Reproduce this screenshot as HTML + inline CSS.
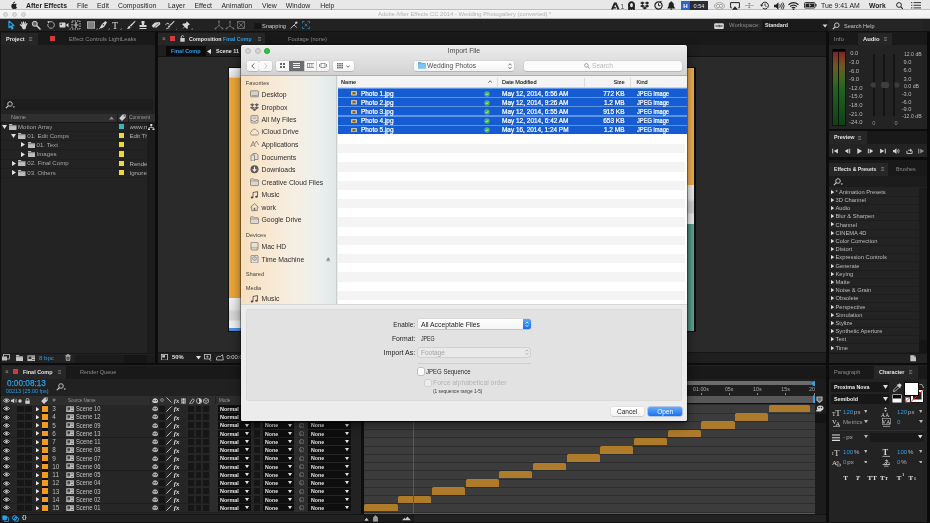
<!DOCTYPE html>
<html><head><meta charset="utf-8"><title>After Effects - Import File</title>
<style>
html,body{margin:0;padding:0;background:#232323;}
body{width:930px;height:523px;overflow:hidden;font-family:"Liberation Sans",sans-serif;}
#root{will-change:transform;position:relative;width:930px;height:523px;overflow:hidden;background:#232323;}
#root div,#root span,#root svg{box-sizing:border-box;}
</style></head><body>
<div id="root">
<!-- mac menubar -->
<div style="position:absolute;left:0px;top:0px;width:930px;height:10.4px;background:#e8e8e8;border-bottom:.8px solid #bcbcbc;"></div>
<svg style="position:absolute;left:9.5px;top:1.2px;" width="8" height="9" viewBox="0 0 10 12"><path d="M5.6 2.6c.5-.6.8-1.3.7-2.1-.7 0-1.5.5-1.9 1-.4.5-.8 1.300-.7 2 .8.100 1.500-.400 1.900-.900zM7.700 6.500c0-1.200 1-1.800 1-1.800-.600-.800-1.400-.900-1.700-.900-.700-.100-1.400.400-1.800.400-.400 0-.900-.400-1.500-.400-.800 0-1.500.500-1.900 1.200-.800 1.400-.200 3.500.600 4.600.400.600.900 1.200 1.500 1.200.600 0 .800-.400 1.500-.400s.900.400 1.500.400 1-.600 1.400-1.100c.400-.600.600-1.300.600-1.300s-1.200-.500-1.200-1.900z" fill="#222"/></svg>
<span style="position:absolute;top:1.529px;font-size:6.9px;line-height:8.28px;color:#1a1a1a;white-space:nowrap;font-weight:bold;left:26px;">After Effects</span>
<span style="position:absolute;top:1.529px;font-size:6.9px;line-height:8.28px;color:#1f1f1f;white-space:nowrap;left:77px;">File</span>
<span style="position:absolute;top:1.529px;font-size:6.9px;line-height:8.28px;color:#1f1f1f;white-space:nowrap;left:97px;">Edit</span>
<span style="position:absolute;top:1.529px;font-size:6.9px;line-height:8.28px;color:#1f1f1f;white-space:nowrap;left:118px;">Composition</span>
<span style="position:absolute;top:1.529px;font-size:6.9px;line-height:8.28px;color:#1f1f1f;white-space:nowrap;left:168px;">Layer</span>
<span style="position:absolute;top:1.529px;font-size:6.9px;line-height:8.28px;color:#1f1f1f;white-space:nowrap;left:194.5px;">Effect</span>
<span style="position:absolute;top:1.529px;font-size:6.9px;line-height:8.28px;color:#1f1f1f;white-space:nowrap;left:221.5px;">Animation</span>
<span style="position:absolute;top:1.529px;font-size:6.9px;line-height:8.28px;color:#1f1f1f;white-space:nowrap;left:262px;">View</span>
<span style="position:absolute;top:1.529px;font-size:6.9px;line-height:8.28px;color:#1f1f1f;white-space:nowrap;left:285.8px;">Window</span>
<span style="position:absolute;top:1.529px;font-size:6.9px;line-height:8.28px;color:#1f1f1f;white-space:nowrap;left:320.2px;">Help</span>
<span style="position:absolute;top:1.529px;font-size:6.9px;line-height:8.28px;color:#1f1f1f;white-space:nowrap;left:821px;">Tue 9:41 AM</span>
<span style="position:absolute;top:1.529px;font-size:6.9px;line-height:8.28px;color:#1a1a1a;white-space:nowrap;font-weight:bold;left:868.8px;transform:scaleX(0.9752);transform-origin:0 50%;">Work</span>
<svg style="position:absolute;left:611px;top:1.5px;" width="14" height="8" viewBox="0 0 14 8"><path d="M0 7.500L3 .5h2.500L8.500 7.500H6.500L4.300 2.500 3.200 5h1.300l.7 1.400H2.600L2.100 7.500z" fill="#222"/><text x="9.500" y="7" font-size="6.500" font-family="Liberation Sans" fill="#444">1</text></svg>
<svg style="position:absolute;left:627px;top:1px;" width="9" height="9.5" viewBox="0 0 9 9.5"><path d="M4.500.3C2.300.3 1 2 1 4.200c0 1.500.3 3 .2 4.800h2l.3-1.200.6 1.200h.8l.6-1.200.3 1.200h2C7.700 7.200 8 5.700 8 4.200 8 2 6.700.3 4.500.3z" fill="#222"/><ellipse cx="4.500" cy="4.200" rx="1.400" ry="2.100" fill="#e8e8e8"/></svg>
<svg style="position:absolute;left:639.5px;top:1.2px;" width="9.5" height="9" viewBox="0 0 9.5 9"><path d="M2.400.4L0 2l2.400 1.500L4.750 2zM7.100.4L4.750 2 7.100 3.500 9.500 2zM0 5l2.400 1.600L4.750 5 2.400 3.500zM7.100 3.500L4.750 5l2.350 1.600L9.500 5zM2.400 7.100l2.350 1.500L7.100 7.100 4.750 5.600z" fill="#222"/></svg>
<svg style="position:absolute;left:653.5px;top:1px;" width="9" height="9" viewBox="0 0 9 9"><circle cx="4.500" cy="4.500" r="3.600" fill="none" stroke="#222" stroke-width="1.200"/><path d="M4.500 2.300v2.400h1.900" fill="none" stroke="#222" stroke-width="1"/><path d="M5.800 0l2 .3-1 1.600z" fill="#222"/></svg>
<svg style="position:absolute;left:667px;top:1.2px;" width="8.5" height="9" viewBox="0 0 8.5 9"><path d="M4.250.2c.5 0 .7.300.7.700C6.300 1.300 6.800 2.600 6.800 4c0 1.600.6 2.300 1.400 2.900v.5H.3v-.5C1.100 6.300 1.700 5.600 1.700 4c0-1.400.5-2.700 1.850-3.100 0-.4.200-.7.700-.7zM3.300 7.800h1.900c0 .6-.4 1-.95 1s-.95-.4-.95-1z" fill="#222"/></svg>
<div style="position:absolute;left:681px;top:1.3px;width:9px;height:8.4px;background:#2f63c8;"></div>
<span style="position:absolute;top:2.192px;font-size:6.2px;line-height:7.44px;color:#fff;white-space:nowrap;font-weight:bold;left:680.5px;width:10px;text-align:center;">H</span>
<div style="position:absolute;left:690px;top:1.3px;width:18px;height:8.4px;background:#2a2c33;"></div>
<span style="position:absolute;top:2.76px;font-size:5.6px;line-height:6.72px;color:#e4e4e4;white-space:nowrap;left:689.0px;width:20px;text-align:center;">0:54</span>
<svg style="position:absolute;left:713.5px;top:1.5px;" width="11" height="8" viewBox="0 0 11 8"><ellipse cx="5.500" cy="4" rx="5" ry="3.400" fill="none" stroke="#a6a6a6" stroke-width="1"/><circle cx="4" cy="4" r="1.700" fill="none" stroke="#a6a6a6" stroke-width=".9"/><circle cx="7" cy="4" r="1.700" fill="none" stroke="#a6a6a6" stroke-width=".9"/></svg>
<svg style="position:absolute;left:730px;top:1.5px;" width="10" height="8" viewBox="0 0 10 8"><path d="M1.800 5.800H.6V.6h8.800v5.200H8.200" fill="none" stroke="#222" stroke-width="1"/><path d="M5 4.200L8 7.700H2z" fill="#222"/></svg>
<svg style="position:absolute;left:745px;top:2px;" width="8.5" height="7" viewBox="0 0 8.5 7"><path d="M0 3.500h8.500M4.250 1v5" stroke="#999" stroke-width=".8"/><path d="M2.900 2L4.250.4 5.600 2zM2.900 5l1.350 1.600L5.600 5z" fill="#8a8a8a"/></svg>
<svg style="position:absolute;left:759.5px;top:1px;" width="9.5" height="9" viewBox="0 0 9.5 9"><path d="M1.600 4.500a3.400 3.400 0 1 1 1 2.500" fill="none" stroke="#222" stroke-width="1"/><path d="M0 3.700l1.600 2 1.700-2z" fill="#222"/><path d="M5 2.500v2.200l1.500 1" fill="none" stroke="#222" stroke-width=".9"/></svg>
<svg style="position:absolute;left:773.5px;top:1.5px;" width="11" height="8" viewBox="0 0 11 8"><path d="M0 2.700h1.800L4.500.3v7.400L1.800 5.300H0z" fill="#222"/><path d="M5.800 2.300q1.100 1.700 0 3.400M7.300 1.300q1.900 2.700 0 5.400M8.800.4q2.700 3.600 0 7.200" fill="none" stroke="#222" stroke-width=".9"/></svg>
<svg style="position:absolute;left:788px;top:1.5px;" width="11" height="8" viewBox="0 0 11 8"><path d="M.5 2.800q5-4.200 10 0M2.100 4.500q3.400-2.800 6.800 0M3.700 6.100q1.800-1.500 3.600 0" fill="none" stroke="#222" stroke-width="1.150"/><circle cx="5.500" cy="7.300" r=".8" fill="#222"/></svg>
<svg style="position:absolute;left:804px;top:2.2px;" width="13" height="6.5" viewBox="0 0 13 6.5"><rect x=".5" y=".5" width="10.500" height="5.500" rx="1" fill="none" stroke="#222" stroke-width=".9"/><rect x="1.500" y="1.500" width="8.500" height="3.500" fill="#222"/><rect x="11.300" y="2" width="1.200" height="2.500" fill="#222"/><path d="M6.300 1.300L4.700 3.500h1.100L5.300 5.200 7 3h-1.100z" fill="#e8e8e8"/></svg>
<svg style="position:absolute;left:895.5px;top:1.8px;" width="7.5" height="7.5" viewBox="0 0 7.5 7.5"><circle cx="3" cy="3" r="2.400" fill="none" stroke="#222" stroke-width=".95"/><path d="M4.800 4.800L7.100 7.100" stroke="#222" stroke-width="1.100"/></svg>
<svg style="position:absolute;left:910.5px;top:2.3px;" width="10" height="6.5" viewBox="0 0 10 6.5"><path d="M0 .6h1.300M2.500 .6H10M0 3.250h1.300M2.500 3.250H10M0 5.900h1.300M2.500 5.900H10" stroke="#222" stroke-width=".9"/></svg>
<!-- app window title bar -->
<div style="position:absolute;left:0px;top:10.4px;width:930px;height:8.5px;background:linear-gradient(#f7f7f7,#f0f0f0);border-bottom:.8px solid #b4b4b4;"></div>
<div style="position:absolute;left:2.5px;top:12.2px;width:5px;height:5px;background:#dcdcdc;border-radius:50%;border:0.5px solid #c8c8c8;"></div>
<div style="position:absolute;left:11.5px;top:12.2px;width:5px;height:5px;background:#dcdcdc;border-radius:50%;border:0.5px solid #c8c8c8;"></div>
<div style="position:absolute;left:20.5px;top:12.2px;width:5px;height:5px;background:#dcdcdc;border-radius:50%;border:0.5px solid #c8c8c8;"></div>
<span style="position:absolute;top:11.476px;font-size:5.9px;line-height:7.08px;color:#b4b4b4;white-space:nowrap;left:378px;">Adobe After Effects CC 2014 - Wedding Photogallery (converted) *</span>
<!-- tools -->
<div style="position:absolute;left:0px;top:18.9px;width:930px;height:13.1px;background:#222222;"></div>
<div style="position:absolute;left:0px;top:31px;width:930px;height:1.5px;background:#111;"></div>
<svg style="position:absolute;left:6.0px;top:20.2px;" width="10" height="10" viewBox="0 0 10 10"><path d="M3 1l5 4.600-2.200.2 1.200 2.600-1 .5-1.200-2.700L3 7.700z" fill="none" stroke="#2ba0ea" stroke-width="1.250" stroke-linejoin="round"/></svg>
<svg style="position:absolute;left:19.25px;top:20.7px;" width="9.5" height="9" viewBox="0 0 9.5 9"><path d="M3 6L1 4.300c-.6-.6.200-1.400.9-.9l1 .8L2.200 1.600c-.2-.8.900-1.100 1.100-.3l.6 2L4 .9c0-.8 1.100-.8 1.100 0l.1 2.300.7-2c.3-.8 1.300-.4 1 .3L6.400 3.800l1.200-1.500c.5-.6 1.300 0 .8.700L7.300 5c-.4 1-.4 2.100-.9 3.200L3.600 8.300C3.300 7.500 3.300 6.700 3 6z" fill="#d6d6d6"/></svg>
<svg style="position:absolute;left:31.0px;top:20.2px;" width="10" height="10" viewBox="0 0 10 10"><circle cx="3.800" cy="3.800" r="2.500" fill="#6a6a6a" stroke="#d6d6d6" stroke-width="1"/><path d="M5.800 5.800l3.200 3.200" stroke="#d6d6d6" stroke-width="1.500" stroke-linecap="round"/></svg>
<svg style="position:absolute;left:46.4px;top:20.2px;" width="10" height="10" viewBox="0 0 10 10"><path d="M3.400 2.100a3.300 3.300 0 1 1-1.500 1.900" fill="none" stroke="#b4b4b4" stroke-width=".9"/><path d="M1.300 1.200l2.800.1L2.400 3.600z" fill="#d6d6d6"/></svg>
<svg style="position:absolute;left:59.0px;top:20.2px;" width="10" height="10" viewBox="0 0 10 10"><rect x=".5" y="2.500" width="6" height="5" rx=".8" fill="#d6d6d6"/><path d="M6.800 5l2.700-2v4.600z" fill="#d6d6d6"/><circle cx="2.200" cy="4.200" r=".8" fill="#222"/></svg>
<svg style="position:absolute;left:69px;top:28.2px;" width="1.6" height="1.6" viewBox="0 0 1.6 1.6"><path d="M0 1.600L1.600 0V1.600z" fill="#a8a8a8"/></svg>
<svg style="position:absolute;left:71.0px;top:20.2px;" width="10" height="10" viewBox="0 0 10 10"><rect x="1" y="1" width="8" height="8" fill="none" stroke="#d6d6d6" stroke-width=".9" stroke-dasharray="1.500 1"/><path d="M5 2.500v5M2.500 5h5" stroke="#d6d6d6" stroke-width=".9"/><path d="M4 3.300L5 2l1 1.300zM4 6.700L5 8l1-1.300z" fill="#d6d6d6"/></svg>
<svg style="position:absolute;left:86.0px;top:20.2px;" width="10" height="10" viewBox="0 0 10 10"><rect x="1.400" y="1.800" width="7.200" height="6.400" fill="#7a7a7a" stroke="#c4c4c4" stroke-width=".8"/><path d="M1.400 4h7.200M1.400 6h7.200M3.800 1.800v6.400M6.200 1.800v6.400" stroke="#8e8e8e" stroke-width=".4"/></svg>
<svg style="position:absolute;left:96px;top:28.2px;" width="1.6" height="1.6" viewBox="0 0 1.6 1.6"><path d="M0 1.600L1.600 0V1.600z" fill="#a8a8a8"/></svg>
<svg style="position:absolute;left:98.0px;top:20.2px;" width="10" height="10" viewBox="0 0 10 10"><path d="M7.500 1L9 2.500 6 7 3 8.500 2 8l.5-1.500L4 4z" fill="#d6d6d6"/><path d="M1 9l1.600-1.600" stroke="#d6d6d6" stroke-width=".8"/><circle cx="5.300" cy="4.800" r=".7" fill="#222"/></svg>
<svg style="position:absolute;left:108px;top:28.2px;" width="1.6" height="1.6" viewBox="0 0 1.6 1.6"><path d="M0 1.600L1.600 0V1.600z" fill="#a8a8a8"/></svg>
<span style="position:absolute;top:19.685px;font-size:10px;line-height:12.0px;color:#d6d6d6;white-space:nowrap;font-family:'Liberation Serif',serif;left:109.0px;width:12px;text-align:center;">T</span>
<svg style="position:absolute;left:120px;top:28.2px;" width="1.6" height="1.6" viewBox="0 0 1.6 1.6"><path d="M0 1.600L1.600 0V1.600z" fill="#a8a8a8"/></svg>
<svg style="position:absolute;left:126.0px;top:20.2px;" width="10" height="10" viewBox="0 0 10 10"><path d="M9 .8L9.600 1.400 5 6.500 3.800 5.400z" fill="#d6d6d6"/><path d="M3.400 5.800l1.200 1.100C4.200 8.500 2.500 9 .8 8.700 2 8 2.200 6.300 3.400 5.800z" fill="#d6d6d6"/></svg>
<svg style="position:absolute;left:138.0px;top:20.2px;" width="10" height="10" viewBox="0 0 10 10"><path d="M4 1h2c.8 0 .8.800.5 1.500L6 5h2.500v2h-7V5H4l-.5-2.500C3.200 1.800 3.200 1 4 1zM1.500 8h7v1h-7z" fill="#d6d6d6"/></svg>
<svg style="position:absolute;left:150.5px;top:20.2px;" width="10" height="10" viewBox="0 0 10 10"><path d="M4 2.500l4.500-.5 1 2L5.500 7.500H2L.8 5.500z" fill="#d6d6d6"/><path d="M3 7.500l4.500-4" stroke="#222" stroke-width=".6"/></svg>
<svg style="position:absolute;left:165.0px;top:20.2px;" width="10" height="10" viewBox="0 0 10 10"><path d="M9 .8l.6.6-4 4.400-1-.9z" fill="#d6d6d6"/><path d="M4.200 5.200l1 .9c-.3 1.200-1.500 1.600-2.700 1.400.8-.5.900-1.900 1.700-2.300z" fill="#d6d6d6"/><path d="M.5 4.500L3 3l1 1.500" fill="none" stroke="#d6d6d6" stroke-width=".9"/><path d="M1 8.800l3.500-1" stroke="#d6d6d6" stroke-width=".8"/></svg>
<svg style="position:absolute;left:175.5px;top:28.2px;" width="1.6" height="1.6" viewBox="0 0 1.6 1.6"><path d="M0 1.600L1.600 0V1.600z" fill="#a8a8a8"/></svg>
<svg style="position:absolute;left:181.0px;top:20.2px;" width="10" height="10" viewBox="0 0 10 10"><path d="M5.500 1l3.500 3.500-1 .2-1.300 1.300.2 2.200-1 .8L3.800 6.900 1 9.300l2.400-2.800L1.300 4.400l.8-1 2.200.2 1.300-1.300z" fill="#d6d6d6"/></svg>
<svg style="position:absolute;left:191px;top:28.2px;" width="1.6" height="1.6" viewBox="0 0 1.6 1.6"><path d="M0 1.600L1.600 0V1.600z" fill="#a8a8a8"/></svg>
<svg style="position:absolute;left:214.0px;top:20.2px;" width="10" height="10" viewBox="0 0 10 10"><path d="M5 1v4.500M5 5.500L1.500 8.500M5 5.500L8.500 8.500" stroke="#727272" stroke-width=".9" fill="none"/><circle cx="5" cy="1.300" r=".9" fill="#727272"/><circle cx="1.500" cy="8.500" r=".9" fill="#727272"/><circle cx="8.500" cy="8.500" r=".9" fill="#727272"/></svg>
<svg style="position:absolute;left:225.0px;top:20.2px;" width="10" height="10" viewBox="0 0 10 10"><path d="M5 1v5M5 6L1.500 8.500M5 6l3.500 2.500" stroke="#727272" stroke-width=".9" fill="none"/><path d="M3.800 2.300L5 .5l1.200 1.800z" fill="#727272"/><circle cx="1.500" cy="8.500" r=".9" fill="#727272"/><circle cx="8.500" cy="8.500" r=".9" fill="#727272"/></svg>
<svg style="position:absolute;left:236.0px;top:20.2px;" width="10" height="10" viewBox="0 0 10 10"><path d="M1.500 1.500l7 7M8.500 1.500l-7 7M1.500 1.500h7v7h-7z" stroke="#727272" stroke-width=".8" fill="none"/></svg>
<div style="position:absolute;left:254px;top:22.5px;width:6.5px;height:6.2px;background:#151515;"></div>
<span style="position:absolute;top:22.192px;font-size:6.2px;line-height:7.44px;color:#d0d0d0;white-space:nowrap;left:262.4px;transform:scaleX(0.9159);transform-origin:0 50%;">Snapping</span>
<svg style="position:absolute;left:289.0px;top:20.2px;" width="10" height="10" viewBox="0 0 10 10"><path d="M1.500 8.500L5 5M5 5L7.800 7.600" stroke="#c8c8c8" stroke-width=".9" fill="none"/><circle cx="7.300" cy="2.600" r="1.200" fill="#c8c8c8"/><path d="M5 5l2-2" stroke="#c8c8c8" stroke-width=".8"/></svg>
<svg style="position:absolute;left:300.5px;top:20.2px;" width="10" height="10" viewBox="0 0 10 10"><path d="M1.500 3.300V1.500h1.800M6.700 1.500h1.800v1.800M8.500 6.700v1.800H6.700M3.300 8.500H1.500V6.700" stroke="#2488bc" stroke-width=".9" fill="none"/><path d="M3.600 3.600l2.800 2.800M6.400 3.600L3.600 6.400" stroke="#2488bc" stroke-width=".8"/></svg>
<div style="position:absolute;left:762px;top:20px;width:66px;height:11px;background:#1a1a1a;"></div>
<svg style="position:absolute;left:714px;top:22.5px;" width="11" height="6.5" viewBox="0 0 11 6.5"><rect x=".2" y=".2" width="9.600" height="5.800" rx="1" fill="#d6d6d6"/><path d="M1.500 3h2.500M5 1.800v2.400M5 3h3.500" stroke="#222" stroke-width=".9"/></svg>
<span style="position:absolute;top:22.476px;font-size:5.9px;line-height:7.08px;color:#8d8d8d;white-space:nowrap;left:729px;">Workspace:</span>
<span style="position:absolute;top:22.476px;font-size:5.9px;line-height:7.08px;color:#e6e6e6;white-space:nowrap;font-weight:bold;left:765px;transform:scaleX(0.8994);transform-origin:0 50%;">Standard</span>
<svg style="position:absolute;left:822px;top:24px;" width="6" height="4" viewBox="0 0 6 4"><path d="M.5 .5h5L3 3.500z" fill="#d6d6d6"/></svg>
<div style="position:absolute;left:830px;top:20px;width:93px;height:11px;background:#252525;"></div>
<svg style="position:absolute;left:832px;top:21.5px;" width="8" height="8" viewBox="0 0 8 8"><circle cx="4.800" cy="3.200" r="2.300" fill="none" stroke="#d6d6d6" stroke-width=".9"/><path d="M3.200 4.800L.8 7.200" stroke="#d6d6d6" stroke-width="1.100"/></svg>
<span style="position:absolute;top:22.286px;font-size:6.1px;line-height:7.32px;color:#c4c4c4;white-space:nowrap;left:844px;transform:scaleX(0.9086);transform-origin:0 50%;">Search Help</span>
<!-- project panel -->
<div style="position:absolute;left:0px;top:32px;width:155px;height:331px;background:#232323;"></div>
<div style="position:absolute;left:0px;top:32px;width:155px;height:13px;background:#191919;"></div>
<div style="position:absolute;left:1px;top:32.5px;width:36.5px;height:12.5px;background:#262626;"></div>
<span style="position:absolute;top:35.286px;font-size:6.1px;line-height:7.32px;color:#e4e4e4;white-space:nowrap;font-weight:bold;left:6px;transform:scaleX(0.8946);transform-origin:0 50%;">Project</span>
<svg style="position:absolute;left:29.4px;top:37.1px;" width="3.2" height="4" viewBox="0 0 3.2 4"><path d="M0 .5h3.200M0 2h3.200M0 3.500h3.200" stroke="#777" stroke-width=".75"/></svg>
<div style="position:absolute;left:50px;top:36px;width:5px;height:5px;background:#d23b3b;"></div>
<span style="position:absolute;top:35.286px;font-size:6.1px;line-height:7.32px;color:#8c8c8c;white-space:nowrap;left:69px;transform:scaleX(0.9494);transform-origin:0 50%;">Effect Controls LightLeaks</span>
<div style="position:absolute;left:3.5px;top:98.5px;width:149px;height:11.5px;background:#1d1d1d;"></div>
<svg style="position:absolute;left:4.5px;top:100.5px;" width="11" height="8" viewBox="0 0 11 8"><circle cx="5" cy="3" r="2.300" fill="none" stroke="#cfcfcf" stroke-width=".9"/><path d="M3.400 4.600L.9 7.100" stroke="#cfcfcf" stroke-width="1.100"/><path d="M7.600 5.500h2.400L8.800 6.900z" fill="#cfcfcf"/></svg>
<div style="position:absolute;left:1px;top:113.5px;width:153.5px;height:8px;background:#2f2f2f;"></div>
<div style="position:absolute;left:1px;top:121.5px;width:153.5px;height:0.8px;background:#161616;"></div>
<span style="position:absolute;top:113.76px;font-size:5.6px;line-height:6.72px;color:#9a9a9a;white-space:nowrap;left:11px;">Name</span>
<svg style="position:absolute;left:109px;top:115.5px;" width="5" height="4" viewBox="0 0 5 4"><path d="M0 3.500L2.500 .5 5 3.500z" fill="#8c8c8c"/></svg>
<svg style="position:absolute;left:119px;top:114px;" width="7" height="7" viewBox="0 0 7 7"><path d="M3.600.5h3v3L3 7 .200 4.200z" fill="#d0d0d0"/><circle cx="5.300" cy="1.900" r=".7" fill="#2f2f2f"/></svg>
<span style="position:absolute;top:113.76px;font-size:5.6px;line-height:6.72px;color:#9a9a9a;white-space:nowrap;left:129.3px;transform:scaleX(0.8651);transform-origin:0 50%;">Comment</span>
<div style="position:absolute;left:116.5px;top:113.5px;width:0.6px;height:8px;background:#1c1c1c;"></div>
<div style="position:absolute;left:127.5px;top:113.5px;width:0.6px;height:8px;background:#1c1c1c;"></div>
<div style="position:absolute;left:147px;top:122.5px;width:8px;height:231.5px;background:#1c1c1c;"></div>
<svg style="position:absolute;left:2.0px;top:124.7px;" width="5.0" height="4.0" viewBox="0 0 5 4"><path d="M0 0h5L2.500 4z" fill="#e0e0e0"/></svg>
<svg style="position:absolute;left:9.0px;top:123.7px;" width="7.5" height="6" viewBox="0 0 7.5 6"><path d="M0 .6C0 .3.200 0 .5 0h2.300l.7.900H7c.3 0 .5.200.5.500V5.500c0 .3-.2.500-.5.500H.5C.2 6 0 5.800 0 5.500z" fill="#bdbdbd"/><path d="M0 1.700h7.500" stroke="#3a3a3a" stroke-width=".5"/></svg>
<span style="position:absolute;top:123.286px;font-size:6.1px;line-height:7.32px;color:#a6a6a6;white-space:nowrap;left:18.0px;">Motion Array</span>
<div style="position:absolute;left:119px;top:124.0px;width:5.3px;height:5.3px;background:#3fb3b8;"></div>
<div style="position:absolute;left:129.500px;top:122.7px;width:17.200px;height:8px;overflow:hidden"><span style="position:absolute;top:0.286px;font-size:6.1px;line-height:7.32px;color:#b0b0b0;white-space:nowrap;left:0px;">www.n</span></div>
<div style="position:absolute;left:1px;top:131.1px;width:146px;height:0.6px;background:#1f1f1f;"></div>
<svg style="position:absolute;left:11.3px;top:133.6px;" width="5.0" height="4.0" viewBox="0 0 5 4"><path d="M0 0h5L2.500 4z" fill="#e0e0e0"/></svg>
<svg style="position:absolute;left:18.3px;top:132.6px;" width="7.5" height="6" viewBox="0 0 7.5 6"><path d="M0 .6C0 .3.200 0 .5 0h2.300l.7.900H7c.3 0 .5.200.5.500V5.500c0 .3-.2.500-.5.500H.5C.2 6 0 5.800 0 5.500z" fill="#bdbdbd"/><path d="M0 1.700h7.500" stroke="#3a3a3a" stroke-width=".5"/></svg>
<span style="position:absolute;top:132.286px;font-size:6.1px;line-height:7.32px;color:#a6a6a6;white-space:nowrap;left:27.3px;">01. Edit Comps</span>
<div style="position:absolute;left:119px;top:132.9px;width:5.3px;height:5.3px;background:#ecd93f;"></div>
<div style="position:absolute;left:129.500px;top:131.6px;width:17.200px;height:8px;overflow:hidden"><span style="position:absolute;top:0.286px;font-size:6.1px;line-height:7.32px;color:#b0b0b0;white-space:nowrap;left:0px;">Edit Th</span></div>
<div style="position:absolute;left:1px;top:140.0px;width:146px;height:0.6px;background:#1f1f1f;"></div>
<svg style="position:absolute;left:21.1px;top:142.3px;" width="4.0" height="5.0" viewBox="0 0 4 5"><path d="M0 0L4 2.500 0 5z" fill="#e0e0e0"/></svg>
<svg style="position:absolute;left:27.6px;top:141.8px;" width="7.5" height="6" viewBox="0 0 7.5 6"><path d="M0 .6C0 .3.200 0 .5 0h2.300l.7.900H7c.3 0 .5.200.5.500V5.500c0 .3-.2.500-.5.500H.5C.2 6 0 5.800 0 5.500z" fill="#bdbdbd"/><path d="M0 1.700h7.500" stroke="#3a3a3a" stroke-width=".5"/></svg>
<span style="position:absolute;top:141.286px;font-size:6.1px;line-height:7.32px;color:#a6a6a6;white-space:nowrap;left:36.6px;">01. Text</span>
<div style="position:absolute;left:119px;top:142.10000000000002px;width:5.3px;height:5.3px;background:#ecd93f;"></div>
<div style="position:absolute;left:1px;top:149.20000000000002px;width:146px;height:0.6px;background:#1f1f1f;"></div>
<svg style="position:absolute;left:21.1px;top:151.6px;" width="4.0" height="5.0" viewBox="0 0 4 5"><path d="M0 0L4 2.500 0 5z" fill="#e0e0e0"/></svg>
<svg style="position:absolute;left:27.6px;top:151.1px;" width="7.5" height="6" viewBox="0 0 7.5 6"><path d="M0 .6C0 .3.200 0 .5 0h2.300l.7.900H7c.3 0 .5.200.5.500V5.500c0 .3-.2.500-.5.500H.5C.2 6 0 5.800 0 5.500z" fill="#bdbdbd"/><path d="M0 1.700h7.500" stroke="#3a3a3a" stroke-width=".5"/></svg>
<span style="position:absolute;top:150.286px;font-size:6.1px;line-height:7.32px;color:#a6a6a6;white-space:nowrap;left:36.6px;">Images</span>
<div style="position:absolute;left:119px;top:151.4px;width:5.3px;height:5.3px;background:#ecd93f;"></div>
<div style="position:absolute;left:1px;top:158.5px;width:146px;height:0.6px;background:#1f1f1f;"></div>
<svg style="position:absolute;left:11.8px;top:160.8px;" width="4.0" height="5.0" viewBox="0 0 4 5"><path d="M0 0L4 2.500 0 5z" fill="#e0e0e0"/></svg>
<svg style="position:absolute;left:18.3px;top:160.3px;" width="7.5" height="6" viewBox="0 0 7.5 6"><path d="M0 .6C0 .3.200 0 .5 0h2.300l.7.900H7c.3 0 .5.200.5.500V5.500c0 .3-.2.500-.5.500H.5C.2 6 0 5.800 0 5.500z" fill="#bdbdbd"/><path d="M0 1.700h7.500" stroke="#3a3a3a" stroke-width=".5"/></svg>
<span style="position:absolute;top:159.286px;font-size:6.1px;line-height:7.32px;color:#a6a6a6;white-space:nowrap;left:27.3px;">02. Final Comp</span>
<div style="position:absolute;left:119px;top:160.60000000000002px;width:5.3px;height:5.3px;background:#ecd93f;"></div>
<div style="position:absolute;left:129.500px;top:159.3px;width:17.200px;height:8px;overflow:hidden"><span style="position:absolute;top:0.286px;font-size:6.1px;line-height:7.32px;color:#b0b0b0;white-space:nowrap;left:0px;">Render</span></div>
<div style="position:absolute;left:1px;top:167.70000000000002px;width:146px;height:0.6px;background:#1f1f1f;"></div>
<svg style="position:absolute;left:11.8px;top:170.1px;" width="4.0" height="5.0" viewBox="0 0 4 5"><path d="M0 0L4 2.500 0 5z" fill="#e0e0e0"/></svg>
<svg style="position:absolute;left:18.3px;top:169.6px;" width="7.5" height="6" viewBox="0 0 7.5 6"><path d="M0 .6C0 .3.200 0 .5 0h2.300l.7.900H7c.3 0 .5.200.5.500V5.500c0 .3-.2.500-.5.500H.5C.2 6 0 5.800 0 5.500z" fill="#bdbdbd"/><path d="M0 1.700h7.500" stroke="#3a3a3a" stroke-width=".5"/></svg>
<span style="position:absolute;top:169.286px;font-size:6.1px;line-height:7.32px;color:#a6a6a6;white-space:nowrap;left:27.3px;">03. Others</span>
<div style="position:absolute;left:119px;top:169.9px;width:5.3px;height:5.3px;background:#ecd93f;"></div>
<div style="position:absolute;left:129.500px;top:168.6px;width:17.200px;height:8px;overflow:hidden"><span style="position:absolute;top:0.286px;font-size:6.1px;line-height:7.32px;color:#b0b0b0;white-space:nowrap;left:0px;">Ignore</span></div>
<div style="position:absolute;left:1px;top:177.0px;width:146px;height:0.6px;background:#1f1f1f;"></div>
<svg style="position:absolute;left:148px;top:123.5px;" width="6.5" height="6.5" viewBox="0 0 6.5 6.5"><rect x="2.250" y="0" width="2" height="2" fill="#ddd"/><rect x="0" y="4.500" width="2" height="2" fill="#ddd"/><rect x="4.500" y="4.500" width="2" height="2" fill="#ddd"/><path d="M3.250 2v1.500M1 4.500v-1h4.500v1" stroke="#ddd" stroke-width=".6" fill="none"/></svg>
<div style="position:absolute;left:0px;top:353.5px;width:155px;height:9.5px;background:#222;"></div>
<div style="position:absolute;left:0px;top:353.2px;width:155px;height:0.7px;background:#171717;"></div>
<div style="position:absolute;left:74.5px;top:354.5px;width:49px;height:8px;background:#1b1b1b;"></div>
<div style="position:absolute;left:123.5px;top:354.5px;width:23.5px;height:8px;background:#161616;"></div>
<div style="position:absolute;left:147px;top:354.5px;width:8px;height:8px;background:#1b1b1b;"></div>
<svg style="position:absolute;left:2px;top:354.1px;" width="8" height="7" viewBox="0 0 8 7"><rect x="1.500" y=".5" width="6" height="4.500" fill="none" stroke="#bbb" stroke-width=".8"/><rect x="0" y="2.500" width="5" height="4" fill="#bbb"/></svg>
<svg style="position:absolute;left:15.5px;top:354.8px;" width="7.5" height="6" viewBox="0 0 7.5 6"><path d="M0 .6C0 .3.200 0 .5 0h2.300l.7.900H7c.3 0 .5.200.5.500V5.500c0 .3-.2.500-.5.500H.5C.2 6 0 5.800 0 5.500z" fill="#c4c4c4"/><path d="M0 1.700h7.500" stroke="#3a3a3a" stroke-width=".5"/></svg>
<svg style="position:absolute;left:26.5px;top:354.5px;" width="8.5" height="6.5" viewBox="0 0 8.5 6.5"><rect x=".4" y=".4" width="7.700" height="5.700" fill="#bdbdbd"/><rect x="1.500" y="1.500" width="3" height="2.500" fill="#333"/><path d="M5 4.500h2.500M5.500 2h2" stroke="#333" stroke-width=".7"/></svg>
<span style="position:absolute;top:354.286px;font-size:6.1px;line-height:7.32px;color:#2ba0ea;white-space:nowrap;left:39px;">8 bpc</span>
<svg style="position:absolute;left:64.5px;top:354.4px;" width="6" height="7" viewBox="0 0 6 7"><path d="M.3 1.500h5.400M2 1.500V.6h2v.9M1 2.500h4l-.4 4.200H1.400z" fill="none" stroke="#bbb" stroke-width=".8"/><path d="M2.300 3.300v2.700M3.700 3.300v2.700" stroke="#bbb" stroke-width=".5"/></svg>
<div style="position:absolute;left:155px;top:32px;width:3px;height:331px;background:#0c0c0c;"></div>
<div style="position:absolute;left:826px;top:32px;width:2.5px;height:491px;background:#0c0c0c;"></div>
<div style="position:absolute;left:0px;top:362.8px;width:826px;height:2.7px;background:#0c0c0c;"></div>
<!-- composition panel -->
<div style="position:absolute;left:158px;top:32px;width:668px;height:331px;background:#2a2a2a;"></div>
<div style="position:absolute;left:158px;top:32px;width:668px;height:13px;background:#191919;"></div>
<div style="position:absolute;left:158px;top:32.5px;width:106.5px;height:12.5px;background:#262626;"></div>
<span style="position:absolute;top:34.908px;font-size:6.5px;line-height:7.8px;color:#9a9a9a;white-space:nowrap;left:160.0px;width:8px;text-align:center;">×</span>
<div style="position:absolute;left:170px;top:36px;width:5px;height:5px;background:#d23b3b;"></div>
<svg style="position:absolute;left:179.5px;top:34.8px;" width="5" height="7" viewBox="0 0 5 7"><rect x=".3" y="3" width="4.400" height="3.700" fill="#cfcfcf"/><path d="M1.300 3V1.800a1.200 1.200 0 0 1 2.400 0" fill="none" stroke="#cfcfcf" stroke-width=".8"/></svg>
<span style="position:absolute;top:35.286px;font-size:6.1px;line-height:7.32px;color:#e4e4e4;white-space:nowrap;font-weight:bold;left:188.8px;transform:scaleX(0.8719);transform-origin:0 50%;">Composition</span>
<span style="position:absolute;top:35.286px;font-size:6.1px;line-height:7.32px;color:#2ba0ea;white-space:nowrap;font-weight:bold;left:223.3px;transform:scaleX(0.8642);transform-origin:0 50%;">Final Comp</span>
<svg style="position:absolute;left:257.9px;top:37.1px;" width="3.2" height="4" viewBox="0 0 3.2 4"><path d="M0 .5h3.200M0 2h3.200M0 3.500h3.200" stroke="#777" stroke-width=".75"/></svg>
<span style="position:absolute;top:35.286px;font-size:6.1px;line-height:7.32px;color:#8c8c8c;white-space:nowrap;left:287.5px;transform:scaleX(0.935);transform-origin:0 50%;">Footage (none)</span>
<div style="position:absolute;left:158px;top:45px;width:668px;height:11.3px;background:#1f1f1f;"></div>
<div style="position:absolute;left:158px;top:56px;width:668px;height:0.9px;background:#131313;"></div>
<div style="position:absolute;left:166px;top:45.8px;width:39.5px;height:10.4px;background:#0b0b0b;"></div>
<span style="position:absolute;top:47.286px;font-size:6.1px;line-height:7.32px;color:#2ba0ea;white-space:nowrap;font-weight:bold;left:171px;transform:scaleX(0.8883);transform-origin:0 50%;">Final Comp</span>
<svg style="position:absolute;left:206.5px;top:48.5px;" width="4" height="5" viewBox="0 0 4 5"><path d="M4 0L0 2.500 4 5z" fill="#e0e0e0"/></svg>
<span style="position:absolute;top:47.286px;font-size:6.1px;line-height:7.32px;color:#e2e2e2;white-space:nowrap;font-weight:bold;left:215.5px;transform:scaleX(0.8807);transform-origin:0 50%;">Scene 11</span>
<div style="position:absolute;left:228px;top:67.4px;width:467.5px;height:264.2px;background:#0e0e0e;"></div>
<div style="position:absolute;left:229px;top:68.4px;width:465.3px;height:230px;background:linear-gradient(90deg,#eca636,#f0b150);"></div>
<div style="position:absolute;left:229px;top:68.4px;width:20px;height:9.3px;background:linear-gradient(#f4f4f4,#e2e4e8 80%,#efc98a);"></div>
<div style="position:absolute;left:229px;top:298px;width:20px;height:30.5px;background:linear-gradient(#f2f2f2,#e9e9e9 35%,#d6d6d6 45%,#d8d8d8 70%,#efefef 75%,#f4f4f4);"></div>
<div style="position:absolute;left:229px;top:328px;width:20px;height:2.5px;background:#4a90e0;"></div>
<div style="position:absolute;left:680px;top:185px;width:14.3px;height:39px;background:linear-gradient(#f0f0f0,#ededed 35%,#d2d2d2 45%,#d0d0d0 70%,#ebebeb 75%,#f0f0f0);"></div>
<div style="position:absolute;left:680px;top:224px;width:14.3px;height:106.5px;background:linear-gradient(90deg,#3e8270 50%,#56998a 75%,#68a898);"></div>
<div style="position:absolute;left:158px;top:352px;width:668px;height:11px;background:#1f1f1f;"></div>
<div style="position:absolute;left:158px;top:351.6px;width:668px;height:0.7px;background:#171717;"></div>
<svg style="position:absolute;left:160.5px;top:353.8px;" width="7" height="6.5" viewBox="0 0 7 6.5"><rect x=".4" y=".4" width="6.200" height="5.700" fill="none" stroke="#c8c8c8" stroke-width=".8"/><rect x="1.200" y="1.200" width="2.800" height="2.300" fill="#c8c8c8"/></svg>
<span style="position:absolute;top:353.57px;font-size:5.8px;line-height:6.96px;color:#e0e0e0;white-space:nowrap;font-weight:bold;left:172px;">50%</span>
<svg style="position:absolute;left:195.5px;top:355.5px;" width="5" height="4" viewBox="0 0 5 4"><path d="M0 0h5L2.500 3.500z" fill="#e0e0e0"/></svg>
<svg style="position:absolute;left:204px;top:353.7px;" width="8" height="7" viewBox="0 0 8 7"><rect x=".4" y=".4" width="6" height="4.500" fill="none" stroke="#c8c8c8" stroke-width=".8"/><path d="M3.400 1.500v2.300M2.200 2.650h2.400M5 5.200l2.300 1.500" stroke="#c8c8c8" stroke-width=".7"/></svg>
<svg style="position:absolute;left:215.5px;top:353.7px;" width="8" height="7" viewBox="0 0 8 7"><path d="M.5 6V3.500L3 2l1 .8L6.500.6 7.300 6z" fill="none" stroke="#c8c8c8" stroke-width=".8"/></svg>
<span style="position:absolute;top:353.57px;font-size:5.8px;line-height:6.96px;color:#dcdcdc;white-space:nowrap;left:226.5px;">0:00:08:13</span>
<!-- right panels -->
<div style="position:absolute;left:828.5px;top:32px;width:101.5px;height:491px;background:#232323;"></div>
<div style="position:absolute;left:828.5px;top:32px;width:101.5px;height:13px;background:#191919;"></div>
<span style="position:absolute;top:35.286px;font-size:6.1px;line-height:7.32px;color:#8c8c8c;white-space:nowrap;left:833.7px;">Info</span>
<div style="position:absolute;left:857.5px;top:32.5px;width:34.5px;height:12.5px;background:#262626;"></div>
<span style="position:absolute;top:35.286px;font-size:6.1px;line-height:7.32px;color:#e4e4e4;white-space:nowrap;font-weight:bold;left:863px;transform:scaleX(0.9549);transform-origin:0 50%;">Audio</span>
<svg style="position:absolute;left:883.9px;top:37.1px;" width="3.2" height="4" viewBox="0 0 3.2 4"><path d="M0 .5h3.200M0 2h3.200M0 3.500h3.200" stroke="#777" stroke-width=".75"/></svg>
<div style="position:absolute;left:832px;top:48.5px;width:14px;height:77px;background:#111;"></div>
<div style="position:absolute;left:833px;top:49px;width:12px;height:1.8px;background:#000;"></div>
<div style="position:absolute;left:832.8px;top:52px;width:5.7px;height:73px;background:linear-gradient(#7a2622 0%,#7a3d22 8%,#6e5a1e 20%,#3f6a1e 36%,#1c6420 52%,#16501c 80%,#123f17 100%);"></div>
<div style="position:absolute;left:839.1px;top:52px;width:5.7px;height:73px;background:linear-gradient(#7a2622 0%,#7a3d22 8%,#6e5a1e 20%,#3f6a1e 36%,#1c6420 52%,#16501c 80%,#123f17 100%);"></div>
<span style="position:absolute;top:50.476px;font-size:5.9px;line-height:7.08px;color:#b9b9b9;white-space:nowrap;left:850.2px;">0.0</span>
<span style="position:absolute;top:59.476px;font-size:5.9px;line-height:7.08px;color:#b9b9b9;white-space:nowrap;left:849px;">-3.0</span>
<span style="position:absolute;top:68.476px;font-size:5.9px;line-height:7.08px;color:#b9b9b9;white-space:nowrap;left:849px;">-6.0</span>
<span style="position:absolute;top:76.476px;font-size:5.9px;line-height:7.08px;color:#b9b9b9;white-space:nowrap;left:849px;">-9.0</span>
<span style="position:absolute;top:85.476px;font-size:5.9px;line-height:7.08px;color:#b9b9b9;white-space:nowrap;left:849px;">-12.0</span>
<span style="position:absolute;top:93.476px;font-size:5.9px;line-height:7.08px;color:#b9b9b9;white-space:nowrap;left:849px;">-15.0</span>
<span style="position:absolute;top:102.476px;font-size:5.9px;line-height:7.08px;color:#b9b9b9;white-space:nowrap;left:849px;">-18.0</span>
<span style="position:absolute;top:111.476px;font-size:5.9px;line-height:7.08px;color:#b9b9b9;white-space:nowrap;left:849px;">-21.0</span>
<span style="position:absolute;top:119.476px;font-size:5.9px;line-height:7.08px;color:#b9b9b9;white-space:nowrap;left:849px;">-24.0</span>
<div style="position:absolute;left:873.0px;top:54px;width:2.4px;height:61.5px;background:#131313;"></div>
<div style="position:absolute;left:882.9px;top:54px;width:2.4px;height:61.5px;background:#131313;"></div>
<div style="position:absolute;left:892.8px;top:54px;width:2.4px;height:61.5px;background:#131313;"></div>
<svg style="position:absolute;left:869.5px;top:82.3px;" width="30" height="6" viewBox="0 0 30 6"><path d="M0 3l2-2.500h3.500v5H2z" fill="#3c3c3c"/><path d="M30 3l-2-2.500h-3.500v5H28z" fill="#3c3c3c"/><path d="M10.500 3l1.500-3h6l1.500 3-1.500 3h-6z" fill="#3e3e3e"/></svg>
<span style="position:absolute;top:50.665px;font-size:5.7px;line-height:6.84px;color:#b9b9b9;white-space:nowrap;left:903.5px;transform:scaleX(0.9008);transform-origin:0 50%;">12.0 dB</span>
<span style="position:absolute;top:58.665px;font-size:5.7px;line-height:6.84px;color:#b9b9b9;white-space:nowrap;left:903.5px;">9.0</span>
<span style="position:absolute;top:66.665px;font-size:5.7px;line-height:6.84px;color:#b9b9b9;white-space:nowrap;left:903.5px;">6.0</span>
<span style="position:absolute;top:75.665px;font-size:5.7px;line-height:6.84px;color:#b9b9b9;white-space:nowrap;left:903.5px;">3.0</span>
<span style="position:absolute;top:82.665px;font-size:5.7px;line-height:6.84px;color:#b9b9b9;white-space:nowrap;left:903.5px;transform:scaleX(0.9102);transform-origin:0 50%;">0.0 dB</span>
<span style="position:absolute;top:90.665px;font-size:5.7px;line-height:6.84px;color:#b9b9b9;white-space:nowrap;left:901.7px;">-3.0</span>
<span style="position:absolute;top:98.665px;font-size:5.7px;line-height:6.84px;color:#b9b9b9;white-space:nowrap;left:901.7px;">-6.0</span>
<span style="position:absolute;top:105.665px;font-size:5.7px;line-height:6.84px;color:#b9b9b9;white-space:nowrap;left:901.7px;">-9.0</span>
<span style="position:absolute;top:112.665px;font-size:5.7px;line-height:6.84px;color:#b9b9b9;white-space:nowrap;left:901.7px;transform:scaleX(0.9142);transform-origin:0 50%;">-12.0 dB</span>
<span style="position:absolute;top:119.665px;font-size:5.7px;line-height:6.84px;color:#8c8c8c;white-space:nowrap;left:869.8px;width:8px;text-align:center;">0</span>
<span style="position:absolute;top:119.665px;font-size:5.7px;line-height:6.84px;color:#8c8c8c;white-space:nowrap;left:892.0px;width:8px;text-align:center;">0</span>
<div style="position:absolute;left:828.5px;top:128.5px;width:101.5px;height:2.5px;background:#0c0c0c;"></div>
<div style="position:absolute;left:828.5px;top:131px;width:101.5px;height:12.5px;background:#191919;"></div>
<div style="position:absolute;left:829.0px;top:131px;width:38px;height:12.5px;background:#262626;"></div>
<span style="position:absolute;top:133.286px;font-size:6.1px;line-height:7.32px;color:#e4e4e4;white-space:nowrap;font-weight:bold;left:833.7px;transform:scaleX(0.889);transform-origin:0 50%;">Preview</span>
<svg style="position:absolute;left:858.4px;top:135.70000000000002px;" width="3.2" height="4" viewBox="0 0 3.2 4"><path d="M0 .5h3.200M0 2h3.200M0 3.500h3.200" stroke="#777" stroke-width=".75"/></svg>
<svg style="position:absolute;left:832.0px;top:147.9px;" width="7" height="6.2" viewBox="0 0 8 7"><path d="M.8 .8v5.400" stroke="#d2d2d2" stroke-width="1.100"/><path d="M6.800 .8L2 3.500l4.800 2.700z" fill="#d2d2d2"/></svg>
<svg style="position:absolute;left:844.2px;top:147.9px;" width="7" height="6.2" viewBox="0 0 8 7"><path d="M6.500 .8v5.400" stroke="#d2d2d2" stroke-width="1.100"/><path d="M5 .8L.8 3.500 5 6.200z" fill="#d2d2d2"/></svg>
<svg style="position:absolute;left:855.8px;top:147.9px;" width="7" height="6.2" viewBox="0 0 8 7"><path d="M1.500 .3L7 3.500 1.500 6.700z" fill="#d2d2d2"/></svg>
<svg style="position:absolute;left:867.0px;top:147.9px;" width="7" height="6.2" viewBox="0 0 8 7"><path d="M1.500 .8v5.400" stroke="#d2d2d2" stroke-width="1.100"/><path d="M3 .8l4.200 2.700L3 6.200z" fill="#d2d2d2"/></svg>
<svg style="position:absolute;left:879.3px;top:147.9px;" width="7" height="6.2" viewBox="0 0 8 7"><path d="M7.200 .8v5.400" stroke="#d2d2d2" stroke-width="1.100"/><path d="M1.200 .8L6 3.500 1.200 6.200z" fill="#d2d2d2"/></svg>
<svg style="position:absolute;left:892.5px;top:147.9px;" width="7" height="6.2" viewBox="0 0 8 7"><path d="M0 2.300h1.600L4 .3v6.400L1.600 4.700H0z" fill="#d2d2d2"/><path d="M5 2q1 1.500 0 3M6.200 1q1.800 2.500 0 5" fill="none" stroke="#d2d2d2" stroke-width=".8"/></svg>
<svg style="position:absolute;left:906.1px;top:147.9px;" width="7" height="6.2" viewBox="0 0 8 7"><path d="M1 3.200v3h6v-3" fill="none" stroke="#d2d2d2" stroke-width="1"/><path d="M2.500 2.500h3" stroke="#d2d2d2" stroke-width="1"/><path d="M4.800 .6L7 2.500 4.800 4.400z" fill="#d2d2d2"/></svg>
<svg style="position:absolute;left:917.5px;top:147.9px;" width="7" height="6.2" viewBox="0 0 8 7"><path d="M.8 .8v5.400" stroke="#8c8c8c" stroke-width="1.400"/><path d="M2.500 .8l4.500 2.700-4.500 2.700z" fill="#8c8c8c"/></svg>
<div style="position:absolute;left:828.5px;top:157.4px;width:101.5px;height:2.8px;background:#0c0c0c;"></div>
<div style="position:absolute;left:828.5px;top:160.2px;width:101.5px;height:3px;background:#191919;"></div>
<div style="position:absolute;left:828.5px;top:163px;width:101.5px;height:13px;background:#191919;"></div>
<div style="position:absolute;left:829.0px;top:163px;width:59px;height:13px;background:#262626;"></div>
<span style="position:absolute;top:165.286px;font-size:6.1px;line-height:7.32px;color:#e4e4e4;white-space:nowrap;font-weight:bold;left:833.7px;transform:scaleX(0.8469);transform-origin:0 50%;">Effects &amp; Presets</span>
<svg style="position:absolute;left:881.4px;top:167.4px;" width="3.2" height="4" viewBox="0 0 3.2 4"><path d="M0 .5h3.200M0 2h3.200M0 3.500h3.200" stroke="#777" stroke-width=".75"/></svg>
<span style="position:absolute;top:165.286px;font-size:6.1px;line-height:7.32px;color:#8c8c8c;white-space:nowrap;left:895.6px;transform:scaleX(0.8758);transform-origin:0 50%;">Brushes</span>
<div style="position:absolute;left:829px;top:176.2px;width:98px;height:10.6px;background:#1c1c1c;"></div>
<svg style="position:absolute;left:832.5px;top:178px;" width="11" height="8" viewBox="0 0 11 8"><circle cx="5" cy="3" r="2.300" fill="none" stroke="#cfcfcf" stroke-width=".9"/><path d="M3.400 4.600L.9 7.100" stroke="#cfcfcf" stroke-width="1.100"/><path d="M7.600 5.500h2.400L8.800 6.900z" fill="#cfcfcf"/></svg>
<svg style="position:absolute;left:830.5999999999999px;top:189.675px;" width="3.4" height="4.25" viewBox="0 0 4 5"><path d="M0 0L4 2.500 0 5z" fill="#e0e0e0"/></svg>
<span style="position:absolute;top:188.618px;font-size:5.75px;line-height:6.9px;color:#bcbcbc;white-space:nowrap;left:835.5px;">* Animation Presets</span>
<div style="position:absolute;left:828.5px;top:195.8px;width:90px;height:0.6px;background:#1d1d1d;"></div>
<svg style="position:absolute;left:830.5999999999999px;top:197.88000000000002px;" width="3.4" height="4.25" viewBox="0 0 4 5"><path d="M0 0L4 2.500 0 5z" fill="#e0e0e0"/></svg>
<span style="position:absolute;top:196.618px;font-size:5.75px;line-height:6.9px;color:#bcbcbc;white-space:nowrap;left:835.5px;">3D Channel</span>
<div style="position:absolute;left:828.5px;top:204.00500000000002px;width:90px;height:0.6px;background:#1d1d1d;"></div>
<svg style="position:absolute;left:830.5999999999999px;top:206.085px;" width="3.4" height="4.25" viewBox="0 0 4 5"><path d="M0 0L4 2.500 0 5z" fill="#e0e0e0"/></svg>
<span style="position:absolute;top:204.618px;font-size:5.75px;line-height:6.9px;color:#bcbcbc;white-space:nowrap;left:835.5px;">Audio</span>
<div style="position:absolute;left:828.5px;top:212.21px;width:90px;height:0.6px;background:#1d1d1d;"></div>
<svg style="position:absolute;left:830.5999999999999px;top:214.29000000000002px;" width="3.4" height="4.25" viewBox="0 0 4 5"><path d="M0 0L4 2.500 0 5z" fill="#e0e0e0"/></svg>
<span style="position:absolute;top:212.618px;font-size:5.75px;line-height:6.9px;color:#bcbcbc;white-space:nowrap;left:835.5px;">Blur &amp; Sharpen</span>
<div style="position:absolute;left:828.5px;top:220.41500000000002px;width:90px;height:0.6px;background:#1d1d1d;"></div>
<svg style="position:absolute;left:830.5999999999999px;top:222.495px;" width="3.4" height="4.25" viewBox="0 0 4 5"><path d="M0 0L4 2.500 0 5z" fill="#e0e0e0"/></svg>
<span style="position:absolute;top:221.618px;font-size:5.75px;line-height:6.9px;color:#bcbcbc;white-space:nowrap;left:835.5px;">Channel</span>
<div style="position:absolute;left:828.5px;top:228.62px;width:90px;height:0.6px;background:#1d1d1d;"></div>
<svg style="position:absolute;left:830.5999999999999px;top:230.70000000000002px;" width="3.4" height="4.25" viewBox="0 0 4 5"><path d="M0 0L4 2.500 0 5z" fill="#e0e0e0"/></svg>
<span style="position:absolute;top:229.618px;font-size:5.75px;line-height:6.9px;color:#bcbcbc;white-space:nowrap;left:835.5px;">CINEMA 4D</span>
<div style="position:absolute;left:828.5px;top:236.82500000000002px;width:90px;height:0.6px;background:#1d1d1d;"></div>
<svg style="position:absolute;left:830.5999999999999px;top:238.90500000000003px;" width="3.4" height="4.25" viewBox="0 0 4 5"><path d="M0 0L4 2.500 0 5z" fill="#e0e0e0"/></svg>
<span style="position:absolute;top:237.618px;font-size:5.75px;line-height:6.9px;color:#bcbcbc;white-space:nowrap;left:835.5px;">Color Correction</span>
<div style="position:absolute;left:828.5px;top:245.03000000000003px;width:90px;height:0.6px;background:#1d1d1d;"></div>
<svg style="position:absolute;left:830.5999999999999px;top:247.11px;" width="3.4" height="4.25" viewBox="0 0 4 5"><path d="M0 0L4 2.500 0 5z" fill="#e0e0e0"/></svg>
<span style="position:absolute;top:245.618px;font-size:5.75px;line-height:6.9px;color:#bcbcbc;white-space:nowrap;left:835.5px;">Distort</span>
<div style="position:absolute;left:828.5px;top:253.235px;width:90px;height:0.6px;background:#1d1d1d;"></div>
<svg style="position:absolute;left:830.5999999999999px;top:255.315px;" width="3.4" height="4.25" viewBox="0 0 4 5"><path d="M0 0L4 2.500 0 5z" fill="#e0e0e0"/></svg>
<span style="position:absolute;top:253.618px;font-size:5.75px;line-height:6.9px;color:#bcbcbc;white-space:nowrap;left:835.5px;">Expression Controls</span>
<div style="position:absolute;left:828.5px;top:261.44px;width:90px;height:0.6px;background:#1d1d1d;"></div>
<svg style="position:absolute;left:830.5999999999999px;top:263.52px;" width="3.4" height="4.25" viewBox="0 0 4 5"><path d="M0 0L4 2.500 0 5z" fill="#e0e0e0"/></svg>
<span style="position:absolute;top:262.618px;font-size:5.75px;line-height:6.9px;color:#bcbcbc;white-space:nowrap;left:835.5px;">Generate</span>
<div style="position:absolute;left:828.5px;top:269.645px;width:90px;height:0.6px;background:#1d1d1d;"></div>
<svg style="position:absolute;left:830.5999999999999px;top:271.725px;" width="3.4" height="4.25" viewBox="0 0 4 5"><path d="M0 0L4 2.500 0 5z" fill="#e0e0e0"/></svg>
<span style="position:absolute;top:270.618px;font-size:5.75px;line-height:6.9px;color:#bcbcbc;white-space:nowrap;left:835.5px;">Keying</span>
<div style="position:absolute;left:828.5px;top:277.85px;width:90px;height:0.6px;background:#1d1d1d;"></div>
<svg style="position:absolute;left:830.5999999999999px;top:279.93px;" width="3.4" height="4.25" viewBox="0 0 4 5"><path d="M0 0L4 2.500 0 5z" fill="#e0e0e0"/></svg>
<span style="position:absolute;top:278.618px;font-size:5.75px;line-height:6.9px;color:#bcbcbc;white-space:nowrap;left:835.5px;">Matte</span>
<div style="position:absolute;left:828.5px;top:286.055px;width:90px;height:0.6px;background:#1d1d1d;"></div>
<svg style="position:absolute;left:830.5999999999999px;top:288.135px;" width="3.4" height="4.25" viewBox="0 0 4 5"><path d="M0 0L4 2.500 0 5z" fill="#e0e0e0"/></svg>
<span style="position:absolute;top:286.618px;font-size:5.75px;line-height:6.9px;color:#bcbcbc;white-space:nowrap;left:835.5px;">Noise &amp; Grain</span>
<div style="position:absolute;left:828.5px;top:294.26px;width:90px;height:0.6px;background:#1d1d1d;"></div>
<svg style="position:absolute;left:830.5999999999999px;top:296.34000000000003px;" width="3.4" height="4.25" viewBox="0 0 4 5"><path d="M0 0L4 2.500 0 5z" fill="#e0e0e0"/></svg>
<span style="position:absolute;top:294.618px;font-size:5.75px;line-height:6.9px;color:#bcbcbc;white-space:nowrap;left:835.5px;">Obsolete</span>
<div style="position:absolute;left:828.5px;top:302.46500000000003px;width:90px;height:0.6px;background:#1d1d1d;"></div>
<svg style="position:absolute;left:830.5999999999999px;top:304.545px;" width="3.4" height="4.25" viewBox="0 0 4 5"><path d="M0 0L4 2.500 0 5z" fill="#e0e0e0"/></svg>
<span style="position:absolute;top:303.618px;font-size:5.75px;line-height:6.9px;color:#bcbcbc;white-space:nowrap;left:835.5px;">Perspective</span>
<div style="position:absolute;left:828.5px;top:310.67px;width:90px;height:0.6px;background:#1d1d1d;"></div>
<svg style="position:absolute;left:830.5999999999999px;top:312.75px;" width="3.4" height="4.25" viewBox="0 0 4 5"><path d="M0 0L4 2.500 0 5z" fill="#e0e0e0"/></svg>
<span style="position:absolute;top:311.618px;font-size:5.75px;line-height:6.9px;color:#bcbcbc;white-space:nowrap;left:835.5px;">Simulation</span>
<div style="position:absolute;left:828.5px;top:318.875px;width:90px;height:0.6px;background:#1d1d1d;"></div>
<svg style="position:absolute;left:830.5999999999999px;top:320.95500000000004px;" width="3.4" height="4.25" viewBox="0 0 4 5"><path d="M0 0L4 2.500 0 5z" fill="#e0e0e0"/></svg>
<span style="position:absolute;top:319.618px;font-size:5.75px;line-height:6.9px;color:#bcbcbc;white-space:nowrap;left:835.5px;">Stylize</span>
<div style="position:absolute;left:828.5px;top:327.08000000000004px;width:90px;height:0.6px;background:#1d1d1d;"></div>
<svg style="position:absolute;left:830.5999999999999px;top:329.16px;" width="3.4" height="4.25" viewBox="0 0 4 5"><path d="M0 0L4 2.500 0 5z" fill="#e0e0e0"/></svg>
<span style="position:absolute;top:327.618px;font-size:5.75px;line-height:6.9px;color:#bcbcbc;white-space:nowrap;left:835.5px;">Synthetic Aperture</span>
<div style="position:absolute;left:828.5px;top:335.285px;width:90px;height:0.6px;background:#1d1d1d;"></div>
<svg style="position:absolute;left:830.5999999999999px;top:337.365px;" width="3.4" height="4.25" viewBox="0 0 4 5"><path d="M0 0L4 2.500 0 5z" fill="#e0e0e0"/></svg>
<span style="position:absolute;top:335.618px;font-size:5.75px;line-height:6.9px;color:#bcbcbc;white-space:nowrap;left:835.5px;">Text</span>
<div style="position:absolute;left:828.5px;top:343.49px;width:90px;height:0.6px;background:#1d1d1d;"></div>
<svg style="position:absolute;left:830.5999999999999px;top:345.57000000000005px;" width="3.4" height="4.25" viewBox="0 0 4 5"><path d="M0 0L4 2.500 0 5z" fill="#e0e0e0"/></svg>
<span style="position:absolute;top:344.618px;font-size:5.75px;line-height:6.9px;color:#bcbcbc;white-space:nowrap;left:835.5px;">Time</span>
<div style="position:absolute;left:828.5px;top:351.69500000000005px;width:90px;height:0.6px;background:#1d1d1d;"></div>
<div style="position:absolute;left:918.5px;top:187.5px;width:8px;height:166px;background:#1b1b1b;"></div>
<div style="position:absolute;left:918.5px;top:340px;width:8px;height:13.5px;background:#151515;"></div>
<div style="position:absolute;left:828.5px;top:353.5px;width:101.5px;height:9.5px;background:#222;"></div>
<div style="position:absolute;left:828.5px;top:353.2px;width:101.5px;height:0.7px;background:#171717;"></div>
<svg style="position:absolute;left:909.5px;top:355px;" width="6.5" height="6.5" viewBox="0 0 6.5 6.5"><path d="M.3 .3h4.200l1.700 1.700v4.200H.3z" fill="#c4c4c4"/><path d="M4.500 .3v1.700h1.700" fill="none" stroke="#444" stroke-width=".5"/></svg>
<div style="position:absolute;left:828.5px;top:362.8px;width:101.5px;height:2.7px;background:#0c0c0c;"></div>
<div style="position:absolute;left:828.5px;top:365.5px;width:101.5px;height:13px;background:#191919;"></div>
<span style="position:absolute;top:368.286px;font-size:6.1px;line-height:7.32px;color:#8c8c8c;white-space:nowrap;left:833.7px;transform:scaleX(0.9232);transform-origin:0 50%;">Paragraph</span>
<div style="position:absolute;left:873.5px;top:365.5px;width:44px;height:13px;background:#262626;"></div>
<span style="position:absolute;top:368.286px;font-size:6.1px;line-height:7.32px;color:#e4e4e4;white-space:nowrap;font-weight:bold;left:879px;transform:scaleX(0.8953);transform-origin:0 50%;">Character</span>
<svg style="position:absolute;left:909.4px;top:370.2px;" width="3.2" height="4" viewBox="0 0 3.2 4"><path d="M0 .5h3.200M0 2h3.200M0 3.500h3.200" stroke="#777" stroke-width=".75"/></svg>
<div style="position:absolute;left:831.3px;top:382px;width:58px;height:10.2px;background:#171717;"></div>
<span style="position:absolute;top:383.286px;font-size:6.1px;line-height:7.32px;color:#ececec;white-space:nowrap;font-weight:bold;left:833.7px;transform:scaleX(0.8726);transform-origin:0 50%;">Proxima Nova</span>
<svg style="position:absolute;left:882.5px;top:385.1px;" width="5.0" height="4.0" viewBox="0 0 5 4"><path d="M0 0h5L2.500 4z" fill="#e0e0e0"/></svg>
<div style="position:absolute;left:831.3px;top:393.5px;width:58px;height:10.2px;background:#171717;"></div>
<span style="position:absolute;top:395.286px;font-size:6.1px;line-height:7.32px;color:#ececec;white-space:nowrap;font-weight:bold;left:833.7px;transform:scaleX(0.8742);transform-origin:0 50%;">Semibold</span>
<svg style="position:absolute;left:882.5px;top:396.6px;" width="5.0" height="4.0" viewBox="0 0 5 4"><path d="M0 0h5L2.500 4z" fill="#e0e0e0"/></svg>
<svg style="position:absolute;left:892.5px;top:382.5px;" width="9" height="9" viewBox="0 0 9 9"><path d="M6.200 .6c.7-.7 2.900 1.500 2.200 2.200L7.200 4l.5.500-.8.800L3.700 2.100l.8-.8.500.5z" fill="#d4d4d4"/><path d="M4.500 3L1 6.500.500 8.500l2-.5L6 4.500" fill="none" stroke="#d4d4d4" stroke-width=".8"/></svg>
<div style="position:absolute;left:909.5px;top:389px;width:14.5px;height:13.5px;background:#fdfdfd;border:.6px solid #111;"></div>
<svg style="position:absolute;left:909.5px;top:389px;" width="14.5" height="13.5" viewBox="0 0 14.5 13.5"><rect x="3" y="3" width="8.500" height="7.500" fill="#232323"/><path d="M.5 13L14 .5" stroke="#e0282a" stroke-width="1"/></svg>
<div style="position:absolute;left:904px;top:382px;width:14.5px;height:14.3px;background:#ffffff;border:.6px solid #0a0a0a;"></div>
<svg style="position:absolute;left:918.5px;top:382.5px;" width="5" height="5" viewBox="0 0 5 5"><path d="M.5 1.500q3-1.500 4 3" stroke="#ccc" stroke-width=".7" fill="none"/><path d="M3.500 4l1 1 .6-1.400z" fill="#ccc"/></svg>
<div style="position:absolute;left:891.5px;top:394px;width:10.3px;height:8.6px;background:linear-gradient(#050505 0,#050505 48%,#fafafa 52%,#fafafa 100%);border:.6px solid #9a9a9a;border-radius:1px;"></div>
<svg style="position:absolute;left:904.5px;top:397px;" width="5.5" height="5.5" viewBox="0 0 5.5 5.5"><rect x=".4" y=".4" width="4.700" height="4.700" fill="#fff" stroke="#666" stroke-width=".5"/><path d="M.5 5L5 .5" stroke="#e0282a" stroke-width=".9"/></svg>
<svg style="position:absolute;left:831.5px;top:407.5px;" width="9" height="9" viewBox="0 0 9 9"><text x="0" y="7.500" font-family="Liberation Serif" font-size="6" fill="#ddd">T</text><text x="3.200" y="7.800" font-family="Liberation Serif" font-size="9" fill="#ddd">T</text></svg>
<span style="position:absolute;top:408.286px;font-size:6.1px;line-height:7.32px;color:#2ba0ea;white-space:nowrap;left:843px;">120</span>
<span style="position:absolute;top:408.286px;font-size:6.1px;line-height:7.32px;color:#b4b4b4;white-space:nowrap;left:854.0779453125px;">px</span>
<svg style="position:absolute;left:863.7px;top:410.46px;" width="3.5999999999999996" height="2.88" viewBox="0 0 5 4"><path d="M0 0h5L2.500 4z" fill="#b8b8b8"/></svg>
<svg style="position:absolute;left:881px;top:407px;" width="9" height="10" viewBox="0 0 9 10"><path d="M4.500 .3L6 2H3zM4.500 4.800L3 3.200h3z" fill="#ddd"/><text x="0" y="9.700" font-family="Liberation Serif" font-size="5.500" fill="#ddd">A</text><text x="4.300" y="9.700" font-family="Liberation Serif" font-size="5.500" fill="#ddd">A</text></svg>
<span style="position:absolute;top:408.286px;font-size:6.1px;line-height:7.32px;color:#2ba0ea;white-space:nowrap;left:897px;">120</span>
<span style="position:absolute;top:408.286px;font-size:6.1px;line-height:7.32px;color:#b4b4b4;white-space:nowrap;left:908.0779453125px;">px</span>
<svg style="position:absolute;left:918.7px;top:410.46px;" width="3.5999999999999996" height="2.88" viewBox="0 0 5 4"><path d="M0 0h5L2.500 4z" fill="#b8b8b8"/></svg>
<svg style="position:absolute;left:831.5px;top:417.5px;" width="9" height="9" viewBox="0 0 9 9"><text x="0" y="6" font-family="Liberation Serif" font-size="6.500" fill="#ddd">V</text><text x="3.600" y="7.500" font-family="Liberation Serif" font-size="6.500" fill="#ddd">A</text><path d="M1 8.400h7" stroke="#ddd" stroke-width=".6"/></svg>
<span style="position:absolute;top:418.286px;font-size:6.1px;line-height:7.32px;color:#9a9a9a;white-space:nowrap;left:843px;">Metrics</span>
<svg style="position:absolute;left:863.5px;top:420.2px;" width="4.0" height="3.2" viewBox="0 0 5 4"><path d="M0 0h5L2.500 4z" fill="#b8b8b8"/></svg>
<svg style="position:absolute;left:881.5px;top:417.5px;" width="9" height="9" viewBox="0 0 9 9"><text x="0" y="5.500" font-family="Liberation Serif" font-size="5.500" fill="#ddd">V</text><text x="4.300" y="5.500" font-family="Liberation Serif" font-size="5.500" fill="#ddd">A</text><rect x=".3" y=".3" width="8.400" height="6" fill="none" stroke="#ddd" stroke-width=".5"/><path d="M1 8.400h7" stroke="#ddd" stroke-width=".6"/></svg>
<span style="position:absolute;top:418.286px;font-size:6.1px;line-height:7.32px;color:#2ba0ea;white-space:nowrap;left:897px;">0</span>
<svg style="position:absolute;left:918.5px;top:420.2px;" width="4.0" height="3.2" viewBox="0 0 5 4"><path d="M0 0h5L2.500 4z" fill="#b8b8b8"/></svg>
<div style="position:absolute;left:831px;top:429.8px;width:92px;height:0.6px;background:#2f2f2f;"></div>
<svg style="position:absolute;left:831.5px;top:433.5px;" width="8" height="7.5" viewBox="0 0 8 7.5"><path d="M0 1h8M0 3.700h8M0 6.400h8" stroke="#ddd" stroke-width="1.100"/></svg>
<span style="position:absolute;top:433.286px;font-size:6.1px;line-height:7.32px;color:#2ba0ea;white-space:nowrap;left:843px;">-</span>
<span style="position:absolute;top:433.286px;font-size:6.1px;line-height:7.32px;color:#b4b4b4;white-space:nowrap;left:846.3px;">px</span>
<svg style="position:absolute;left:863.5px;top:435.4px;" width="4.0" height="3.2" viewBox="0 0 5 4"><path d="M0 0h5L2.500 4z" fill="#b8b8b8"/></svg>
<div style="position:absolute;left:870px;top:432.5px;width:54px;height:9.5px;background:#1a1a1a;"></div>
<svg style="position:absolute;left:918.25px;top:435.2px;" width="4.5" height="3.6" viewBox="0 0 5 4"><path d="M0 0h5L2.500 4z" fill="#e0e0e0"/></svg>
<svg style="position:absolute;left:831.5px;top:447.5px;" width="9" height="9" viewBox="0 0 9 9"><text x="0" y="7" font-family="Liberation Serif" font-size="5" fill="#ddd">I</text><text x="2" y="7.500" font-family="Liberation Serif" font-size="9" fill="#ddd">T</text></svg>
<span style="position:absolute;top:448.286px;font-size:6.1px;line-height:7.32px;color:#2ba0ea;white-space:nowrap;left:843px;">100</span>
<span style="position:absolute;top:448.286px;font-size:6.1px;line-height:7.32px;color:#b4b4b4;white-space:nowrap;left:854.0779453125px;">%</span>
<svg style="position:absolute;left:863.7px;top:450.06px;" width="3.5999999999999996" height="2.88" viewBox="0 0 5 4"><path d="M0 0h5L2.500 4z" fill="#b8b8b8"/></svg>
<svg style="position:absolute;left:882px;top:447.5px;" width="9" height="9" viewBox="0 0 9 9"><text x=".5" y="6.500" font-family="Liberation Serif" font-size="8.500" font-weight="bold" fill="#ddd">T</text><path d="M.5 8.400h7.500" stroke="#ddd" stroke-width=".7"/></svg>
<span style="position:absolute;top:448.286px;font-size:6.1px;line-height:7.32px;color:#2ba0ea;white-space:nowrap;left:897px;">100</span>
<span style="position:absolute;top:448.286px;font-size:6.1px;line-height:7.32px;color:#b4b4b4;white-space:nowrap;left:908.0779453125px;">%</span>
<svg style="position:absolute;left:918.7px;top:450.06px;" width="3.5999999999999996" height="2.88" viewBox="0 0 5 4"><path d="M0 0h5L2.500 4z" fill="#b8b8b8"/></svg>
<svg style="position:absolute;left:831.5px;top:458px;" width="9" height="9" viewBox="0 0 9 9"><text x="0" y="7" font-family="Liberation Serif" font-size="7" fill="#ddd">A</text><text x="4.500" y="5" font-family="Liberation Serif" font-size="5" fill="#ddd">a</text><path d="M5 6h3.500v2H5z" fill="none" stroke="#ddd" stroke-width=".5"/></svg>
<span style="position:absolute;top:458.286px;font-size:6.1px;line-height:7.32px;color:#2ba0ea;white-space:nowrap;left:843px;">0</span>
<span style="position:absolute;top:458.286px;font-size:6.1px;line-height:7.32px;color:#b4b4b4;white-space:nowrap;left:847.2926484375px;">px</span>
<svg style="position:absolute;left:863.7px;top:460.56px;" width="3.5999999999999996" height="2.88" viewBox="0 0 5 4"><path d="M0 0h5L2.500 4z" fill="#b8b8b8"/></svg>
<svg style="position:absolute;left:882px;top:458px;" width="9" height="9" viewBox="0 0 9 9"><text x="1.500" y="5.500" font-family="Liberation Serif" font-size="6" fill="#ddd">あ</text><path d="M.5 6.500h7.500M2 8.200h4.500" stroke="#ddd" stroke-width=".7"/></svg>
<span style="position:absolute;top:458.286px;font-size:6.1px;line-height:7.32px;color:#2ba0ea;white-space:nowrap;left:897px;">0</span>
<span style="position:absolute;top:458.286px;font-size:6.1px;line-height:7.32px;color:#b4b4b4;white-space:nowrap;left:901.2926484375px;">%</span>
<svg style="position:absolute;left:918.7px;top:460.56px;" width="3.5999999999999996" height="2.88" viewBox="0 0 5 4"><path d="M0 0h5L2.500 4z" fill="#b8b8b8"/></svg>
<span style="position:absolute;top:473.591px;font-size:6.9px;line-height:8.28px;color:#e4e4e4;white-space:nowrap;font-family:'Liberation Serif',serif;font-weight:bold;left:840.5px;width:10px;text-align:center;">T</span>
<span style="position:absolute;top:473.591px;font-size:6.9px;line-height:8.28px;color:#e4e4e4;white-space:nowrap;font-family:'Liberation Serif',serif;font-weight:bold;font-style:italic;left:852.9px;width:10px;text-align:center;">T</span>
<span style="position:absolute;top:473.591px;font-size:6.9px;line-height:8.28px;color:#e4e4e4;white-space:nowrap;font-family:'Liberation Serif',serif;font-weight:bold;left:865.2px;width:14px;text-align:center;">TT</span>
<span style="position:absolute;top:473.591px;font-size:6.9px;line-height:8.28px;color:#e4e4e4;white-space:nowrap;font-family:'Liberation Serif',serif;font-weight:bold;left:877.0px;width:14px;text-align:center;">T<span style="font-size:5px">T</span></span>
<span style="position:absolute;top:473.591px;font-size:6.9px;line-height:8.28px;color:#e4e4e4;white-space:nowrap;font-family:'Liberation Serif',serif;font-weight:bold;left:894.0px;width:10px;text-align:center;">T</span>
<span style="position:absolute;top:473.498px;font-size:3.8px;line-height:4.56px;color:#e4e4e4;white-space:nowrap;font-family:'Liberation Serif',serif;font-weight:bold;left:902.3px;">1</span>
<span style="position:absolute;top:473.591px;font-size:6.9px;line-height:8.28px;color:#e4e4e4;white-space:nowrap;font-family:'Liberation Serif',serif;font-weight:bold;left:905.8px;width:10px;text-align:center;">T</span>
<span style="position:absolute;top:477.498px;font-size:3.8px;line-height:4.56px;color:#e4e4e4;white-space:nowrap;font-family:'Liberation Serif',serif;font-weight:bold;left:914px;">1</span>
<!-- timeline panel -->
<div style="position:absolute;left:0px;top:365.5px;width:826px;height:157.5px;background:#232323;"></div>
<div style="position:absolute;left:0px;top:365.5px;width:826px;height:13px;background:#191919;"></div>
<div style="position:absolute;left:1.5px;top:365.5px;width:64px;height:13px;background:#262626;"></div>
<span style="position:absolute;top:367.908px;font-size:6.5px;line-height:7.8px;color:#9a9a9a;white-space:nowrap;left:3.0px;width:8px;text-align:center;">×</span>
<div style="position:absolute;left:13px;top:369px;width:5px;height:5px;background:#d23b3b;"></div>
<span style="position:absolute;top:368.286px;font-size:6.1px;line-height:7.32px;color:#e4e4e4;white-space:nowrap;font-weight:bold;left:23px;transform:scaleX(0.8883);transform-origin:0 50%;">Final Comp</span>
<svg style="position:absolute;left:57.9px;top:370.2px;" width="3.2" height="4" viewBox="0 0 3.2 4"><path d="M0 .5h3.200M0 2h3.200M0 3.500h3.200" stroke="#777" stroke-width=".75"/></svg>
<span style="position:absolute;top:368.286px;font-size:6.1px;line-height:7.32px;color:#8c8c8c;white-space:nowrap;left:79.5px;transform:scaleX(0.9121);transform-origin:0 50%;">Render Queue</span>
<div style="position:absolute;left:0px;top:378.5px;width:826px;height:17.5px;background:#212121;"></div>
<span style="position:absolute;top:378.352px;font-size:9.2px;line-height:11.04px;color:#2ba0ea;white-space:nowrap;left:7px;transform:scaleX(0.8969);transform-origin:0 50%;-webkit-text-stroke:.25px #2ba0ea;">0:00:08:13</span>
<span style="position:absolute;top:388.044px;font-size:5.3px;line-height:6.36px;color:#2ba0ea;white-space:nowrap;left:5.8px;transform:scaleX(1.0229);transform-origin:0 50%;">00213 (25.00 fps)</span>
<svg style="position:absolute;left:55.5px;top:382.5px;" width="11" height="8" viewBox="0 0 11 8"><circle cx="5" cy="3" r="2.300" fill="none" stroke="#cfcfcf" stroke-width=".9"/><path d="M3.400 4.600L.9 7.100" stroke="#cfcfcf" stroke-width="1.100"/><path d="M7.600 5.500h2.400L8.800 6.900z" fill="#cfcfcf"/></svg>
<div style="position:absolute;left:0px;top:396px;width:362px;height:8.6px;background:#2e2e2e;"></div>
<div style="position:absolute;left:0px;top:404.5px;width:362px;height:0.8px;background:#161616;"></div>
<svg style="position:absolute;left:2.5px;top:397.9px;" width="7" height="5" viewBox="0 0 7 5"><path d="M.3 2.500Q3.500 -1 6.700 2.500 3.500 6 .3 2.500z" fill="none" stroke="#cfcfcf" stroke-width=".8"/><circle cx="3.500" cy="2.500" r="1.200" fill="#cfcfcf"/></svg>
<svg style="position:absolute;left:10.5px;top:397.8px;" width="6" height="5.5" viewBox="0 0 6 5.5"><path d="M0 1.700h1.300L3.200 .2v5L1.300 3.700H0z" fill="#cfcfcf"/><path d="M4 1.500q1 1.200 0 2.400M5 .8q1.600 1.900 0 3.800" fill="none" stroke="#cfcfcf" stroke-width=".6"/></svg>
<svg style="position:absolute;left:18.3px;top:398.5px;" width="4" height="4" viewBox="0 0 4 4"><circle cx="2" cy="2" r="1.700" fill="#cfcfcf"/></svg>
<svg style="position:absolute;left:24.8px;top:397.5px;" width="5" height="6" viewBox="0 0 5 6"><rect x=".3" y="2.600" width="4.400" height="3.200" fill="#cfcfcf"/><path d="M1.200 2.600V1.700a1.300 1.300 0 0 1 2.600 0v.9" fill="none" stroke="#cfcfcf" stroke-width=".8"/></svg>
<svg style="position:absolute;left:41px;top:397.2px;" width="7" height="7" viewBox="0 0 7 7"><path d="M3.600.5h3v3L3 7 .2 4.200z" fill="#cfcfcf"/><circle cx="5.300" cy="1.900" r=".7" fill="#2e2e2e"/></svg>
<span style="position:absolute;top:396.76px;font-size:5.6px;line-height:6.72px;color:#9a9a9a;white-space:nowrap;left:52.5px;">#</span>
<span style="position:absolute;top:396.76px;font-size:5.6px;line-height:6.72px;color:#9a9a9a;white-space:nowrap;left:68px;transform:scaleX(0.8032);transform-origin:0 50%;">Source Name</span>
<div style="position:absolute;left:150px;top:396.5px;width:0.6px;height:7.5px;background:#222;"></div>
<div style="position:absolute;left:214.5px;top:396.5px;width:0.6px;height:7.5px;background:#222;"></div>
<svg style="position:absolute;left:151.8px;top:397.59999999999997px;" width="6.4" height="5.6" viewBox="0 0 6.4 5.6"><path d="M.2 4.300C.2 1.800 1.600 .3 3.200 .3s3 1.500 3 4c-.9-.3-1.500.2-1.500.9-.5-.4-1-.4-1.500 0-.5-.4-1-.4-1.500 0 0-.7-.6-1.200-1.500-.9z" fill="#cfcfcf"/><circle cx="2.100" cy="2.700" r=".65" fill="#222"/><circle cx="4.300" cy="2.700" r=".65" fill="#222"/></svg>
<svg style="position:absolute;left:159.7px;top:398.4px;" width="4" height="4" viewBox="0 0 4 4"><circle cx="2" cy="2" r="1.500" fill="none" stroke="#888" stroke-width=".7"/><path d="M2 0v4M0 2h4" stroke="#888" stroke-width=".4"/></svg>
<svg style="position:absolute;left:166.3px;top:397.4px;" width="6" height="6" viewBox="0 0 6 6"><path d="M.4 .4L5.600 5.600" stroke="#cfcfcf" stroke-width=".8"/></svg>
<span style="position:absolute;top:396.779px;font-size:6.7px;line-height:8.04px;color:#cfcfcf;white-space:nowrap;font-family:'Liberation Serif',serif;font-weight:bold;font-style:italic;left:171.5px;width:10px;text-align:center;">fx</span>
<svg style="position:absolute;left:181px;top:397.5px;" width="5" height="6" viewBox="0 0 5 6"><rect x=".3" y=".3" width="4.400" height="5.400" fill="#cfcfcf"/><path d="M1.200 0v6M3.800 0v6M1.200 3h2.600" stroke="#2e2e2e" stroke-width=".5"/></svg>
<svg style="position:absolute;left:188.5px;top:397.5px;" width="6" height="6" viewBox="0 0 6 6"><path d="M.8 5.200L3 1.500c.7-1.200 2.700 0 2 1.200L3.200 5.500C2.500 6.500.2 6.200.8 5.200z" fill="none" stroke="#cfcfcf" stroke-width=".8"/></svg>
<svg style="position:absolute;left:195.5px;top:397.5px;" width="6" height="6" viewBox="0 0 6 6"><circle cx="3" cy="3" r="2.600" fill="none" stroke="#cfcfcf" stroke-width=".7"/><path d="M3 .4A2.600 2.600 0 0 1 3 5.600z" fill="#cfcfcf"/><path d="M1.200 1.200L4.800 4.800" stroke="#2e2e2e" stroke-width=".4"/></svg>
<svg style="position:absolute;left:203px;top:397.5px;" width="6" height="6" viewBox="0 0 6 6"><path d="M3 .4l2.400 1.300v2.600L3 5.600.6 4.300V1.700z" fill="none" stroke="#cfcfcf" stroke-width=".7"/><path d="M.6 1.700L3 3l2.400-1.300M3 3v2.600" fill="none" stroke="#cfcfcf" stroke-width=".5"/></svg>
<span style="position:absolute;top:396.76px;font-size:5.6px;line-height:6.72px;color:#9a9a9a;white-space:nowrap;left:218.6px;transform:scaleX(0.8138);transform-origin:0 50%;">Mode</span>
<div style="position:absolute;left:0px;top:404.675px;width:362px;height:8.25px;background:#262626;"></div>
<div style="position:absolute;left:0px;top:412.6px;width:362px;height:0.5px;background:#1e1e1e;"></div>
<div style="position:absolute;left:2.3px;top:405.7px;width:7.4px;height:6.2px;background:#121212;border-radius:50%;"></div>
<svg style="position:absolute;left:2.5px;top:406.3px;" width="7" height="5" viewBox="0 0 7 5"><path d="M.3 2.500Q3.500 -1 6.700 2.500 3.500 6 .3 2.500z" fill="none" stroke="#d8d8d8" stroke-width=".8"/><circle cx="3.500" cy="2.500" r="1.200" fill="#d8d8d8"/></svg>
<div style="position:absolute;left:17.2px;top:405.6px;width:6.8px;height:6.4px;background:#161616;"></div>
<div style="position:absolute;left:25px;top:405.6px;width:6.5px;height:6.4px;background:#161616;"></div>
<svg style="position:absolute;left:35.7px;top:406.55px;" width="3.6" height="4.5" viewBox="0 0 4 5"><path d="M0 0L4 2.500 0 5z" fill="#e4e4e4"/></svg>
<div style="position:absolute;left:41.7px;top:404.675px;width:6.6px;height:8.25px;background:#0d0d16;"></div>
<div style="position:absolute;left:42px;top:405.8px;width:6.1px;height:5.9px;background:#f39a1e;"></div>
<span style="position:absolute;top:405.002px;font-size:6.4px;line-height:7.68px;color:#bcbcbc;white-space:nowrap;left:52.3px;">3</span>
<svg style="position:absolute;left:66px;top:405.6px;" width="8.2" height="6.4" viewBox="0 0 8.2 6.4"><rect x=".3" y=".3" width="7.600" height="5.800" fill="#c6c6c6"/><rect x="1.400" y="1.300" width="2.800" height="2.400" fill="#333"/><path d="M4.800 4.700h2.200M5.200 2h1.800M1.500 4.800h2" stroke="#333" stroke-width=".7"/></svg>
<span style="position:absolute;top:405.002px;font-size:6.4px;line-height:7.68px;color:#c2c2c2;white-space:nowrap;left:75.5px;transform:scaleX(0.9059);transform-origin:0 50%;">Scene 10</span>
<svg style="position:absolute;left:151.8px;top:406.0px;" width="6.4" height="5.6" viewBox="0 0 6.4 5.6"><path d="M.2 4.300C.2 1.800 1.600 .3 3.200 .3s3 1.500 3 4c-.9-.3-1.500.2-1.500.9-.5-.4-1-.4-1.500 0-.5-.4-1-.4-1.500 0 0-.7-.6-1.200-1.500-.9z" fill="#b0b0b0"/><circle cx="2.100" cy="2.700" r=".65" fill="#222"/><circle cx="4.300" cy="2.700" r=".65" fill="#222"/></svg>
<div style="position:absolute;left:159.4px;top:405.6px;width:5.8px;height:6.4px;background:#161616;"></div>
<svg style="position:absolute;left:166.3px;top:405.8px;" width="6" height="6" viewBox="0 0 6 6"><path d="M.4 5.600L5.600 .4" stroke="#e4e4e4" stroke-width=".8"/></svg>
<span style="position:absolute;top:404.779px;font-size:6.7px;line-height:8.04px;color:#e4e4e4;white-space:nowrap;font-family:'Liberation Serif',serif;font-weight:bold;font-style:italic;left:171.5px;width:10px;text-align:center;">fx</span>
<div style="position:absolute;left:188px;top:405.6px;width:6.3px;height:6.4px;background:#161616;"></div>
<div style="position:absolute;left:195.6px;top:405.6px;width:5.8px;height:6.4px;background:#161616;"></div>
<div style="position:absolute;left:202.7px;top:405.6px;width:6px;height:6.4px;background:#161616;"></div>
<div style="position:absolute;left:210px;top:404.675px;width:8px;height:8.25px;background:#2c2c2c;"></div>
<div style="position:absolute;left:218px;top:405.20000000000005px;width:33.2px;height:7.2px;background:#0e0e0e;"></div>
<span style="position:absolute;top:405.286px;font-size:6.1px;line-height:7.32px;color:#e8e8e8;white-space:nowrap;font-weight:bold;left:220.3px;transform:scaleX(0.8945);transform-origin:0 50%;">Normal</span>
<svg style="position:absolute;left:244.8px;top:407.2px;" width="4.0" height="3.2" viewBox="0 0 5 4"><path d="M0 0h5L2.500 4z" fill="#e4e4e4"/></svg>
<div style="position:absolute;left:253.6px;top:405.6px;width:6.3px;height:6.4px;background:#161616;"></div>
<div style="position:absolute;left:262.7px;top:405.20000000000005px;width:31.3px;height:7.2px;background:#0e0e0e;"></div>
<span style="position:absolute;top:405.286px;font-size:6.1px;line-height:7.32px;color:#e0e0e0;white-space:nowrap;font-weight:bold;left:265.3px;transform:scaleX(0.8655);transform-origin:0 50%;">None</span>
<svg style="position:absolute;left:288.0px;top:407.2px;" width="4.0" height="3.2" viewBox="0 0 5 4"><path d="M0 0h5L2.500 4z" fill="#e4e4e4"/></svg>
<div style="position:absolute;left:294px;top:404.675px;width:14px;height:8.25px;background:#2c2c2c;"></div>
<svg style="position:absolute;left:298.5px;top:406.1px;" width="5.4" height="5.4" viewBox="0 0 5.4 5.4"><circle cx="2.700" cy="2.700" r="2.300" fill="none" stroke="#7c7c7c" stroke-width=".7"/><path d="M2.700 2.700A1 1 0 1 1 1.700 1.800" fill="none" stroke="#7c7c7c" stroke-width=".6"/></svg>
<div style="position:absolute;left:308px;top:405.20000000000005px;width:42.5px;height:7.2px;background:#0e0e0e;"></div>
<span style="position:absolute;top:405.286px;font-size:6.1px;line-height:7.32px;color:#e0e0e0;white-space:nowrap;font-weight:bold;left:310.5px;transform:scaleX(0.8655);transform-origin:0 50%;">None</span>
<svg style="position:absolute;left:344.8px;top:407.2px;" width="4.0" height="3.2" viewBox="0 0 5 4"><path d="M0 0h5L2.500 4z" fill="#e4e4e4"/></svg>
<div style="position:absolute;left:0px;top:412.925px;width:362px;height:8.25px;background:#262626;"></div>
<div style="position:absolute;left:0px;top:420.85px;width:362px;height:0.5px;background:#1e1e1e;"></div>
<div style="position:absolute;left:2.3px;top:413.95px;width:7.4px;height:6.2px;background:#121212;border-radius:50%;"></div>
<svg style="position:absolute;left:2.5px;top:414.55px;" width="7" height="5" viewBox="0 0 7 5"><path d="M.3 2.500Q3.500 -1 6.700 2.500 3.500 6 .3 2.500z" fill="none" stroke="#d8d8d8" stroke-width=".8"/><circle cx="3.500" cy="2.500" r="1.200" fill="#d8d8d8"/></svg>
<div style="position:absolute;left:17.2px;top:413.85px;width:6.8px;height:6.4px;background:#161616;"></div>
<div style="position:absolute;left:25px;top:413.85px;width:6.5px;height:6.4px;background:#161616;"></div>
<svg style="position:absolute;left:35.7px;top:414.8px;" width="3.6" height="4.5" viewBox="0 0 4 5"><path d="M0 0L4 2.500 0 5z" fill="#e4e4e4"/></svg>
<div style="position:absolute;left:41.7px;top:412.925px;width:6.6px;height:8.25px;background:#0d0d16;"></div>
<div style="position:absolute;left:42px;top:414.05px;width:6.1px;height:5.9px;background:#f39a1e;"></div>
<span style="position:absolute;top:413.002px;font-size:6.4px;line-height:7.68px;color:#bcbcbc;white-space:nowrap;left:52.3px;">4</span>
<svg style="position:absolute;left:66px;top:413.85px;" width="8.2" height="6.4" viewBox="0 0 8.2 6.4"><rect x=".3" y=".3" width="7.600" height="5.800" fill="#c6c6c6"/><rect x="1.400" y="1.300" width="2.800" height="2.400" fill="#333"/><path d="M4.800 4.700h2.200M5.200 2h1.800M1.500 4.800h2" stroke="#333" stroke-width=".7"/></svg>
<span style="position:absolute;top:413.002px;font-size:6.4px;line-height:7.68px;color:#c2c2c2;white-space:nowrap;left:75.5px;transform:scaleX(0.9059);transform-origin:0 50%;">Scene 12</span>
<svg style="position:absolute;left:151.8px;top:414.25px;" width="6.4" height="5.6" viewBox="0 0 6.4 5.6"><path d="M.2 4.300C.2 1.800 1.600 .3 3.200 .3s3 1.500 3 4c-.9-.3-1.500.2-1.500.9-.5-.4-1-.4-1.500 0-.5-.4-1-.4-1.500 0 0-.7-.6-1.200-1.500-.9z" fill="#b0b0b0"/><circle cx="2.100" cy="2.700" r=".65" fill="#222"/><circle cx="4.300" cy="2.700" r=".65" fill="#222"/></svg>
<div style="position:absolute;left:159.4px;top:413.85px;width:5.8px;height:6.4px;background:#161616;"></div>
<svg style="position:absolute;left:166.3px;top:414.05px;" width="6" height="6" viewBox="0 0 6 6"><path d="M.4 5.600L5.600 .4" stroke="#e4e4e4" stroke-width=".8"/></svg>
<span style="position:absolute;top:413.779px;font-size:6.7px;line-height:8.04px;color:#e4e4e4;white-space:nowrap;font-family:'Liberation Serif',serif;font-weight:bold;font-style:italic;left:171.5px;width:10px;text-align:center;">fx</span>
<div style="position:absolute;left:188px;top:413.85px;width:6.3px;height:6.4px;background:#161616;"></div>
<div style="position:absolute;left:195.6px;top:413.85px;width:5.8px;height:6.4px;background:#161616;"></div>
<div style="position:absolute;left:202.7px;top:413.85px;width:6px;height:6.4px;background:#161616;"></div>
<div style="position:absolute;left:210px;top:412.925px;width:8px;height:8.25px;background:#2c2c2c;"></div>
<div style="position:absolute;left:218px;top:413.45000000000005px;width:33.2px;height:7.2px;background:#0e0e0e;"></div>
<span style="position:absolute;top:413.286px;font-size:6.1px;line-height:7.32px;color:#e8e8e8;white-space:nowrap;font-weight:bold;left:220.3px;transform:scaleX(0.8945);transform-origin:0 50%;">Normal</span>
<svg style="position:absolute;left:244.8px;top:415.45px;" width="4.0" height="3.2" viewBox="0 0 5 4"><path d="M0 0h5L2.500 4z" fill="#e4e4e4"/></svg>
<div style="position:absolute;left:253.6px;top:413.85px;width:6.3px;height:6.4px;background:#161616;"></div>
<div style="position:absolute;left:262.7px;top:413.45000000000005px;width:31.3px;height:7.2px;background:#0e0e0e;"></div>
<span style="position:absolute;top:413.286px;font-size:6.1px;line-height:7.32px;color:#e0e0e0;white-space:nowrap;font-weight:bold;left:265.3px;transform:scaleX(0.8655);transform-origin:0 50%;">None</span>
<svg style="position:absolute;left:288.0px;top:415.45px;" width="4.0" height="3.2" viewBox="0 0 5 4"><path d="M0 0h5L2.500 4z" fill="#e4e4e4"/></svg>
<div style="position:absolute;left:294px;top:412.925px;width:14px;height:8.25px;background:#2c2c2c;"></div>
<svg style="position:absolute;left:298.5px;top:414.35px;" width="5.4" height="5.4" viewBox="0 0 5.4 5.4"><circle cx="2.700" cy="2.700" r="2.300" fill="none" stroke="#7c7c7c" stroke-width=".7"/><path d="M2.700 2.700A1 1 0 1 1 1.700 1.800" fill="none" stroke="#7c7c7c" stroke-width=".6"/></svg>
<div style="position:absolute;left:308px;top:413.45000000000005px;width:42.5px;height:7.2px;background:#0e0e0e;"></div>
<span style="position:absolute;top:413.286px;font-size:6.1px;line-height:7.32px;color:#e0e0e0;white-space:nowrap;font-weight:bold;left:310.5px;transform:scaleX(0.8655);transform-origin:0 50%;">None</span>
<svg style="position:absolute;left:344.8px;top:415.45px;" width="4.0" height="3.2" viewBox="0 0 5 4"><path d="M0 0h5L2.500 4z" fill="#e4e4e4"/></svg>
<div style="position:absolute;left:0px;top:421.175px;width:362px;height:8.25px;background:#262626;"></div>
<div style="position:absolute;left:0px;top:429.1px;width:362px;height:0.5px;background:#1e1e1e;"></div>
<div style="position:absolute;left:2.3px;top:422.2px;width:7.4px;height:6.2px;background:#121212;border-radius:50%;"></div>
<svg style="position:absolute;left:2.5px;top:422.8px;" width="7" height="5" viewBox="0 0 7 5"><path d="M.3 2.500Q3.500 -1 6.700 2.500 3.500 6 .3 2.500z" fill="none" stroke="#d8d8d8" stroke-width=".8"/><circle cx="3.500" cy="2.500" r="1.200" fill="#d8d8d8"/></svg>
<div style="position:absolute;left:17.2px;top:422.1px;width:6.8px;height:6.4px;background:#161616;"></div>
<div style="position:absolute;left:25px;top:422.1px;width:6.5px;height:6.4px;background:#161616;"></div>
<svg style="position:absolute;left:35.7px;top:423.05px;" width="3.6" height="4.5" viewBox="0 0 4 5"><path d="M0 0L4 2.500 0 5z" fill="#e4e4e4"/></svg>
<div style="position:absolute;left:41.7px;top:421.175px;width:6.6px;height:8.25px;background:#0d0d16;"></div>
<div style="position:absolute;left:42px;top:422.3px;width:6.1px;height:5.9px;background:#f39a1e;"></div>
<span style="position:absolute;top:422.002px;font-size:6.4px;line-height:7.68px;color:#bcbcbc;white-space:nowrap;left:52.3px;">5</span>
<svg style="position:absolute;left:66px;top:422.1px;" width="8.2" height="6.4" viewBox="0 0 8.2 6.4"><rect x=".3" y=".3" width="7.600" height="5.800" fill="#c6c6c6"/><rect x="1.400" y="1.300" width="2.800" height="2.400" fill="#333"/><path d="M4.800 4.700h2.200M5.200 2h1.800M1.500 4.800h2" stroke="#333" stroke-width=".7"/></svg>
<span style="position:absolute;top:422.002px;font-size:6.4px;line-height:7.68px;color:#c2c2c2;white-space:nowrap;left:75.5px;transform:scaleX(0.9059);transform-origin:0 50%;">Scene 09</span>
<svg style="position:absolute;left:151.8px;top:422.5px;" width="6.4" height="5.6" viewBox="0 0 6.4 5.6"><path d="M.2 4.300C.2 1.800 1.600 .3 3.200 .3s3 1.500 3 4c-.9-.3-1.500.2-1.500.9-.5-.4-1-.4-1.500 0-.5-.4-1-.4-1.500 0 0-.7-.6-1.200-1.500-.9z" fill="#b0b0b0"/><circle cx="2.100" cy="2.700" r=".65" fill="#222"/><circle cx="4.300" cy="2.700" r=".65" fill="#222"/></svg>
<div style="position:absolute;left:159.4px;top:422.1px;width:5.8px;height:6.4px;background:#161616;"></div>
<svg style="position:absolute;left:166.3px;top:422.3px;" width="6" height="6" viewBox="0 0 6 6"><path d="M.4 5.600L5.600 .4" stroke="#e4e4e4" stroke-width=".8"/></svg>
<span style="position:absolute;top:421.779px;font-size:6.7px;line-height:8.04px;color:#e4e4e4;white-space:nowrap;font-family:'Liberation Serif',serif;font-weight:bold;font-style:italic;left:171.5px;width:10px;text-align:center;">fx</span>
<div style="position:absolute;left:188px;top:422.1px;width:6.3px;height:6.4px;background:#161616;"></div>
<div style="position:absolute;left:195.6px;top:422.1px;width:5.8px;height:6.4px;background:#161616;"></div>
<div style="position:absolute;left:202.7px;top:422.1px;width:6px;height:6.4px;background:#161616;"></div>
<div style="position:absolute;left:210px;top:421.175px;width:8px;height:8.25px;background:#2c2c2c;"></div>
<div style="position:absolute;left:218px;top:421.70000000000005px;width:33.2px;height:7.2px;background:#0e0e0e;"></div>
<span style="position:absolute;top:421.286px;font-size:6.1px;line-height:7.32px;color:#e8e8e8;white-space:nowrap;font-weight:bold;left:220.3px;transform:scaleX(0.8945);transform-origin:0 50%;">Normal</span>
<svg style="position:absolute;left:244.8px;top:423.7px;" width="4.0" height="3.2" viewBox="0 0 5 4"><path d="M0 0h5L2.500 4z" fill="#e4e4e4"/></svg>
<div style="position:absolute;left:253.6px;top:422.1px;width:6.3px;height:6.4px;background:#161616;"></div>
<div style="position:absolute;left:262.7px;top:421.70000000000005px;width:31.3px;height:7.2px;background:#0e0e0e;"></div>
<span style="position:absolute;top:421.286px;font-size:6.1px;line-height:7.32px;color:#e0e0e0;white-space:nowrap;font-weight:bold;left:265.3px;transform:scaleX(0.8655);transform-origin:0 50%;">None</span>
<svg style="position:absolute;left:288.0px;top:423.7px;" width="4.0" height="3.2" viewBox="0 0 5 4"><path d="M0 0h5L2.500 4z" fill="#e4e4e4"/></svg>
<div style="position:absolute;left:294px;top:421.175px;width:14px;height:8.25px;background:#2c2c2c;"></div>
<svg style="position:absolute;left:298.5px;top:422.6px;" width="5.4" height="5.4" viewBox="0 0 5.4 5.4"><circle cx="2.700" cy="2.700" r="2.300" fill="none" stroke="#7c7c7c" stroke-width=".7"/><path d="M2.700 2.700A1 1 0 1 1 1.700 1.800" fill="none" stroke="#7c7c7c" stroke-width=".6"/></svg>
<div style="position:absolute;left:308px;top:421.70000000000005px;width:42.5px;height:7.2px;background:#0e0e0e;"></div>
<span style="position:absolute;top:421.286px;font-size:6.1px;line-height:7.32px;color:#e0e0e0;white-space:nowrap;font-weight:bold;left:310.5px;transform:scaleX(0.8655);transform-origin:0 50%;">None</span>
<svg style="position:absolute;left:344.8px;top:423.7px;" width="4.0" height="3.2" viewBox="0 0 5 4"><path d="M0 0h5L2.500 4z" fill="#e4e4e4"/></svg>
<div style="position:absolute;left:0px;top:429.425px;width:362px;height:8.25px;background:#262626;"></div>
<div style="position:absolute;left:0px;top:437.35px;width:362px;height:0.5px;background:#1e1e1e;"></div>
<div style="position:absolute;left:2.3px;top:430.45px;width:7.4px;height:6.2px;background:#121212;border-radius:50%;"></div>
<svg style="position:absolute;left:2.5px;top:431.05px;" width="7" height="5" viewBox="0 0 7 5"><path d="M.3 2.500Q3.500 -1 6.700 2.500 3.500 6 .3 2.500z" fill="none" stroke="#d8d8d8" stroke-width=".8"/><circle cx="3.500" cy="2.500" r="1.200" fill="#d8d8d8"/></svg>
<div style="position:absolute;left:17.2px;top:430.35px;width:6.8px;height:6.4px;background:#161616;"></div>
<div style="position:absolute;left:25px;top:430.35px;width:6.5px;height:6.4px;background:#161616;"></div>
<svg style="position:absolute;left:35.7px;top:431.3px;" width="3.6" height="4.5" viewBox="0 0 4 5"><path d="M0 0L4 2.500 0 5z" fill="#e4e4e4"/></svg>
<div style="position:absolute;left:41.7px;top:429.425px;width:6.6px;height:8.25px;background:#0d0d16;"></div>
<div style="position:absolute;left:42px;top:430.55px;width:6.1px;height:5.9px;background:#f39a1e;"></div>
<span style="position:absolute;top:430.002px;font-size:6.4px;line-height:7.68px;color:#bcbcbc;white-space:nowrap;left:52.3px;">6</span>
<svg style="position:absolute;left:66px;top:430.35px;" width="8.2" height="6.4" viewBox="0 0 8.2 6.4"><rect x=".3" y=".3" width="7.600" height="5.800" fill="#c6c6c6"/><rect x="1.400" y="1.300" width="2.800" height="2.400" fill="#333"/><path d="M4.800 4.700h2.200M5.200 2h1.800M1.500 4.800h2" stroke="#333" stroke-width=".7"/></svg>
<span style="position:absolute;top:430.002px;font-size:6.4px;line-height:7.68px;color:#c2c2c2;white-space:nowrap;left:75.5px;transform:scaleX(0.9059);transform-origin:0 50%;">Scene 13</span>
<svg style="position:absolute;left:151.8px;top:430.75px;" width="6.4" height="5.6" viewBox="0 0 6.4 5.6"><path d="M.2 4.300C.2 1.800 1.600 .3 3.200 .3s3 1.500 3 4c-.9-.3-1.500.2-1.500.9-.5-.4-1-.4-1.500 0-.5-.4-1-.4-1.500 0 0-.7-.6-1.200-1.500-.9z" fill="#b0b0b0"/><circle cx="2.100" cy="2.700" r=".65" fill="#222"/><circle cx="4.300" cy="2.700" r=".65" fill="#222"/></svg>
<div style="position:absolute;left:159.4px;top:430.35px;width:5.8px;height:6.4px;background:#161616;"></div>
<svg style="position:absolute;left:166.3px;top:430.55px;" width="6" height="6" viewBox="0 0 6 6"><path d="M.4 5.600L5.600 .4" stroke="#e4e4e4" stroke-width=".8"/></svg>
<span style="position:absolute;top:429.779px;font-size:6.7px;line-height:8.04px;color:#e4e4e4;white-space:nowrap;font-family:'Liberation Serif',serif;font-weight:bold;font-style:italic;left:171.5px;width:10px;text-align:center;">fx</span>
<div style="position:absolute;left:188px;top:430.35px;width:6.3px;height:6.4px;background:#161616;"></div>
<div style="position:absolute;left:195.6px;top:430.35px;width:5.8px;height:6.4px;background:#161616;"></div>
<div style="position:absolute;left:202.7px;top:430.35px;width:6px;height:6.4px;background:#161616;"></div>
<div style="position:absolute;left:210px;top:429.425px;width:8px;height:8.25px;background:#2c2c2c;"></div>
<div style="position:absolute;left:218px;top:429.95000000000005px;width:33.2px;height:7.2px;background:#0e0e0e;"></div>
<span style="position:absolute;top:430.286px;font-size:6.1px;line-height:7.32px;color:#e8e8e8;white-space:nowrap;font-weight:bold;left:220.3px;transform:scaleX(0.8945);transform-origin:0 50%;">Normal</span>
<svg style="position:absolute;left:244.8px;top:431.95px;" width="4.0" height="3.2" viewBox="0 0 5 4"><path d="M0 0h5L2.500 4z" fill="#e4e4e4"/></svg>
<div style="position:absolute;left:253.6px;top:430.35px;width:6.3px;height:6.4px;background:#161616;"></div>
<div style="position:absolute;left:262.7px;top:429.95000000000005px;width:31.3px;height:7.2px;background:#0e0e0e;"></div>
<span style="position:absolute;top:430.286px;font-size:6.1px;line-height:7.32px;color:#e0e0e0;white-space:nowrap;font-weight:bold;left:265.3px;transform:scaleX(0.8655);transform-origin:0 50%;">None</span>
<svg style="position:absolute;left:288.0px;top:431.95px;" width="4.0" height="3.2" viewBox="0 0 5 4"><path d="M0 0h5L2.500 4z" fill="#e4e4e4"/></svg>
<div style="position:absolute;left:294px;top:429.425px;width:14px;height:8.25px;background:#2c2c2c;"></div>
<svg style="position:absolute;left:298.5px;top:430.85px;" width="5.4" height="5.4" viewBox="0 0 5.4 5.4"><circle cx="2.700" cy="2.700" r="2.300" fill="none" stroke="#7c7c7c" stroke-width=".7"/><path d="M2.700 2.700A1 1 0 1 1 1.700 1.800" fill="none" stroke="#7c7c7c" stroke-width=".6"/></svg>
<div style="position:absolute;left:308px;top:429.95000000000005px;width:42.5px;height:7.2px;background:#0e0e0e;"></div>
<span style="position:absolute;top:430.286px;font-size:6.1px;line-height:7.32px;color:#e0e0e0;white-space:nowrap;font-weight:bold;left:310.5px;transform:scaleX(0.8655);transform-origin:0 50%;">None</span>
<svg style="position:absolute;left:344.8px;top:431.95px;" width="4.0" height="3.2" viewBox="0 0 5 4"><path d="M0 0h5L2.500 4z" fill="#e4e4e4"/></svg>
<div style="position:absolute;left:0px;top:437.675px;width:362px;height:8.25px;background:#262626;"></div>
<div style="position:absolute;left:0px;top:445.6px;width:362px;height:0.5px;background:#1e1e1e;"></div>
<div style="position:absolute;left:2.3px;top:438.7px;width:7.4px;height:6.2px;background:#121212;border-radius:50%;"></div>
<svg style="position:absolute;left:2.5px;top:439.3px;" width="7" height="5" viewBox="0 0 7 5"><path d="M.3 2.500Q3.500 -1 6.700 2.500 3.500 6 .3 2.500z" fill="none" stroke="#d8d8d8" stroke-width=".8"/><circle cx="3.500" cy="2.500" r="1.200" fill="#d8d8d8"/></svg>
<div style="position:absolute;left:17.2px;top:438.6px;width:6.8px;height:6.4px;background:#161616;"></div>
<div style="position:absolute;left:25px;top:438.6px;width:6.5px;height:6.4px;background:#161616;"></div>
<svg style="position:absolute;left:35.7px;top:439.55px;" width="3.6" height="4.5" viewBox="0 0 4 5"><path d="M0 0L4 2.500 0 5z" fill="#e4e4e4"/></svg>
<div style="position:absolute;left:41.7px;top:437.675px;width:6.6px;height:8.25px;background:#0d0d16;"></div>
<div style="position:absolute;left:42px;top:438.8px;width:6.1px;height:5.9px;background:#f39a1e;"></div>
<span style="position:absolute;top:438.002px;font-size:6.4px;line-height:7.68px;color:#bcbcbc;white-space:nowrap;left:52.3px;">7</span>
<svg style="position:absolute;left:66px;top:438.6px;" width="8.2" height="6.4" viewBox="0 0 8.2 6.4"><rect x=".3" y=".3" width="7.600" height="5.800" fill="#c6c6c6"/><rect x="1.400" y="1.300" width="2.800" height="2.400" fill="#333"/><path d="M4.800 4.700h2.200M5.200 2h1.800M1.500 4.800h2" stroke="#333" stroke-width=".7"/></svg>
<span style="position:absolute;top:438.002px;font-size:6.4px;line-height:7.68px;color:#c2c2c2;white-space:nowrap;left:75.5px;transform:scaleX(0.9221);transform-origin:0 50%;">Scene 11</span>
<svg style="position:absolute;left:151.8px;top:439.0px;" width="6.4" height="5.6" viewBox="0 0 6.4 5.6"><path d="M.2 4.300C.2 1.800 1.600 .3 3.200 .3s3 1.500 3 4c-.9-.3-1.500.2-1.500.9-.5-.4-1-.4-1.500 0-.5-.4-1-.4-1.500 0 0-.7-.6-1.200-1.500-.9z" fill="#b0b0b0"/><circle cx="2.100" cy="2.700" r=".65" fill="#222"/><circle cx="4.300" cy="2.700" r=".65" fill="#222"/></svg>
<div style="position:absolute;left:159.4px;top:438.6px;width:5.8px;height:6.4px;background:#161616;"></div>
<svg style="position:absolute;left:166.3px;top:438.8px;" width="6" height="6" viewBox="0 0 6 6"><path d="M.4 5.600L5.600 .4" stroke="#e4e4e4" stroke-width=".8"/></svg>
<span style="position:absolute;top:437.779px;font-size:6.7px;line-height:8.04px;color:#e4e4e4;white-space:nowrap;font-family:'Liberation Serif',serif;font-weight:bold;font-style:italic;left:171.5px;width:10px;text-align:center;">fx</span>
<div style="position:absolute;left:188px;top:438.6px;width:6.3px;height:6.4px;background:#161616;"></div>
<div style="position:absolute;left:195.6px;top:438.6px;width:5.8px;height:6.4px;background:#161616;"></div>
<div style="position:absolute;left:202.7px;top:438.6px;width:6px;height:6.4px;background:#161616;"></div>
<div style="position:absolute;left:210px;top:437.675px;width:8px;height:8.25px;background:#2c2c2c;"></div>
<div style="position:absolute;left:218px;top:438.20000000000005px;width:33.2px;height:7.2px;background:#0e0e0e;"></div>
<span style="position:absolute;top:438.286px;font-size:6.1px;line-height:7.32px;color:#e8e8e8;white-space:nowrap;font-weight:bold;left:220.3px;transform:scaleX(0.8945);transform-origin:0 50%;">Normal</span>
<svg style="position:absolute;left:244.8px;top:440.2px;" width="4.0" height="3.2" viewBox="0 0 5 4"><path d="M0 0h5L2.500 4z" fill="#e4e4e4"/></svg>
<div style="position:absolute;left:253.6px;top:438.6px;width:6.3px;height:6.4px;background:#161616;"></div>
<div style="position:absolute;left:262.7px;top:438.20000000000005px;width:31.3px;height:7.2px;background:#0e0e0e;"></div>
<span style="position:absolute;top:438.286px;font-size:6.1px;line-height:7.32px;color:#e0e0e0;white-space:nowrap;font-weight:bold;left:265.3px;transform:scaleX(0.8655);transform-origin:0 50%;">None</span>
<svg style="position:absolute;left:288.0px;top:440.2px;" width="4.0" height="3.2" viewBox="0 0 5 4"><path d="M0 0h5L2.500 4z" fill="#e4e4e4"/></svg>
<div style="position:absolute;left:294px;top:437.675px;width:14px;height:8.25px;background:#2c2c2c;"></div>
<svg style="position:absolute;left:298.5px;top:439.1px;" width="5.4" height="5.4" viewBox="0 0 5.4 5.4"><circle cx="2.700" cy="2.700" r="2.300" fill="none" stroke="#7c7c7c" stroke-width=".7"/><path d="M2.700 2.700A1 1 0 1 1 1.700 1.800" fill="none" stroke="#7c7c7c" stroke-width=".6"/></svg>
<div style="position:absolute;left:308px;top:438.20000000000005px;width:42.5px;height:7.2px;background:#0e0e0e;"></div>
<span style="position:absolute;top:438.286px;font-size:6.1px;line-height:7.32px;color:#e0e0e0;white-space:nowrap;font-weight:bold;left:310.5px;transform:scaleX(0.8655);transform-origin:0 50%;">None</span>
<svg style="position:absolute;left:344.8px;top:440.2px;" width="4.0" height="3.2" viewBox="0 0 5 4"><path d="M0 0h5L2.500 4z" fill="#e4e4e4"/></svg>
<div style="position:absolute;left:0px;top:445.925px;width:362px;height:8.25px;background:#262626;"></div>
<div style="position:absolute;left:0px;top:453.85px;width:362px;height:0.5px;background:#1e1e1e;"></div>
<div style="position:absolute;left:2.3px;top:446.95px;width:7.4px;height:6.2px;background:#121212;border-radius:50%;"></div>
<svg style="position:absolute;left:2.5px;top:447.55px;" width="7" height="5" viewBox="0 0 7 5"><path d="M.3 2.500Q3.500 -1 6.700 2.500 3.500 6 .3 2.500z" fill="none" stroke="#d8d8d8" stroke-width=".8"/><circle cx="3.500" cy="2.500" r="1.200" fill="#d8d8d8"/></svg>
<div style="position:absolute;left:17.2px;top:446.85px;width:6.8px;height:6.4px;background:#161616;"></div>
<div style="position:absolute;left:25px;top:446.85px;width:6.5px;height:6.4px;background:#161616;"></div>
<svg style="position:absolute;left:35.7px;top:447.8px;" width="3.6" height="4.5" viewBox="0 0 4 5"><path d="M0 0L4 2.500 0 5z" fill="#e4e4e4"/></svg>
<div style="position:absolute;left:41.7px;top:445.925px;width:6.6px;height:8.25px;background:#0d0d16;"></div>
<div style="position:absolute;left:42px;top:447.05px;width:6.1px;height:5.9px;background:#f39a1e;"></div>
<span style="position:absolute;top:446.002px;font-size:6.4px;line-height:7.68px;color:#bcbcbc;white-space:nowrap;left:52.3px;">8</span>
<svg style="position:absolute;left:66px;top:446.85px;" width="8.2" height="6.4" viewBox="0 0 8.2 6.4"><rect x=".3" y=".3" width="7.600" height="5.800" fill="#c6c6c6"/><rect x="1.400" y="1.300" width="2.800" height="2.400" fill="#333"/><path d="M4.800 4.700h2.200M5.200 2h1.800M1.500 4.800h2" stroke="#333" stroke-width=".7"/></svg>
<span style="position:absolute;top:446.002px;font-size:6.4px;line-height:7.68px;color:#c2c2c2;white-space:nowrap;left:75.5px;transform:scaleX(0.9059);transform-origin:0 50%;">Scene 08</span>
<svg style="position:absolute;left:151.8px;top:447.25px;" width="6.4" height="5.6" viewBox="0 0 6.4 5.6"><path d="M.2 4.300C.2 1.800 1.600 .3 3.200 .3s3 1.500 3 4c-.9-.3-1.500.2-1.500.9-.5-.4-1-.4-1.500 0-.5-.4-1-.4-1.500 0 0-.7-.6-1.200-1.500-.9z" fill="#b0b0b0"/><circle cx="2.100" cy="2.700" r=".65" fill="#222"/><circle cx="4.300" cy="2.700" r=".65" fill="#222"/></svg>
<div style="position:absolute;left:159.4px;top:446.85px;width:5.8px;height:6.4px;background:#161616;"></div>
<svg style="position:absolute;left:166.3px;top:447.05px;" width="6" height="6" viewBox="0 0 6 6"><path d="M.4 5.600L5.600 .4" stroke="#e4e4e4" stroke-width=".8"/></svg>
<span style="position:absolute;top:446.779px;font-size:6.7px;line-height:8.04px;color:#e4e4e4;white-space:nowrap;font-family:'Liberation Serif',serif;font-weight:bold;font-style:italic;left:171.5px;width:10px;text-align:center;">fx</span>
<div style="position:absolute;left:188px;top:446.85px;width:6.3px;height:6.4px;background:#161616;"></div>
<div style="position:absolute;left:195.6px;top:446.85px;width:5.8px;height:6.4px;background:#161616;"></div>
<div style="position:absolute;left:202.7px;top:446.85px;width:6px;height:6.4px;background:#161616;"></div>
<div style="position:absolute;left:210px;top:445.925px;width:8px;height:8.25px;background:#2c2c2c;"></div>
<div style="position:absolute;left:218px;top:446.45000000000005px;width:33.2px;height:7.2px;background:#0e0e0e;"></div>
<span style="position:absolute;top:446.286px;font-size:6.1px;line-height:7.32px;color:#e8e8e8;white-space:nowrap;font-weight:bold;left:220.3px;transform:scaleX(0.8945);transform-origin:0 50%;">Normal</span>
<svg style="position:absolute;left:244.8px;top:448.45px;" width="4.0" height="3.2" viewBox="0 0 5 4"><path d="M0 0h5L2.500 4z" fill="#e4e4e4"/></svg>
<div style="position:absolute;left:253.6px;top:446.85px;width:6.3px;height:6.4px;background:#161616;"></div>
<div style="position:absolute;left:262.7px;top:446.45000000000005px;width:31.3px;height:7.2px;background:#0e0e0e;"></div>
<span style="position:absolute;top:446.286px;font-size:6.1px;line-height:7.32px;color:#e0e0e0;white-space:nowrap;font-weight:bold;left:265.3px;transform:scaleX(0.8655);transform-origin:0 50%;">None</span>
<svg style="position:absolute;left:288.0px;top:448.45px;" width="4.0" height="3.2" viewBox="0 0 5 4"><path d="M0 0h5L2.500 4z" fill="#e4e4e4"/></svg>
<div style="position:absolute;left:294px;top:445.925px;width:14px;height:8.25px;background:#2c2c2c;"></div>
<svg style="position:absolute;left:298.5px;top:447.35px;" width="5.4" height="5.4" viewBox="0 0 5.4 5.4"><circle cx="2.700" cy="2.700" r="2.300" fill="none" stroke="#7c7c7c" stroke-width=".7"/><path d="M2.700 2.700A1 1 0 1 1 1.700 1.800" fill="none" stroke="#7c7c7c" stroke-width=".6"/></svg>
<div style="position:absolute;left:308px;top:446.45000000000005px;width:42.5px;height:7.2px;background:#0e0e0e;"></div>
<span style="position:absolute;top:446.286px;font-size:6.1px;line-height:7.32px;color:#e0e0e0;white-space:nowrap;font-weight:bold;left:310.5px;transform:scaleX(0.8655);transform-origin:0 50%;">None</span>
<svg style="position:absolute;left:344.8px;top:448.45px;" width="4.0" height="3.2" viewBox="0 0 5 4"><path d="M0 0h5L2.500 4z" fill="#e4e4e4"/></svg>
<div style="position:absolute;left:0px;top:454.175px;width:362px;height:8.25px;background:#262626;"></div>
<div style="position:absolute;left:0px;top:462.1px;width:362px;height:0.5px;background:#1e1e1e;"></div>
<div style="position:absolute;left:2.3px;top:455.2px;width:7.4px;height:6.2px;background:#121212;border-radius:50%;"></div>
<svg style="position:absolute;left:2.5px;top:455.8px;" width="7" height="5" viewBox="0 0 7 5"><path d="M.3 2.500Q3.500 -1 6.700 2.500 3.500 6 .3 2.500z" fill="none" stroke="#d8d8d8" stroke-width=".8"/><circle cx="3.500" cy="2.500" r="1.200" fill="#d8d8d8"/></svg>
<div style="position:absolute;left:17.2px;top:455.1px;width:6.8px;height:6.4px;background:#161616;"></div>
<div style="position:absolute;left:25px;top:455.1px;width:6.5px;height:6.4px;background:#161616;"></div>
<svg style="position:absolute;left:35.7px;top:456.05px;" width="3.6" height="4.5" viewBox="0 0 4 5"><path d="M0 0L4 2.500 0 5z" fill="#e4e4e4"/></svg>
<div style="position:absolute;left:41.7px;top:454.175px;width:6.6px;height:8.25px;background:#0d0d16;"></div>
<div style="position:absolute;left:42px;top:455.3px;width:6.1px;height:5.9px;background:#f39a1e;"></div>
<span style="position:absolute;top:455.002px;font-size:6.4px;line-height:7.68px;color:#bcbcbc;white-space:nowrap;left:52.3px;">9</span>
<svg style="position:absolute;left:66px;top:455.1px;" width="8.2" height="6.4" viewBox="0 0 8.2 6.4"><rect x=".3" y=".3" width="7.600" height="5.800" fill="#c6c6c6"/><rect x="1.400" y="1.300" width="2.800" height="2.400" fill="#333"/><path d="M4.800 4.700h2.200M5.200 2h1.800M1.500 4.800h2" stroke="#333" stroke-width=".7"/></svg>
<span style="position:absolute;top:455.002px;font-size:6.4px;line-height:7.68px;color:#c2c2c2;white-space:nowrap;left:75.5px;transform:scaleX(0.9059);transform-origin:0 50%;">Scene 07</span>
<svg style="position:absolute;left:151.8px;top:455.5px;" width="6.4" height="5.6" viewBox="0 0 6.4 5.6"><path d="M.2 4.300C.2 1.800 1.600 .3 3.200 .3s3 1.500 3 4c-.9-.3-1.500.2-1.500.9-.5-.4-1-.4-1.500 0-.5-.4-1-.4-1.500 0 0-.7-.6-1.200-1.500-.9z" fill="#b0b0b0"/><circle cx="2.100" cy="2.700" r=".65" fill="#222"/><circle cx="4.300" cy="2.700" r=".65" fill="#222"/></svg>
<div style="position:absolute;left:159.4px;top:455.1px;width:5.8px;height:6.4px;background:#161616;"></div>
<svg style="position:absolute;left:166.3px;top:455.3px;" width="6" height="6" viewBox="0 0 6 6"><path d="M.4 5.600L5.600 .4" stroke="#e4e4e4" stroke-width=".8"/></svg>
<span style="position:absolute;top:454.779px;font-size:6.7px;line-height:8.04px;color:#e4e4e4;white-space:nowrap;font-family:'Liberation Serif',serif;font-weight:bold;font-style:italic;left:171.5px;width:10px;text-align:center;">fx</span>
<div style="position:absolute;left:188px;top:455.1px;width:6.3px;height:6.4px;background:#161616;"></div>
<div style="position:absolute;left:195.6px;top:455.1px;width:5.8px;height:6.4px;background:#161616;"></div>
<div style="position:absolute;left:202.7px;top:455.1px;width:6px;height:6.4px;background:#161616;"></div>
<div style="position:absolute;left:210px;top:454.175px;width:8px;height:8.25px;background:#2c2c2c;"></div>
<div style="position:absolute;left:218px;top:454.70000000000005px;width:33.2px;height:7.2px;background:#0e0e0e;"></div>
<span style="position:absolute;top:454.286px;font-size:6.1px;line-height:7.32px;color:#e8e8e8;white-space:nowrap;font-weight:bold;left:220.3px;transform:scaleX(0.8945);transform-origin:0 50%;">Normal</span>
<svg style="position:absolute;left:244.8px;top:456.7px;" width="4.0" height="3.2" viewBox="0 0 5 4"><path d="M0 0h5L2.500 4z" fill="#e4e4e4"/></svg>
<div style="position:absolute;left:253.6px;top:455.1px;width:6.3px;height:6.4px;background:#161616;"></div>
<div style="position:absolute;left:262.7px;top:454.70000000000005px;width:31.3px;height:7.2px;background:#0e0e0e;"></div>
<span style="position:absolute;top:454.286px;font-size:6.1px;line-height:7.32px;color:#e0e0e0;white-space:nowrap;font-weight:bold;left:265.3px;transform:scaleX(0.8655);transform-origin:0 50%;">None</span>
<svg style="position:absolute;left:288.0px;top:456.7px;" width="4.0" height="3.2" viewBox="0 0 5 4"><path d="M0 0h5L2.500 4z" fill="#e4e4e4"/></svg>
<div style="position:absolute;left:294px;top:454.175px;width:14px;height:8.25px;background:#2c2c2c;"></div>
<svg style="position:absolute;left:298.5px;top:455.6px;" width="5.4" height="5.4" viewBox="0 0 5.4 5.4"><circle cx="2.700" cy="2.700" r="2.300" fill="none" stroke="#7c7c7c" stroke-width=".7"/><path d="M2.700 2.700A1 1 0 1 1 1.700 1.800" fill="none" stroke="#7c7c7c" stroke-width=".6"/></svg>
<div style="position:absolute;left:308px;top:454.70000000000005px;width:42.5px;height:7.2px;background:#0e0e0e;"></div>
<span style="position:absolute;top:454.286px;font-size:6.1px;line-height:7.32px;color:#e0e0e0;white-space:nowrap;font-weight:bold;left:310.5px;transform:scaleX(0.8655);transform-origin:0 50%;">None</span>
<svg style="position:absolute;left:344.8px;top:456.7px;" width="4.0" height="3.2" viewBox="0 0 5 4"><path d="M0 0h5L2.500 4z" fill="#e4e4e4"/></svg>
<div style="position:absolute;left:0px;top:462.425px;width:362px;height:8.25px;background:#262626;"></div>
<div style="position:absolute;left:0px;top:470.35px;width:362px;height:0.5px;background:#1e1e1e;"></div>
<div style="position:absolute;left:2.3px;top:463.45px;width:7.4px;height:6.2px;background:#121212;border-radius:50%;"></div>
<svg style="position:absolute;left:2.5px;top:464.05px;" width="7" height="5" viewBox="0 0 7 5"><path d="M.3 2.500Q3.500 -1 6.700 2.500 3.500 6 .3 2.500z" fill="none" stroke="#d8d8d8" stroke-width=".8"/><circle cx="3.500" cy="2.500" r="1.200" fill="#d8d8d8"/></svg>
<div style="position:absolute;left:17.2px;top:463.35px;width:6.8px;height:6.4px;background:#161616;"></div>
<div style="position:absolute;left:25px;top:463.35px;width:6.5px;height:6.4px;background:#161616;"></div>
<svg style="position:absolute;left:35.7px;top:464.3px;" width="3.6" height="4.5" viewBox="0 0 4 5"><path d="M0 0L4 2.500 0 5z" fill="#e4e4e4"/></svg>
<div style="position:absolute;left:41.7px;top:462.425px;width:6.6px;height:8.25px;background:#0d0d16;"></div>
<div style="position:absolute;left:42px;top:463.55px;width:6.1px;height:5.9px;background:#f39a1e;"></div>
<span style="position:absolute;top:463.002px;font-size:6.4px;line-height:7.68px;color:#bcbcbc;white-space:nowrap;left:52.3px;">10</span>
<svg style="position:absolute;left:66px;top:463.35px;" width="8.2" height="6.4" viewBox="0 0 8.2 6.4"><rect x=".3" y=".3" width="7.600" height="5.800" fill="#c6c6c6"/><rect x="1.400" y="1.300" width="2.800" height="2.400" fill="#333"/><path d="M4.800 4.700h2.200M5.200 2h1.800M1.500 4.800h2" stroke="#333" stroke-width=".7"/></svg>
<span style="position:absolute;top:463.002px;font-size:6.4px;line-height:7.68px;color:#c2c2c2;white-space:nowrap;left:75.5px;transform:scaleX(0.9059);transform-origin:0 50%;">Scene 06</span>
<svg style="position:absolute;left:151.8px;top:463.75px;" width="6.4" height="5.6" viewBox="0 0 6.4 5.6"><path d="M.2 4.300C.2 1.800 1.600 .3 3.200 .3s3 1.500 3 4c-.9-.3-1.500.2-1.500.9-.5-.4-1-.4-1.500 0-.5-.4-1-.4-1.500 0 0-.7-.6-1.200-1.500-.9z" fill="#b0b0b0"/><circle cx="2.100" cy="2.700" r=".65" fill="#222"/><circle cx="4.300" cy="2.700" r=".65" fill="#222"/></svg>
<div style="position:absolute;left:159.4px;top:463.35px;width:5.8px;height:6.4px;background:#161616;"></div>
<svg style="position:absolute;left:166.3px;top:463.55px;" width="6" height="6" viewBox="0 0 6 6"><path d="M.4 5.600L5.600 .4" stroke="#e4e4e4" stroke-width=".8"/></svg>
<span style="position:absolute;top:462.779px;font-size:6.7px;line-height:8.04px;color:#e4e4e4;white-space:nowrap;font-family:'Liberation Serif',serif;font-weight:bold;font-style:italic;left:171.5px;width:10px;text-align:center;">fx</span>
<div style="position:absolute;left:188px;top:463.35px;width:6.3px;height:6.4px;background:#161616;"></div>
<div style="position:absolute;left:195.6px;top:463.35px;width:5.8px;height:6.4px;background:#161616;"></div>
<div style="position:absolute;left:202.7px;top:463.35px;width:6px;height:6.4px;background:#161616;"></div>
<div style="position:absolute;left:210px;top:462.425px;width:8px;height:8.25px;background:#2c2c2c;"></div>
<div style="position:absolute;left:218px;top:462.95000000000005px;width:33.2px;height:7.2px;background:#0e0e0e;"></div>
<span style="position:absolute;top:463.286px;font-size:6.1px;line-height:7.32px;color:#e8e8e8;white-space:nowrap;font-weight:bold;left:220.3px;transform:scaleX(0.8945);transform-origin:0 50%;">Normal</span>
<svg style="position:absolute;left:244.8px;top:464.95px;" width="4.0" height="3.2" viewBox="0 0 5 4"><path d="M0 0h5L2.500 4z" fill="#e4e4e4"/></svg>
<div style="position:absolute;left:253.6px;top:463.35px;width:6.3px;height:6.4px;background:#161616;"></div>
<div style="position:absolute;left:262.7px;top:462.95000000000005px;width:31.3px;height:7.2px;background:#0e0e0e;"></div>
<span style="position:absolute;top:463.286px;font-size:6.1px;line-height:7.32px;color:#e0e0e0;white-space:nowrap;font-weight:bold;left:265.3px;transform:scaleX(0.8655);transform-origin:0 50%;">None</span>
<svg style="position:absolute;left:288.0px;top:464.95px;" width="4.0" height="3.2" viewBox="0 0 5 4"><path d="M0 0h5L2.500 4z" fill="#e4e4e4"/></svg>
<div style="position:absolute;left:294px;top:462.425px;width:14px;height:8.25px;background:#2c2c2c;"></div>
<svg style="position:absolute;left:298.5px;top:463.85px;" width="5.4" height="5.4" viewBox="0 0 5.4 5.4"><circle cx="2.700" cy="2.700" r="2.300" fill="none" stroke="#7c7c7c" stroke-width=".7"/><path d="M2.700 2.700A1 1 0 1 1 1.700 1.800" fill="none" stroke="#7c7c7c" stroke-width=".6"/></svg>
<div style="position:absolute;left:308px;top:462.95000000000005px;width:42.5px;height:7.2px;background:#0e0e0e;"></div>
<span style="position:absolute;top:463.286px;font-size:6.1px;line-height:7.32px;color:#e0e0e0;white-space:nowrap;font-weight:bold;left:310.5px;transform:scaleX(0.8655);transform-origin:0 50%;">None</span>
<svg style="position:absolute;left:344.8px;top:464.95px;" width="4.0" height="3.2" viewBox="0 0 5 4"><path d="M0 0h5L2.500 4z" fill="#e4e4e4"/></svg>
<div style="position:absolute;left:0px;top:470.675px;width:362px;height:8.25px;background:#262626;"></div>
<div style="position:absolute;left:0px;top:478.6px;width:362px;height:0.5px;background:#1e1e1e;"></div>
<div style="position:absolute;left:2.3px;top:471.7px;width:7.4px;height:6.2px;background:#121212;border-radius:50%;"></div>
<svg style="position:absolute;left:2.5px;top:472.3px;" width="7" height="5" viewBox="0 0 7 5"><path d="M.3 2.500Q3.500 -1 6.700 2.500 3.500 6 .3 2.500z" fill="none" stroke="#d8d8d8" stroke-width=".8"/><circle cx="3.500" cy="2.500" r="1.200" fill="#d8d8d8"/></svg>
<div style="position:absolute;left:17.2px;top:471.6px;width:6.8px;height:6.4px;background:#161616;"></div>
<div style="position:absolute;left:25px;top:471.6px;width:6.5px;height:6.4px;background:#161616;"></div>
<svg style="position:absolute;left:35.7px;top:472.55px;" width="3.6" height="4.5" viewBox="0 0 4 5"><path d="M0 0L4 2.500 0 5z" fill="#e4e4e4"/></svg>
<div style="position:absolute;left:41.7px;top:470.675px;width:6.6px;height:8.25px;background:#0d0d16;"></div>
<div style="position:absolute;left:42px;top:471.8px;width:6.1px;height:5.9px;background:#f39a1e;"></div>
<span style="position:absolute;top:471.002px;font-size:6.4px;line-height:7.68px;color:#bcbcbc;white-space:nowrap;left:52.3px;">11</span>
<svg style="position:absolute;left:66px;top:471.6px;" width="8.2" height="6.4" viewBox="0 0 8.2 6.4"><rect x=".3" y=".3" width="7.600" height="5.800" fill="#c6c6c6"/><rect x="1.400" y="1.300" width="2.800" height="2.400" fill="#333"/><path d="M4.800 4.700h2.200M5.200 2h1.800M1.500 4.800h2" stroke="#333" stroke-width=".7"/></svg>
<span style="position:absolute;top:471.002px;font-size:6.4px;line-height:7.68px;color:#c2c2c2;white-space:nowrap;left:75.5px;transform:scaleX(0.9059);transform-origin:0 50%;">Scene 05</span>
<svg style="position:absolute;left:151.8px;top:472.0px;" width="6.4" height="5.6" viewBox="0 0 6.4 5.6"><path d="M.2 4.300C.2 1.800 1.600 .3 3.200 .3s3 1.500 3 4c-.9-.3-1.500.2-1.500.9-.5-.4-1-.4-1.500 0-.5-.4-1-.4-1.500 0 0-.7-.6-1.200-1.500-.9z" fill="#b0b0b0"/><circle cx="2.100" cy="2.700" r=".65" fill="#222"/><circle cx="4.300" cy="2.700" r=".65" fill="#222"/></svg>
<div style="position:absolute;left:159.4px;top:471.6px;width:5.8px;height:6.4px;background:#161616;"></div>
<svg style="position:absolute;left:166.3px;top:471.8px;" width="6" height="6" viewBox="0 0 6 6"><path d="M.4 5.600L5.600 .4" stroke="#e4e4e4" stroke-width=".8"/></svg>
<span style="position:absolute;top:470.779px;font-size:6.7px;line-height:8.04px;color:#e4e4e4;white-space:nowrap;font-family:'Liberation Serif',serif;font-weight:bold;font-style:italic;left:171.5px;width:10px;text-align:center;">fx</span>
<div style="position:absolute;left:188px;top:471.6px;width:6.3px;height:6.4px;background:#161616;"></div>
<div style="position:absolute;left:195.6px;top:471.6px;width:5.8px;height:6.4px;background:#161616;"></div>
<div style="position:absolute;left:202.7px;top:471.6px;width:6px;height:6.4px;background:#161616;"></div>
<div style="position:absolute;left:210px;top:470.675px;width:8px;height:8.25px;background:#2c2c2c;"></div>
<div style="position:absolute;left:218px;top:471.20000000000005px;width:33.2px;height:7.2px;background:#0e0e0e;"></div>
<span style="position:absolute;top:471.286px;font-size:6.1px;line-height:7.32px;color:#e8e8e8;white-space:nowrap;font-weight:bold;left:220.3px;transform:scaleX(0.8945);transform-origin:0 50%;">Normal</span>
<svg style="position:absolute;left:244.8px;top:473.2px;" width="4.0" height="3.2" viewBox="0 0 5 4"><path d="M0 0h5L2.500 4z" fill="#e4e4e4"/></svg>
<div style="position:absolute;left:253.6px;top:471.6px;width:6.3px;height:6.4px;background:#161616;"></div>
<div style="position:absolute;left:262.7px;top:471.20000000000005px;width:31.3px;height:7.2px;background:#0e0e0e;"></div>
<span style="position:absolute;top:471.286px;font-size:6.1px;line-height:7.32px;color:#e0e0e0;white-space:nowrap;font-weight:bold;left:265.3px;transform:scaleX(0.8655);transform-origin:0 50%;">None</span>
<svg style="position:absolute;left:288.0px;top:473.2px;" width="4.0" height="3.2" viewBox="0 0 5 4"><path d="M0 0h5L2.500 4z" fill="#e4e4e4"/></svg>
<div style="position:absolute;left:294px;top:470.675px;width:14px;height:8.25px;background:#2c2c2c;"></div>
<svg style="position:absolute;left:298.5px;top:472.1px;" width="5.4" height="5.4" viewBox="0 0 5.4 5.4"><circle cx="2.700" cy="2.700" r="2.300" fill="none" stroke="#7c7c7c" stroke-width=".7"/><path d="M2.700 2.700A1 1 0 1 1 1.700 1.800" fill="none" stroke="#7c7c7c" stroke-width=".6"/></svg>
<div style="position:absolute;left:308px;top:471.20000000000005px;width:42.5px;height:7.2px;background:#0e0e0e;"></div>
<span style="position:absolute;top:471.286px;font-size:6.1px;line-height:7.32px;color:#e0e0e0;white-space:nowrap;font-weight:bold;left:310.5px;transform:scaleX(0.8655);transform-origin:0 50%;">None</span>
<svg style="position:absolute;left:344.8px;top:473.2px;" width="4.0" height="3.2" viewBox="0 0 5 4"><path d="M0 0h5L2.500 4z" fill="#e4e4e4"/></svg>
<div style="position:absolute;left:0px;top:478.925px;width:362px;height:8.25px;background:#262626;"></div>
<div style="position:absolute;left:0px;top:486.85px;width:362px;height:0.5px;background:#1e1e1e;"></div>
<div style="position:absolute;left:2.3px;top:479.95px;width:7.4px;height:6.2px;background:#121212;border-radius:50%;"></div>
<svg style="position:absolute;left:2.5px;top:480.55px;" width="7" height="5" viewBox="0 0 7 5"><path d="M.3 2.500Q3.500 -1 6.700 2.500 3.500 6 .3 2.500z" fill="none" stroke="#d8d8d8" stroke-width=".8"/><circle cx="3.500" cy="2.500" r="1.200" fill="#d8d8d8"/></svg>
<div style="position:absolute;left:17.2px;top:479.85px;width:6.8px;height:6.4px;background:#161616;"></div>
<div style="position:absolute;left:25px;top:479.85px;width:6.5px;height:6.4px;background:#161616;"></div>
<svg style="position:absolute;left:35.7px;top:480.8px;" width="3.6" height="4.5" viewBox="0 0 4 5"><path d="M0 0L4 2.500 0 5z" fill="#e4e4e4"/></svg>
<div style="position:absolute;left:41.7px;top:478.925px;width:6.6px;height:8.25px;background:#0d0d16;"></div>
<div style="position:absolute;left:42px;top:480.05px;width:6.1px;height:5.9px;background:#f39a1e;"></div>
<span style="position:absolute;top:479.002px;font-size:6.4px;line-height:7.68px;color:#bcbcbc;white-space:nowrap;left:52.3px;">12</span>
<svg style="position:absolute;left:66px;top:479.85px;" width="8.2" height="6.4" viewBox="0 0 8.2 6.4"><rect x=".3" y=".3" width="7.600" height="5.800" fill="#c6c6c6"/><rect x="1.400" y="1.300" width="2.800" height="2.400" fill="#333"/><path d="M4.800 4.700h2.200M5.200 2h1.800M1.500 4.800h2" stroke="#333" stroke-width=".7"/></svg>
<span style="position:absolute;top:479.002px;font-size:6.4px;line-height:7.68px;color:#c2c2c2;white-space:nowrap;left:75.5px;transform:scaleX(0.9059);transform-origin:0 50%;">Scene 04</span>
<svg style="position:absolute;left:151.8px;top:480.25px;" width="6.4" height="5.6" viewBox="0 0 6.4 5.6"><path d="M.2 4.300C.2 1.800 1.600 .3 3.200 .3s3 1.500 3 4c-.9-.3-1.500.2-1.500.9-.5-.4-1-.4-1.500 0-.5-.4-1-.4-1.500 0 0-.7-.6-1.200-1.500-.9z" fill="#b0b0b0"/><circle cx="2.100" cy="2.700" r=".65" fill="#222"/><circle cx="4.300" cy="2.700" r=".65" fill="#222"/></svg>
<div style="position:absolute;left:159.4px;top:479.85px;width:5.8px;height:6.4px;background:#161616;"></div>
<svg style="position:absolute;left:166.3px;top:480.05px;" width="6" height="6" viewBox="0 0 6 6"><path d="M.4 5.600L5.600 .4" stroke="#e4e4e4" stroke-width=".8"/></svg>
<span style="position:absolute;top:479.779px;font-size:6.7px;line-height:8.04px;color:#e4e4e4;white-space:nowrap;font-family:'Liberation Serif',serif;font-weight:bold;font-style:italic;left:171.5px;width:10px;text-align:center;">fx</span>
<div style="position:absolute;left:188px;top:479.85px;width:6.3px;height:6.4px;background:#161616;"></div>
<div style="position:absolute;left:195.6px;top:479.85px;width:5.8px;height:6.4px;background:#161616;"></div>
<div style="position:absolute;left:202.7px;top:479.85px;width:6px;height:6.4px;background:#161616;"></div>
<div style="position:absolute;left:210px;top:478.925px;width:8px;height:8.25px;background:#2c2c2c;"></div>
<div style="position:absolute;left:218px;top:479.45000000000005px;width:33.2px;height:7.2px;background:#0e0e0e;"></div>
<span style="position:absolute;top:479.286px;font-size:6.1px;line-height:7.32px;color:#e8e8e8;white-space:nowrap;font-weight:bold;left:220.3px;transform:scaleX(0.8945);transform-origin:0 50%;">Normal</span>
<svg style="position:absolute;left:244.8px;top:481.45px;" width="4.0" height="3.2" viewBox="0 0 5 4"><path d="M0 0h5L2.500 4z" fill="#e4e4e4"/></svg>
<div style="position:absolute;left:253.6px;top:479.85px;width:6.3px;height:6.4px;background:#161616;"></div>
<div style="position:absolute;left:262.7px;top:479.45000000000005px;width:31.3px;height:7.2px;background:#0e0e0e;"></div>
<span style="position:absolute;top:479.286px;font-size:6.1px;line-height:7.32px;color:#e0e0e0;white-space:nowrap;font-weight:bold;left:265.3px;transform:scaleX(0.8655);transform-origin:0 50%;">None</span>
<svg style="position:absolute;left:288.0px;top:481.45px;" width="4.0" height="3.2" viewBox="0 0 5 4"><path d="M0 0h5L2.500 4z" fill="#e4e4e4"/></svg>
<div style="position:absolute;left:294px;top:478.925px;width:14px;height:8.25px;background:#2c2c2c;"></div>
<svg style="position:absolute;left:298.5px;top:480.35px;" width="5.4" height="5.4" viewBox="0 0 5.4 5.4"><circle cx="2.700" cy="2.700" r="2.300" fill="none" stroke="#7c7c7c" stroke-width=".7"/><path d="M2.700 2.700A1 1 0 1 1 1.700 1.800" fill="none" stroke="#7c7c7c" stroke-width=".6"/></svg>
<div style="position:absolute;left:308px;top:479.45000000000005px;width:42.5px;height:7.2px;background:#0e0e0e;"></div>
<span style="position:absolute;top:479.286px;font-size:6.1px;line-height:7.32px;color:#e0e0e0;white-space:nowrap;font-weight:bold;left:310.5px;transform:scaleX(0.8655);transform-origin:0 50%;">None</span>
<svg style="position:absolute;left:344.8px;top:481.45px;" width="4.0" height="3.2" viewBox="0 0 5 4"><path d="M0 0h5L2.500 4z" fill="#e4e4e4"/></svg>
<div style="position:absolute;left:0px;top:487.175px;width:362px;height:8.25px;background:#262626;"></div>
<div style="position:absolute;left:0px;top:495.1px;width:362px;height:0.5px;background:#1e1e1e;"></div>
<div style="position:absolute;left:2.3px;top:488.2px;width:7.4px;height:6.2px;background:#121212;border-radius:50%;"></div>
<svg style="position:absolute;left:2.5px;top:488.8px;" width="7" height="5" viewBox="0 0 7 5"><path d="M.3 2.500Q3.500 -1 6.700 2.500 3.500 6 .3 2.500z" fill="none" stroke="#d8d8d8" stroke-width=".8"/><circle cx="3.500" cy="2.500" r="1.200" fill="#d8d8d8"/></svg>
<div style="position:absolute;left:17.2px;top:488.1px;width:6.8px;height:6.4px;background:#161616;"></div>
<div style="position:absolute;left:25px;top:488.1px;width:6.5px;height:6.4px;background:#161616;"></div>
<svg style="position:absolute;left:35.7px;top:489.05px;" width="3.6" height="4.5" viewBox="0 0 4 5"><path d="M0 0L4 2.500 0 5z" fill="#e4e4e4"/></svg>
<div style="position:absolute;left:41.7px;top:487.175px;width:6.6px;height:8.25px;background:#0d0d16;"></div>
<div style="position:absolute;left:42px;top:488.3px;width:6.1px;height:5.9px;background:#f39a1e;"></div>
<span style="position:absolute;top:488.002px;font-size:6.4px;line-height:7.68px;color:#bcbcbc;white-space:nowrap;left:52.3px;">13</span>
<svg style="position:absolute;left:66px;top:488.1px;" width="8.2" height="6.4" viewBox="0 0 8.2 6.4"><rect x=".3" y=".3" width="7.600" height="5.800" fill="#c6c6c6"/><rect x="1.400" y="1.300" width="2.800" height="2.400" fill="#333"/><path d="M4.800 4.700h2.200M5.200 2h1.800M1.500 4.800h2" stroke="#333" stroke-width=".7"/></svg>
<span style="position:absolute;top:488.002px;font-size:6.4px;line-height:7.68px;color:#c2c2c2;white-space:nowrap;left:75.5px;transform:scaleX(0.9059);transform-origin:0 50%;">Scene 03</span>
<svg style="position:absolute;left:151.8px;top:488.5px;" width="6.4" height="5.6" viewBox="0 0 6.4 5.6"><path d="M.2 4.300C.2 1.800 1.600 .3 3.200 .3s3 1.500 3 4c-.9-.3-1.500.2-1.500.9-.5-.4-1-.4-1.500 0-.5-.4-1-.4-1.500 0 0-.7-.6-1.200-1.500-.9z" fill="#b0b0b0"/><circle cx="2.100" cy="2.700" r=".65" fill="#222"/><circle cx="4.300" cy="2.700" r=".65" fill="#222"/></svg>
<div style="position:absolute;left:159.4px;top:488.1px;width:5.8px;height:6.4px;background:#161616;"></div>
<svg style="position:absolute;left:166.3px;top:488.3px;" width="6" height="6" viewBox="0 0 6 6"><path d="M.4 5.600L5.600 .4" stroke="#e4e4e4" stroke-width=".8"/></svg>
<span style="position:absolute;top:487.779px;font-size:6.7px;line-height:8.04px;color:#e4e4e4;white-space:nowrap;font-family:'Liberation Serif',serif;font-weight:bold;font-style:italic;left:171.5px;width:10px;text-align:center;">fx</span>
<div style="position:absolute;left:188px;top:488.1px;width:6.3px;height:6.4px;background:#161616;"></div>
<div style="position:absolute;left:195.6px;top:488.1px;width:5.8px;height:6.4px;background:#161616;"></div>
<div style="position:absolute;left:202.7px;top:488.1px;width:6px;height:6.4px;background:#161616;"></div>
<div style="position:absolute;left:210px;top:487.175px;width:8px;height:8.25px;background:#2c2c2c;"></div>
<div style="position:absolute;left:218px;top:487.70000000000005px;width:33.2px;height:7.2px;background:#0e0e0e;"></div>
<span style="position:absolute;top:487.286px;font-size:6.1px;line-height:7.32px;color:#e8e8e8;white-space:nowrap;font-weight:bold;left:220.3px;transform:scaleX(0.8945);transform-origin:0 50%;">Normal</span>
<svg style="position:absolute;left:244.8px;top:489.7px;" width="4.0" height="3.2" viewBox="0 0 5 4"><path d="M0 0h5L2.500 4z" fill="#e4e4e4"/></svg>
<div style="position:absolute;left:253.6px;top:488.1px;width:6.3px;height:6.4px;background:#161616;"></div>
<div style="position:absolute;left:262.7px;top:487.70000000000005px;width:31.3px;height:7.2px;background:#0e0e0e;"></div>
<span style="position:absolute;top:487.286px;font-size:6.1px;line-height:7.32px;color:#e0e0e0;white-space:nowrap;font-weight:bold;left:265.3px;transform:scaleX(0.8655);transform-origin:0 50%;">None</span>
<svg style="position:absolute;left:288.0px;top:489.7px;" width="4.0" height="3.2" viewBox="0 0 5 4"><path d="M0 0h5L2.500 4z" fill="#e4e4e4"/></svg>
<div style="position:absolute;left:294px;top:487.175px;width:14px;height:8.25px;background:#2c2c2c;"></div>
<svg style="position:absolute;left:298.5px;top:488.6px;" width="5.4" height="5.4" viewBox="0 0 5.4 5.4"><circle cx="2.700" cy="2.700" r="2.300" fill="none" stroke="#7c7c7c" stroke-width=".7"/><path d="M2.700 2.700A1 1 0 1 1 1.700 1.800" fill="none" stroke="#7c7c7c" stroke-width=".6"/></svg>
<div style="position:absolute;left:308px;top:487.70000000000005px;width:42.5px;height:7.2px;background:#0e0e0e;"></div>
<span style="position:absolute;top:487.286px;font-size:6.1px;line-height:7.32px;color:#e0e0e0;white-space:nowrap;font-weight:bold;left:310.5px;transform:scaleX(0.8655);transform-origin:0 50%;">None</span>
<svg style="position:absolute;left:344.8px;top:489.7px;" width="4.0" height="3.2" viewBox="0 0 5 4"><path d="M0 0h5L2.500 4z" fill="#e4e4e4"/></svg>
<div style="position:absolute;left:0px;top:495.425px;width:362px;height:8.25px;background:#262626;"></div>
<div style="position:absolute;left:0px;top:503.35px;width:362px;height:0.5px;background:#1e1e1e;"></div>
<div style="position:absolute;left:2.3px;top:496.45px;width:7.4px;height:6.2px;background:#121212;border-radius:50%;"></div>
<svg style="position:absolute;left:2.5px;top:497.05px;" width="7" height="5" viewBox="0 0 7 5"><path d="M.3 2.500Q3.500 -1 6.700 2.500 3.500 6 .3 2.500z" fill="none" stroke="#d8d8d8" stroke-width=".8"/><circle cx="3.500" cy="2.500" r="1.200" fill="#d8d8d8"/></svg>
<div style="position:absolute;left:17.2px;top:496.35px;width:6.8px;height:6.4px;background:#161616;"></div>
<div style="position:absolute;left:25px;top:496.35px;width:6.5px;height:6.4px;background:#161616;"></div>
<svg style="position:absolute;left:35.7px;top:497.3px;" width="3.6" height="4.5" viewBox="0 0 4 5"><path d="M0 0L4 2.500 0 5z" fill="#e4e4e4"/></svg>
<div style="position:absolute;left:41.7px;top:495.425px;width:6.6px;height:8.25px;background:#0d0d16;"></div>
<div style="position:absolute;left:42px;top:496.55px;width:6.1px;height:5.9px;background:#f39a1e;"></div>
<span style="position:absolute;top:496.002px;font-size:6.4px;line-height:7.68px;color:#bcbcbc;white-space:nowrap;left:52.3px;">14</span>
<svg style="position:absolute;left:66px;top:496.35px;" width="8.2" height="6.4" viewBox="0 0 8.2 6.4"><rect x=".3" y=".3" width="7.600" height="5.800" fill="#c6c6c6"/><rect x="1.400" y="1.300" width="2.800" height="2.400" fill="#333"/><path d="M4.800 4.700h2.200M5.200 2h1.800M1.500 4.800h2" stroke="#333" stroke-width=".7"/></svg>
<span style="position:absolute;top:496.002px;font-size:6.4px;line-height:7.68px;color:#c2c2c2;white-space:nowrap;left:75.5px;transform:scaleX(0.9059);transform-origin:0 50%;">Scene 02</span>
<svg style="position:absolute;left:151.8px;top:496.75px;" width="6.4" height="5.6" viewBox="0 0 6.4 5.6"><path d="M.2 4.300C.2 1.800 1.600 .3 3.200 .3s3 1.500 3 4c-.9-.3-1.500.2-1.500.9-.5-.4-1-.4-1.500 0-.5-.4-1-.4-1.500 0 0-.7-.6-1.200-1.500-.9z" fill="#b0b0b0"/><circle cx="2.100" cy="2.700" r=".65" fill="#222"/><circle cx="4.300" cy="2.700" r=".65" fill="#222"/></svg>
<div style="position:absolute;left:159.4px;top:496.35px;width:5.8px;height:6.4px;background:#161616;"></div>
<svg style="position:absolute;left:166.3px;top:496.55px;" width="6" height="6" viewBox="0 0 6 6"><path d="M.4 5.600L5.600 .4" stroke="#e4e4e4" stroke-width=".8"/></svg>
<span style="position:absolute;top:495.779px;font-size:6.7px;line-height:8.04px;color:#e4e4e4;white-space:nowrap;font-family:'Liberation Serif',serif;font-weight:bold;font-style:italic;left:171.5px;width:10px;text-align:center;">fx</span>
<div style="position:absolute;left:188px;top:496.35px;width:6.3px;height:6.4px;background:#161616;"></div>
<div style="position:absolute;left:195.6px;top:496.35px;width:5.8px;height:6.4px;background:#161616;"></div>
<div style="position:absolute;left:202.7px;top:496.35px;width:6px;height:6.4px;background:#161616;"></div>
<div style="position:absolute;left:210px;top:495.425px;width:8px;height:8.25px;background:#2c2c2c;"></div>
<div style="position:absolute;left:218px;top:495.95000000000005px;width:33.2px;height:7.2px;background:#0e0e0e;"></div>
<span style="position:absolute;top:496.286px;font-size:6.1px;line-height:7.32px;color:#e8e8e8;white-space:nowrap;font-weight:bold;left:220.3px;transform:scaleX(0.8945);transform-origin:0 50%;">Normal</span>
<svg style="position:absolute;left:244.8px;top:497.95px;" width="4.0" height="3.2" viewBox="0 0 5 4"><path d="M0 0h5L2.500 4z" fill="#e4e4e4"/></svg>
<div style="position:absolute;left:253.6px;top:496.35px;width:6.3px;height:6.4px;background:#161616;"></div>
<div style="position:absolute;left:262.7px;top:495.95000000000005px;width:31.3px;height:7.2px;background:#0e0e0e;"></div>
<span style="position:absolute;top:496.286px;font-size:6.1px;line-height:7.32px;color:#e0e0e0;white-space:nowrap;font-weight:bold;left:265.3px;transform:scaleX(0.8655);transform-origin:0 50%;">None</span>
<svg style="position:absolute;left:288.0px;top:497.95px;" width="4.0" height="3.2" viewBox="0 0 5 4"><path d="M0 0h5L2.500 4z" fill="#e4e4e4"/></svg>
<div style="position:absolute;left:294px;top:495.425px;width:14px;height:8.25px;background:#2c2c2c;"></div>
<svg style="position:absolute;left:298.5px;top:496.85px;" width="5.4" height="5.4" viewBox="0 0 5.4 5.4"><circle cx="2.700" cy="2.700" r="2.300" fill="none" stroke="#7c7c7c" stroke-width=".7"/><path d="M2.700 2.700A1 1 0 1 1 1.700 1.800" fill="none" stroke="#7c7c7c" stroke-width=".6"/></svg>
<div style="position:absolute;left:308px;top:495.95000000000005px;width:42.5px;height:7.2px;background:#0e0e0e;"></div>
<span style="position:absolute;top:496.286px;font-size:6.1px;line-height:7.32px;color:#e0e0e0;white-space:nowrap;font-weight:bold;left:310.5px;transform:scaleX(0.8655);transform-origin:0 50%;">None</span>
<svg style="position:absolute;left:344.8px;top:497.95px;" width="4.0" height="3.2" viewBox="0 0 5 4"><path d="M0 0h5L2.500 4z" fill="#e4e4e4"/></svg>
<div style="position:absolute;left:0px;top:503.675px;width:362px;height:8.25px;background:#262626;"></div>
<div style="position:absolute;left:0px;top:511.6px;width:362px;height:0.5px;background:#1e1e1e;"></div>
<div style="position:absolute;left:2.3px;top:504.7px;width:7.4px;height:6.2px;background:#121212;border-radius:50%;"></div>
<svg style="position:absolute;left:2.5px;top:505.3px;" width="7" height="5" viewBox="0 0 7 5"><path d="M.3 2.500Q3.500 -1 6.700 2.500 3.500 6 .3 2.500z" fill="none" stroke="#d8d8d8" stroke-width=".8"/><circle cx="3.500" cy="2.500" r="1.200" fill="#d8d8d8"/></svg>
<div style="position:absolute;left:17.2px;top:504.6px;width:6.8px;height:6.4px;background:#161616;"></div>
<div style="position:absolute;left:25px;top:504.6px;width:6.5px;height:6.4px;background:#161616;"></div>
<svg style="position:absolute;left:35.7px;top:505.55px;" width="3.6" height="4.5" viewBox="0 0 4 5"><path d="M0 0L4 2.500 0 5z" fill="#e4e4e4"/></svg>
<div style="position:absolute;left:41.7px;top:503.675px;width:6.6px;height:8.25px;background:#0d0d16;"></div>
<div style="position:absolute;left:42px;top:504.8px;width:6.1px;height:5.9px;background:#f39a1e;"></div>
<span style="position:absolute;top:504.002px;font-size:6.4px;line-height:7.68px;color:#bcbcbc;white-space:nowrap;left:52.3px;">15</span>
<svg style="position:absolute;left:66px;top:504.6px;" width="8.2" height="6.4" viewBox="0 0 8.2 6.4"><rect x=".3" y=".3" width="7.600" height="5.800" fill="#c6c6c6"/><rect x="1.400" y="1.300" width="2.800" height="2.400" fill="#333"/><path d="M4.800 4.700h2.200M5.200 2h1.800M1.500 4.800h2" stroke="#333" stroke-width=".7"/></svg>
<span style="position:absolute;top:504.002px;font-size:6.4px;line-height:7.68px;color:#c2c2c2;white-space:nowrap;left:75.5px;transform:scaleX(0.9059);transform-origin:0 50%;">Scene 01</span>
<svg style="position:absolute;left:151.8px;top:505.0px;" width="6.4" height="5.6" viewBox="0 0 6.4 5.6"><path d="M.2 4.300C.2 1.800 1.600 .3 3.200 .3s3 1.500 3 4c-.9-.3-1.500.2-1.500.9-.5-.4-1-.4-1.500 0-.5-.4-1-.4-1.500 0 0-.7-.6-1.200-1.500-.9z" fill="#b0b0b0"/><circle cx="2.100" cy="2.700" r=".65" fill="#222"/><circle cx="4.300" cy="2.700" r=".65" fill="#222"/></svg>
<div style="position:absolute;left:159.4px;top:504.6px;width:5.8px;height:6.4px;background:#161616;"></div>
<svg style="position:absolute;left:166.3px;top:504.8px;" width="6" height="6" viewBox="0 0 6 6"><path d="M.4 5.600L5.600 .4" stroke="#e4e4e4" stroke-width=".8"/></svg>
<span style="position:absolute;top:503.779px;font-size:6.7px;line-height:8.04px;color:#e4e4e4;white-space:nowrap;font-family:'Liberation Serif',serif;font-weight:bold;font-style:italic;left:171.5px;width:10px;text-align:center;">fx</span>
<div style="position:absolute;left:188px;top:504.6px;width:6.3px;height:6.4px;background:#161616;"></div>
<div style="position:absolute;left:195.6px;top:504.6px;width:5.8px;height:6.4px;background:#161616;"></div>
<div style="position:absolute;left:202.7px;top:504.6px;width:6px;height:6.4px;background:#161616;"></div>
<div style="position:absolute;left:210px;top:503.675px;width:8px;height:8.25px;background:#2c2c2c;"></div>
<div style="position:absolute;left:218px;top:504.20000000000005px;width:33.2px;height:7.2px;background:#0e0e0e;"></div>
<span style="position:absolute;top:504.286px;font-size:6.1px;line-height:7.32px;color:#e8e8e8;white-space:nowrap;font-weight:bold;left:220.3px;transform:scaleX(0.8945);transform-origin:0 50%;">Normal</span>
<svg style="position:absolute;left:244.8px;top:506.2px;" width="4.0" height="3.2" viewBox="0 0 5 4"><path d="M0 0h5L2.500 4z" fill="#e4e4e4"/></svg>
<div style="position:absolute;left:253.6px;top:504.6px;width:6.3px;height:6.4px;background:#161616;"></div>
<div style="position:absolute;left:262.7px;top:504.20000000000005px;width:31.3px;height:7.2px;background:#0e0e0e;"></div>
<span style="position:absolute;top:504.286px;font-size:6.1px;line-height:7.32px;color:#e0e0e0;white-space:nowrap;font-weight:bold;left:265.3px;transform:scaleX(0.8655);transform-origin:0 50%;">None</span>
<svg style="position:absolute;left:288.0px;top:506.2px;" width="4.0" height="3.2" viewBox="0 0 5 4"><path d="M0 0h5L2.500 4z" fill="#e4e4e4"/></svg>
<div style="position:absolute;left:294px;top:503.675px;width:14px;height:8.25px;background:#2c2c2c;"></div>
<svg style="position:absolute;left:298.5px;top:505.1px;" width="5.4" height="5.4" viewBox="0 0 5.4 5.4"><circle cx="2.700" cy="2.700" r="2.300" fill="none" stroke="#7c7c7c" stroke-width=".7"/><path d="M2.700 2.700A1 1 0 1 1 1.700 1.800" fill="none" stroke="#7c7c7c" stroke-width=".6"/></svg>
<div style="position:absolute;left:308px;top:504.20000000000005px;width:42.5px;height:7.2px;background:#0e0e0e;"></div>
<span style="position:absolute;top:504.286px;font-size:6.1px;line-height:7.32px;color:#e0e0e0;white-space:nowrap;font-weight:bold;left:310.5px;transform:scaleX(0.8655);transform-origin:0 50%;">None</span>
<svg style="position:absolute;left:344.8px;top:506.2px;" width="4.0" height="3.2" viewBox="0 0 5 4"><path d="M0 0h5L2.500 4z" fill="#e4e4e4"/></svg>
<div style="position:absolute;left:0px;top:512.7px;width:362px;height:1.8px;background:#262626;"></div>
<div style="position:absolute;left:350.5px;top:396px;width:10px;height:118px;background:#222;"></div>
<div style="position:absolute;left:360.5px;top:378.5px;width:3.5px;height:136px;background:#0e0e0e;"></div>
<div style="position:absolute;left:364px;top:378.5px;width:462px;height:26px;background:#1f1f1f;"></div>
<div style="position:absolute;left:364px;top:380.8px;width:449px;height:4.6px;background:#6c6c6c;border-radius:2.300px;"></div>
<div style="position:absolute;left:811.5px;top:380.6px;width:5px;height:5px;background:#2ea6ea;border-radius:50%;"></div>
<span style="position:absolute;top:386.044px;font-size:5.3px;line-height:6.36px;color:#a8a8a8;white-space:nowrap;left:686.0px;width:30px;text-align:center;">01:00s</span>
<div style="position:absolute;left:700.7px;top:392.8px;width:0.7px;height:1.8px;background:#8a8a8a;"></div>
<span style="position:absolute;top:386.044px;font-size:5.3px;line-height:6.36px;color:#a8a8a8;white-space:nowrap;left:714.2px;width:30px;text-align:center;">05s</span>
<div style="position:absolute;left:728.9000000000001px;top:392.8px;width:0.7px;height:1.8px;background:#8a8a8a;"></div>
<span style="position:absolute;top:386.044px;font-size:5.3px;line-height:6.36px;color:#a8a8a8;white-space:nowrap;left:742.4px;width:30px;text-align:center;">10s</span>
<div style="position:absolute;left:757.1px;top:392.8px;width:0.7px;height:1.8px;background:#8a8a8a;"></div>
<span style="position:absolute;top:386.044px;font-size:5.3px;line-height:6.36px;color:#a8a8a8;white-space:nowrap;left:770.6px;width:30px;text-align:center;">15s</span>
<div style="position:absolute;left:785.3000000000001px;top:392.8px;width:0.7px;height:1.8px;background:#8a8a8a;"></div>
<div style="position:absolute;left:805px;top:385px;width:10.500px;height:9px;overflow:hidden"><span style="position:absolute;top:1.044px;font-size:5.3px;line-height:6.36px;color:#a8a8a8;white-space:nowrap;left:4.3px;transform:scaleX(0.9947);transform-origin:0 50%;">20s</span></div>
<div style="position:absolute;left:813.5px;top:392.8px;width:0.7px;height:1.8px;background:#8a8a8a;"></div>
<div style="position:absolute;left:364px;top:395.6px;width:449.5px;height:7.2px;background:#585858;"></div>
<div style="position:absolute;left:812.5px;top:394.8px;width:2.3px;height:8.8px;background:#2ea6ea;border-radius:1px;"></div>
<div style="position:absolute;left:364px;top:403px;width:462px;height:1.6px;background:#111;"></div>
<div style="position:absolute;left:364px;top:404.6px;width:450.5px;height:109.4px;background:#3c3c3c;"></div>
<div style="position:absolute;left:364px;top:404.3px;width:450.5px;height:0.6px;background:#2d2d2d;"></div>
<div style="position:absolute;left:364px;top:412.55px;width:450.5px;height:0.6px;background:#2d2d2d;"></div>
<div style="position:absolute;left:364px;top:420.8px;width:450.5px;height:0.6px;background:#2d2d2d;"></div>
<div style="position:absolute;left:364px;top:429.05px;width:450.5px;height:0.6px;background:#2d2d2d;"></div>
<div style="position:absolute;left:364px;top:437.3px;width:450.5px;height:0.6px;background:#2d2d2d;"></div>
<div style="position:absolute;left:364px;top:445.55px;width:450.5px;height:0.6px;background:#2d2d2d;"></div>
<div style="position:absolute;left:364px;top:453.8px;width:450.5px;height:0.6px;background:#2d2d2d;"></div>
<div style="position:absolute;left:364px;top:462.05px;width:450.5px;height:0.6px;background:#2d2d2d;"></div>
<div style="position:absolute;left:364px;top:470.3px;width:450.5px;height:0.6px;background:#2d2d2d;"></div>
<div style="position:absolute;left:364px;top:478.55px;width:450.5px;height:0.6px;background:#2d2d2d;"></div>
<div style="position:absolute;left:364px;top:486.8px;width:450.5px;height:0.6px;background:#2d2d2d;"></div>
<div style="position:absolute;left:364px;top:495.05px;width:450.5px;height:0.6px;background:#2d2d2d;"></div>
<div style="position:absolute;left:364px;top:503.3px;width:450.5px;height:0.6px;background:#2d2d2d;"></div>
<div style="position:absolute;left:364px;top:511.55px;width:450.5px;height:0.6px;background:#2d2d2d;"></div>
<div style="position:absolute;left:768.8px;top:404.9px;width:41.5px;height:7.4px;background:#ae7b2a;border-radius:1.800px 1.800px 0 0;"></div>
<div style="position:absolute;left:735.0999999999999px;top:413.15px;width:33.200000000000045px;height:7.4px;background:#ae7b2a;border-radius:1.800px 1.800px 0 0;"></div>
<div style="position:absolute;left:701.3999999999999px;top:421.4px;width:33.200000000000045px;height:7.4px;background:#ae7b2a;border-radius:1.800px 1.800px 0 0;"></div>
<div style="position:absolute;left:667.6999999999999px;top:429.65px;width:33.200000000000045px;height:7.4px;background:#ae7b2a;border-radius:1.800px 1.800px 0 0;"></div>
<div style="position:absolute;left:633.9999999999999px;top:437.9px;width:33.200000000000045px;height:7.4px;background:#ae7b2a;border-radius:1.800px 1.800px 0 0;"></div>
<div style="position:absolute;left:600.3px;top:446.15px;width:33.200000000000045px;height:7.4px;background:#ae7b2a;border-radius:1.800px 1.800px 0 0;"></div>
<div style="position:absolute;left:566.5999999999999px;top:454.4px;width:33.200000000000045px;height:7.4px;background:#ae7b2a;border-radius:1.800px 1.800px 0 0;"></div>
<div style="position:absolute;left:532.8999999999999px;top:462.65px;width:33.200000000000045px;height:7.4px;background:#ae7b2a;border-radius:1.800px 1.800px 0 0;"></div>
<div style="position:absolute;left:499.1999999999999px;top:470.9px;width:33.19999999999999px;height:7.4px;background:#ae7b2a;border-radius:1.800px 1.800px 0 0;"></div>
<div style="position:absolute;left:465.49999999999994px;top:479.15px;width:33.19999999999999px;height:7.4px;background:#ae7b2a;border-radius:1.800px 1.800px 0 0;"></div>
<div style="position:absolute;left:431.79999999999995px;top:487.4px;width:33.19999999999999px;height:7.4px;background:#ae7b2a;border-radius:1.800px 1.800px 0 0;"></div>
<div style="position:absolute;left:398.09999999999997px;top:495.65px;width:33.19999999999999px;height:7.4px;background:#ae7b2a;border-radius:1.800px 1.800px 0 0;"></div>
<div style="position:absolute;left:364.3999999999999px;top:503.9px;width:33.19999999999999px;height:7.4px;background:#ae7b2a;border-radius:1.800px 1.800px 0 0;"></div>
<div style="position:absolute;left:364px;top:512.7px;width:33px;height:1.5px;background:#ae7b2a;"></div>
<div style="position:absolute;left:412.8px;top:404.6px;width:0.9px;height:109.4px;background:#d0282a;"></div>
<div style="position:absolute;left:814.5px;top:378.5px;width:11.5px;height:144.5px;background:#1c1c1c;"></div>
<svg style="position:absolute;left:815.8px;top:395.5px;" width="7" height="7.5" viewBox="0 0 7 7.5"><path d="M.4 .4h6.200v4L3.500 7.100 .4 4.400z" fill="#b0b0b0"/><path d="M1.600 1.600h3.800v2.400L3.500 5.500 1.600 4z" fill="#6a6a6a"/></svg>
<svg style="position:absolute;left:815.5px;top:405px;" width="8" height="7" viewBox="0 0 8 7"><ellipse cx="4.200" cy="3" rx="3.300" ry="2.600" fill="#d8d8d8"/><path d="M.3 6.500h5V4.800H.3z" fill="#d8d8d8"/><circle cx="3" cy="2.600" r=".8" fill="#333"/><circle cx="5.400" cy="2.600" r=".8" fill="#333"/></svg>
<div style="position:absolute;left:814.5px;top:414px;width:11.5px;height:9px;background:#141414;"></div>
<div style="position:absolute;left:0px;top:514px;width:826px;height:9px;background:#222;"></div>
<div style="position:absolute;left:0px;top:513.8px;width:826px;height:0.7px;background:#141414;"></div>
<div style="position:absolute;left:364px;top:513.2px;width:450.5px;height:0.7px;background:#5a5a5a;"></div>
<svg style="position:absolute;left:2px;top:515.2px;" width="7" height="7" viewBox="0 0 7 7"><rect x=".4" y=".4" width="4.500" height="4.500" rx=".8" fill="#2ba0ea"/><rect x="2.400" y="2.400" width="4.200" height="4.200" rx=".8" fill="none" stroke="#2ba0ea" stroke-width=".9"/></svg>
<svg style="position:absolute;left:12px;top:515.2px;" width="7" height="7" viewBox="0 0 7 7"><circle cx="2.600" cy="2.800" r="2.100" fill="none" stroke="#2ba0ea" stroke-width="1"/><circle cx="4.400" cy="4.300" r="2.100" fill="none" stroke="#2ba0ea" stroke-width="1"/></svg>
<span style="position:absolute;top:514.381px;font-size:6px;line-height:7.2px;color:#c8c8c8;white-space:nowrap;font-weight:bold;left:19.3px;width:10px;text-align:center;">{}</span>
<div style="position:absolute;left:364px;top:514.5px;width:50px;height:8.5px;background:#1a1a1a;"></div>
<svg style="position:absolute;left:363.5px;top:516.5px;" width="5" height="4" viewBox="0 0 5 4"><path d="M.3 3.700L2.500 .8 4.700 3.700z" fill="#c8c8c8"/></svg>
<svg style="position:absolute;left:373.2px;top:515.2px;" width="5" height="6.5" viewBox="0 0 5 6.5"><path d="M.4 6.200V2.500L2.500 .6l2.100 1.900v3.700z" fill="#9a9a9a" stroke="#cfcfcf" stroke-width=".5"/></svg>
<svg style="position:absolute;left:402px;top:516px;" width="9" height="4.5" viewBox="0 0 9 4.5"><path d="M0 4.300L2.500 1.700 3.700 3 5.200 .4 9 4.300z" fill="#c8c8c8"/></svg>
<!-- import dialog -->
<div style="position:absolute;left:241px;top:45px;width:446px;height:376px;background:#ececec;border-radius:3px 3px 2px 2px;box-shadow:0 0 0 .5px rgba(0,0,0,.5),0 1px 1.500px rgba(0,0,0,.75),0 4px 12px rgba(0,0,0,.5);overflow:hidden">
<div style="position:absolute;left:-241px;top:-45px;width:930px;height:523px">
<div style="position:absolute;left:241px;top:45px;width:446px;height:30.7px;background:linear-gradient(#ebebeb,#e2e2e2 40%,#d2d2d2);border-bottom:.7px solid #aeaeae;"></div>
<div style="position:absolute;left:241px;top:45px;width:446px;height:0.7px;background:#f6f6f6;"></div>
<div style="position:absolute;left:245px;top:47.5px;width:6px;height:6px;background:#d4d4d4;border-radius:50%;border:.5px solid #bcbcbc;"></div>
<div style="position:absolute;left:254.7px;top:47.5px;width:6px;height:6px;background:#d4d4d4;border-radius:50%;border:.5px solid #bcbcbc;"></div>
<div style="position:absolute;left:264.3px;top:47.5px;width:6px;height:6px;background:#2ec640;border-radius:50%;border:.5px solid #24a534;"></div>
<span style="position:absolute;top:46.813px;font-size:6.6px;line-height:7.92px;color:#4c4c4c;white-space:nowrap;left:424.0px;width:80px;text-align:center;transform:scaleX(1.0393);transform-origin:50% 50%;">Import File</span>
<div style="position:absolute;left:246.5px;top:60.6px;width:12.3px;height:10.3px;background:linear-gradient(#ffffff,#f4f4f4);border-radius:2px;box-shadow:0 0 0 .5px rgba(0,0,0,.09),0 .5px .6px rgba(0,0,0,.2);"></div>
<div style="position:absolute;left:259.4px;top:60.6px;width:12.4px;height:10.3px;background:linear-gradient(#ffffff,#f4f4f4);border-radius:2px;box-shadow:0 0 0 .5px rgba(0,0,0,.09),0 .5px .6px rgba(0,0,0,.2);"></div>
<svg style="position:absolute;left:250.5px;top:62.8px;" width="4" height="6" viewBox="0 0 4 6"><path d="M3.300 .5L.8 3l2.500 2.500" fill="none" stroke="#555" stroke-width=".9"/></svg>
<svg style="position:absolute;left:263.8px;top:62.8px;" width="4" height="6" viewBox="0 0 4 6"><path d="M.7 .5L3.200 3 .7 5.500" fill="none" stroke="#c2c2c2" stroke-width=".9"/></svg>
<div style="position:absolute;left:275.8px;top:60.6px;width:53.7px;height:10.3px;background:linear-gradient(#ffffff,#f4f4f4);border-radius:2px;box-shadow:0 0 0 .5px rgba(0,0,0,.09),0 .5px .6px rgba(0,0,0,.2);"></div>
<div style="position:absolute;left:288.7px;top:60.6px;width:15px;height:10.3px;background:#6d6d6d;"></div>
<div style="position:absolute;left:303.7px;top:60.6px;width:0.5px;height:10.3px;background:#d0d0d0;"></div>
<div style="position:absolute;left:316.3px;top:60.6px;width:0.5px;height:10.3px;background:#d0d0d0;"></div>
<svg style="position:absolute;left:280px;top:63.3px;" width="5" height="5" viewBox="0 0 5 5"><path d="M0 0h2v2H0zM3 0h2v2H3zM0 3h2v2H0zM3 3h2v2H3z" fill="#666"/></svg>
<svg style="position:absolute;left:292.7px;top:63.3px;" width="7" height="5" viewBox="0 0 7 5"><path d="M0 .5h7M0 2.500h7M0 4.500h7" stroke="#f2f2f2" stroke-width="1.100"/></svg>
<svg style="position:absolute;left:306.5px;top:63.3px;" width="7.5" height="5" viewBox="0 0 7.5 5"><rect x=".3" y=".3" width="6.900" height="4.400" fill="none" stroke="#666" stroke-width=".6"/><path d="M2.600 .3v4.400M4.900 .3v4.400" stroke="#666" stroke-width=".6"/></svg>
<svg style="position:absolute;left:318.8px;top:63.3px;" width="8" height="5" viewBox="0 0 8 5"><rect x="2" y=".3" width="4" height="4.400" fill="none" stroke="#666" stroke-width=".6"/><path d="M.4 1v3M7.600 1v3" stroke="#666" stroke-width=".8"/></svg>
<div style="position:absolute;left:333.2px;top:60.6px;width:20.8px;height:10.3px;background:linear-gradient(#ffffff,#f4f4f4);border-radius:2px;box-shadow:0 0 0 .5px rgba(0,0,0,.09),0 .5px .6px rgba(0,0,0,.2);"></div>
<svg style="position:absolute;left:337px;top:63px;" width="6" height="5.5" viewBox="0 0 6 5.5"><path d="M0 0h1.600v1.500H0zM2.200 0h1.600v1.500H2.200zM4.400 0H6v1.500H4.400zM0 2h1.600v1.500H0zM2.200 2h1.600v1.500H2.200zM4.400 2H6v1.500H4.400zM0 4h1.600v1.500H0zM2.200 4h1.600v1.500H2.200zM4.400 4H6v1.500H4.400z" fill="#6a6a6a"/></svg>
<svg style="position:absolute;left:346px;top:64.7px;" width="4" height="3" viewBox="0 0 4 3"><path d="M.4 .5L2 2.300 3.600 .5" fill="none" stroke="#555" stroke-width=".8"/></svg>
<div style="position:absolute;left:414.3px;top:60.6px;width:100.2px;height:10.3px;background:linear-gradient(#ffffff,#f4f4f4);border-radius:2px;box-shadow:0 0 0 .5px rgba(0,0,0,.09),0 .5px .6px rgba(0,0,0,.2);"></div>
<svg style="position:absolute;left:417.5px;top:62.3px;" width="8" height="6.6" viewBox="0 0 8 6.6"><path d="M0 .8C0 .4.300 0 .7 0h2.200l.8 1h3.600c.4 0 .7.300.7.700V5.900c0 .4-.3.700-.7.700H.7C.3 6.600 0 6.300 0 5.900z" fill="#5fb4ec"/><path d="M0 1.900h8V5.900c0 .4-.3.700-.7.700H.7C.3 6.600 0 6.300 0 5.900z" fill="#7cc6f4"/></svg>
<span style="position:absolute;top:61.908px;font-size:6.5px;line-height:7.8px;color:#505050;white-space:nowrap;left:426.8px;transform:scaleX(1.0298);transform-origin:0 50%;">Wedding Photos</span>
<svg style="position:absolute;left:508px;top:62.5px;" width="4" height="6.5" viewBox="0 0 4 6.5"><path d="M.5 2.400L2 .7 3.500 2.400M.5 4.100L2 5.800 3.500 4.100" fill="none" stroke="#555" stroke-width=".8"/></svg>
<div style="position:absolute;left:523.8px;top:60.6px;width:158.2px;height:10.3px;background:linear-gradient(#ffffff,#f4f4f4);border-radius:2px;box-shadow:0 0 0 .5px rgba(0,0,0,.09),0 .5px .6px rgba(0,0,0,.2);background:#fbfbfb;"></div>
<svg style="position:absolute;left:583.5px;top:62.8px;" width="6" height="6" viewBox="0 0 6 6"><circle cx="2.400" cy="2.400" r="1.800" fill="none" stroke="#8e8e8e" stroke-width=".8"/><path d="M3.700 3.700L5.600 5.600" stroke="#8e8e8e" stroke-width=".9"/></svg>
<span style="position:absolute;top:61.908px;font-size:6.5px;line-height:7.8px;color:#b9b9b9;white-space:nowrap;left:592px;transform:scaleX(1.0099);transform-origin:0 50%;">Search</span>
<div style="position:absolute;left:241px;top:76.2px;width:96px;height:227.5px;background:linear-gradient(90deg,#f7dfbe 0%,#f8e7d0 25%,#f7eee2 55%,#ecf0ee 80%,#e0e9e8 100%);border-right:.6px solid #c9cfce;"></div>
<span style="position:absolute;top:79.665px;font-size:5.7px;line-height:6.84px;color:#444;white-space:nowrap;left:245.8px;">Favorites</span>
<svg style="position:absolute;left:249.5px;top:89.95px;" width="9" height="8.5" viewBox="0 0 9 8.5"><rect x=".5" y=".8" width="8" height="6" rx=".8" fill="#d8d2ca" stroke="#6e6e6e" stroke-width=".7"/><path d="M1.500 5.500h6" stroke="#6e6e6e" stroke-width=".5"/></svg>
<span style="position:absolute;top:90.576px;font-size:6.85px;line-height:8.22px;color:#2c2c2c;white-space:nowrap;left:261.5px;">Desktop</span>
<svg style="position:absolute;left:249.5px;top:103.23px;" width="9" height="8.5" viewBox="0 0 9 8.5"><path d="M2.300.3L0 1.800l2.300 1.500L4.500 1.800zM6.700.3L4.500 1.800l2.200 1.500L9 1.800zM0 4.700l2.300 1.500L4.500 4.700 2.300 3.300zM6.700 3.300L4.500 4.700l2.200 1.500L9 4.700zM2.300 6.700l2.200 1.400 2.200-1.400L4.500 5.300z" fill="#5e5e5e"/></svg>
<span style="position:absolute;top:103.576px;font-size:6.85px;line-height:8.22px;color:#2c2c2c;white-space:nowrap;left:261.5px;">Dropbox</span>
<svg style="position:absolute;left:249.5px;top:115.11px;" width="9" height="8.5" viewBox="0 0 9 8.5"><rect x="1" y=".4" width="7" height="7.600" rx="1" fill="#e6e0d8" stroke="#6e6e6e" stroke-width=".7"/><path d="M1 5.500h2l.5 1h2l.5-1h2" fill="none" stroke="#6e6e6e" stroke-width=".6"/><path d="M2.500 2h4M2.500 3.500h4" stroke="#6e6e6e" stroke-width=".4"/></svg>
<span style="position:absolute;top:115.576px;font-size:6.85px;line-height:8.22px;color:#2c2c2c;white-space:nowrap;left:261.5px;">All My Files</span>
<svg style="position:absolute;left:249.5px;top:127.69000000000001px;" width="9" height="8.5" viewBox="0 0 9 8.5"><path d="M2.300 7C.9 7 .2 6.100.2 5.200c0-1 .8-1.700 1.600-1.800C2 2 3.100 1.200 4.400 1.200c1.300 0 2.300.8 2.600 1.900 1 .1 1.800.9 1.800 1.900S8 7 7 7z" fill="none" stroke="#6e6e6e" stroke-width=".7"/></svg>
<span style="position:absolute;top:127.576px;font-size:6.85px;line-height:8.22px;color:#2c2c2c;white-space:nowrap;left:261.5px;">iCloud Drive</span>
<svg style="position:absolute;left:249.5px;top:140.26999999999998px;" width="9" height="8.5" viewBox="0 0 9 8.5"><path d="M.5 7L3 1.500M3 1.500L5.500 7M1.300 5.200h3.400M4.500 4.200l2-3M6.500 1.200L8.700 5" fill="none" stroke="#6e6e6e" stroke-width=".7"/></svg>
<span style="position:absolute;top:140.576px;font-size:6.85px;line-height:8.22px;color:#2c2c2c;white-space:nowrap;left:261.5px;">Applications</span>
<svg style="position:absolute;left:249.5px;top:152.85px;" width="9" height="8.5" viewBox="0 0 9 8.5"><path d="M3 .5h3.500l1.500 1.500V6.500H3z" fill="#e6e0d8" stroke="#6e6e6e" stroke-width=".7"/><path d="M1 2h3.500v6H1z" fill="#e6e0d8" stroke="#6e6e6e" stroke-width=".7"/></svg>
<span style="position:absolute;top:153.576px;font-size:6.85px;line-height:8.22px;color:#2c2c2c;white-space:nowrap;left:261.5px;">Documents</span>
<svg style="position:absolute;left:249.5px;top:165.43px;" width="9" height="8.5" viewBox="0 0 9 8.5"><circle cx="4.500" cy="4.200" r="4" fill="#5a5a5a"/><path d="M4.500 1.800v3.600M2.700 4.200l1.800 2 1.800-2" fill="none" stroke="#f4ece0" stroke-width="1.100"/></svg>
<span style="position:absolute;top:165.576px;font-size:6.85px;line-height:8.22px;color:#2c2c2c;white-space:nowrap;left:261.5px;">Downloads</span>
<svg style="position:absolute;left:249.5px;top:178.01px;" width="9" height="8.5" viewBox="0 0 9 8.5"><path d="M.4 1.500C.4 1.100.700.800 1.100.800h2.200l.8 1h3.800c.4 0 .7.300.7.700V6.900c0 .4-.3.700-.7.700H1.100C.7 7.600.4 7.300.4 6.900z" fill="#ddd7ce" stroke="#6e6e6e" stroke-width=".7"/><path d="M.4 3h8.200" stroke="#6e6e6e" stroke-width=".5"/></svg>
<span style="position:absolute;top:178.576px;font-size:6.85px;line-height:8.22px;color:#2c2c2c;white-space:nowrap;left:261.5px;">Creative Cloud Files</span>
<svg style="position:absolute;left:249.5px;top:190.58999999999997px;" width="9" height="8.5" viewBox="0 0 9 8.5"><path d="M3 6.500V1.500L7.500 .6V5.500" fill="none" stroke="#444" stroke-width=".8"/><ellipse cx="2" cy="6.600" rx="1.300" ry="1" fill="#444"/><ellipse cx="6.500" cy="5.700" rx="1.300" ry="1" fill="#444"/></svg>
<span style="position:absolute;top:190.576px;font-size:6.85px;line-height:8.22px;color:#2c2c2c;white-space:nowrap;left:261.5px;">Music</span>
<svg style="position:absolute;left:249.5px;top:203.17px;" width="9" height="8.5" viewBox="0 0 9 8.5"><path d="M.5 4.200L4.500 .6l4 3.600M1.700 3.500V7.600h5.600V3.500" fill="none" stroke="#6e6e6e" stroke-width=".8"/><rect x="3.700" y="4.800" width="1.600" height="2.800" fill="#6e6e6e"/></svg>
<span style="position:absolute;top:203.576px;font-size:6.85px;line-height:8.22px;color:#2c2c2c;white-space:nowrap;left:261.5px;">work</span>
<svg style="position:absolute;left:249.5px;top:215.75px;" width="9" height="8.5" viewBox="0 0 9 8.5"><path d="M.4 1.500C.4 1.100.700.800 1.100.800h2.200l.8 1h3.800c.4 0 .7.300.7.700V6.900c0 .4-.3.700-.7.700H1.100C.7 7.600.4 7.300.4 6.900z" fill="#ddd7ce" stroke="#6e6e6e" stroke-width=".7"/><path d="M.4 3h8.200" stroke="#6e6e6e" stroke-width=".5"/></svg>
<span style="position:absolute;top:215.576px;font-size:6.85px;line-height:8.22px;color:#2c2c2c;white-space:nowrap;left:261.5px;">Google Drive</span>
<span style="position:absolute;top:231.665px;font-size:5.7px;line-height:6.84px;color:#444;white-space:nowrap;left:245.8px;">Devices</span>
<svg style="position:absolute;left:249.5px;top:242.39999999999998px;" width="9" height="8.5" viewBox="0 0 9 8.5"><rect x="1" y=".4" width="7" height="7.600" rx="1" fill="#e6e0d8" stroke="#6e6e6e" stroke-width=".7"/><path d="M1 5.800h7" stroke="#6e6e6e" stroke-width=".5"/><circle cx="6.500" cy="6.900" r=".4" fill="#6e6e6e"/></svg>
<span style="position:absolute;top:242.576px;font-size:6.85px;line-height:8.22px;color:#2c2c2c;white-space:nowrap;left:261.5px;">Mac HD</span>
<svg style="position:absolute;left:249.5px;top:254.89999999999998px;" width="9" height="8.5" viewBox="0 0 9 8.5"><rect x="1" y=".4" width="7" height="7.600" rx="1" fill="#e6e0d8" stroke="#6e6e6e" stroke-width=".7"/><circle cx="4.500" cy="3.500" r="1.900" fill="none" stroke="#6e6e6e" stroke-width=".6"/><path d="M4.500 2.500v1.100l.8.500" fill="none" stroke="#6e6e6e" stroke-width=".5"/></svg>
<span style="position:absolute;top:255.576px;font-size:6.85px;line-height:8.22px;color:#2c2c2c;white-space:nowrap;left:261.5px;">Time Machine</span>
<svg style="position:absolute;left:325.5px;top:257px;" width="4.5" height="4.5" viewBox="0 0 4.5 4.5"><path d="M.3 2.800L2.250 .4 4.200 2.800zM.3 3.500h3.900v.8H.3z" fill="#777"/></svg>
<span style="position:absolute;top:270.665px;font-size:5.7px;line-height:6.84px;color:#444;white-space:nowrap;left:245.8px;">Shared</span>
<span style="position:absolute;top:284.665px;font-size:5.7px;line-height:6.84px;color:#444;white-space:nowrap;left:245.8px;">Media</span>
<svg style="position:absolute;left:249.5px;top:294.5px;" width="9" height="8.5" viewBox="0 0 9 8.5"><path d="M3 6.500V1.500L7.500 .6V5.500" fill="none" stroke="#444" stroke-width=".8"/><ellipse cx="2" cy="6.600" rx="1.300" ry="1" fill="#444"/><ellipse cx="6.500" cy="5.700" rx="1.300" ry="1" fill="#444"/></svg>
<span style="position:absolute;top:294.576px;font-size:6.85px;line-height:8.22px;color:#2c2c2c;white-space:nowrap;left:261.5px;">Music</span>
<div style="position:absolute;left:337.6px;top:76.2px;width:349.4px;height:227.5px;background:#ffffff;"></div>
<div style="position:absolute;left:337.6px;top:144.01999999999998px;width:347.9px;height:9.17px;background:#f4f4f4;"></div>
<div style="position:absolute;left:337.6px;top:162.36px;width:347.9px;height:9.17px;background:#f4f4f4;"></div>
<div style="position:absolute;left:337.6px;top:180.7px;width:347.9px;height:9.17px;background:#f4f4f4;"></div>
<div style="position:absolute;left:337.6px;top:199.04px;width:347.9px;height:9.17px;background:#f4f4f4;"></div>
<div style="position:absolute;left:337.6px;top:217.38px;width:347.9px;height:9.17px;background:#f4f4f4;"></div>
<div style="position:absolute;left:337.6px;top:235.72px;width:347.9px;height:9.17px;background:#f4f4f4;"></div>
<div style="position:absolute;left:337.6px;top:254.06px;width:347.9px;height:9.17px;background:#f4f4f4;"></div>
<div style="position:absolute;left:337.6px;top:272.4px;width:347.9px;height:9.17px;background:#f4f4f4;"></div>
<div style="position:absolute;left:337.6px;top:290.74px;width:347.9px;height:9.17px;background:#f4f4f4;"></div>
<div style="position:absolute;left:337.6px;top:76.2px;width:349.4px;height:11.5px;background:#f4f4f4;border-bottom:.7px solid #d4d4d4;"></div>
<span style="position:absolute;top:78.76px;font-size:5.6px;line-height:6.72px;color:#2a2a2a;white-space:nowrap;font-weight:bold;left:341px;">Name</span>
<svg style="position:absolute;left:487.5px;top:80px;" width="4.5" height="3.5" viewBox="0 0 4.5 3.5"><path d="M.4 2.800L2.250 .7 4.100 2.800" fill="none" stroke="#555" stroke-width=".8"/></svg>
<div style="position:absolute;left:496.5px;top:77.5px;width:0.6px;height:9px;background:#dcdcdc;"></div>
<div style="position:absolute;left:583.5px;top:77.5px;width:0.6px;height:9px;background:#dcdcdc;"></div>
<div style="position:absolute;left:630px;top:77.5px;width:0.6px;height:9px;background:#dcdcdc;"></div>
<span style="position:absolute;top:78.76px;font-size:5.6px;line-height:6.72px;color:#1c1c1c;white-space:nowrap;left:502px;-webkit-text-stroke:.12px #1c1c1c;">Date Modified</span>
<span style="position:absolute;top:78.76px;font-size:5.6px;line-height:6.72px;color:#1c1c1c;white-space:nowrap;right:305.5px;-webkit-text-stroke:.12px #1c1c1c;">Size</span>
<span style="position:absolute;top:78.76px;font-size:5.6px;line-height:6.72px;color:#1c1c1c;white-space:nowrap;left:636.5px;-webkit-text-stroke:.12px #1c1c1c;">Kind</span>
<div style="position:absolute;left:337.6px;top:88.4px;width:349.4px;height:45.4px;background:#5f93e6;"></div>
<div style="position:absolute;left:337.6px;top:89.0px;width:349.4px;height:8px;background:#155bd2;"></div>
<svg style="position:absolute;left:351.3px;top:91.2px;" width="6" height="4.6" viewBox="0 0 6 4.6"><rect x=".2" y=".2" width="5.600" height="4.200" fill="#e8e2cc"/><rect x=".9" y=".9" width="4.200" height="2.800" fill="#b9923c"/><rect x="2.300" y="1.500" width="1.400" height="1.400" fill="#3a3a3a"/></svg>
<span style="position:absolute;top:89.908px;font-size:6.5px;line-height:7.8px;color:#ffffff;white-space:nowrap;left:361.3px;transform:scaleX(0.9882);transform-origin:0 50%;-webkit-text-stroke:.22px #fff;">Photo 1.jpg</span>
<svg style="position:absolute;left:484px;top:90.5px;" width="6" height="6" viewBox="0 0 6 6"><circle cx="3" cy="3" r="2.300" fill="#35b934"/><circle cx="3" cy="3" r="2.450" fill="none" stroke="#bfe6c4" stroke-width=".35"/><path d="M1.900 3.100l.8.900 1.500-1.900" fill="none" stroke="#fff" stroke-width=".7"/></svg>
<span style="position:absolute;top:89.908px;font-size:6.5px;line-height:7.8px;color:#ffffff;white-space:nowrap;left:502px;transform:scaleX(0.9948);transform-origin:0 50%;-webkit-text-stroke:.22px #fff;">May 12, 2014, 6:56 AM</span>
<span style="position:absolute;top:89.908px;font-size:6.5px;line-height:7.8px;color:#ffffff;white-space:nowrap;right:305.5px;-webkit-text-stroke:.22px #fff;">772 KB</span>
<span style="position:absolute;top:89.908px;font-size:6.5px;line-height:7.8px;color:#ffffff;white-space:nowrap;left:636.5px;transform:scaleX(0.877);transform-origin:0 50%;-webkit-text-stroke:.22px #fff;">JPEG image</span>
<div style="position:absolute;left:337.6px;top:98.17px;width:349.4px;height:8px;background:#155bd2;"></div>
<svg style="position:absolute;left:351.3px;top:100.37px;" width="6" height="4.6" viewBox="0 0 6 4.6"><rect x=".2" y=".2" width="5.600" height="4.200" fill="#e8e2cc"/><rect x=".9" y=".9" width="4.200" height="2.800" fill="#b9923c"/><rect x="2.300" y="1.500" width="1.400" height="1.400" fill="#3a3a3a"/></svg>
<span style="position:absolute;top:98.908px;font-size:6.5px;line-height:7.8px;color:#ffffff;white-space:nowrap;left:361.3px;transform:scaleX(0.9882);transform-origin:0 50%;-webkit-text-stroke:.22px #fff;">Photo 2.jpg</span>
<svg style="position:absolute;left:484px;top:99.67px;" width="6" height="6" viewBox="0 0 6 6"><circle cx="3" cy="3" r="2.300" fill="#35b934"/><circle cx="3" cy="3" r="2.450" fill="none" stroke="#bfe6c4" stroke-width=".35"/><path d="M1.900 3.100l.8.900 1.500-1.900" fill="none" stroke="#fff" stroke-width=".7"/></svg>
<span style="position:absolute;top:98.908px;font-size:6.5px;line-height:7.8px;color:#ffffff;white-space:nowrap;left:502px;transform:scaleX(0.9948);transform-origin:0 50%;-webkit-text-stroke:.22px #fff;">May 12, 2014, 9:26 AM</span>
<span style="position:absolute;top:98.908px;font-size:6.5px;line-height:7.8px;color:#ffffff;white-space:nowrap;right:305.5px;-webkit-text-stroke:.22px #fff;">1.2 MB</span>
<span style="position:absolute;top:98.908px;font-size:6.5px;line-height:7.8px;color:#ffffff;white-space:nowrap;left:636.5px;transform:scaleX(0.877);transform-origin:0 50%;-webkit-text-stroke:.22px #fff;">JPEG image</span>
<div style="position:absolute;left:337.6px;top:107.34px;width:349.4px;height:8px;background:#155bd2;"></div>
<svg style="position:absolute;left:351.3px;top:109.54px;" width="6" height="4.6" viewBox="0 0 6 4.6"><rect x=".2" y=".2" width="5.600" height="4.200" fill="#e8e2cc"/><rect x=".9" y=".9" width="4.200" height="2.800" fill="#b9923c"/><rect x="2.300" y="1.500" width="1.400" height="1.400" fill="#3a3a3a"/></svg>
<span style="position:absolute;top:107.908px;font-size:6.5px;line-height:7.8px;color:#ffffff;white-space:nowrap;left:361.3px;transform:scaleX(0.9882);transform-origin:0 50%;-webkit-text-stroke:.22px #fff;">Photo 3.jpg</span>
<svg style="position:absolute;left:484px;top:108.84px;" width="6" height="6" viewBox="0 0 6 6"><circle cx="3" cy="3" r="2.300" fill="#35b934"/><circle cx="3" cy="3" r="2.450" fill="none" stroke="#bfe6c4" stroke-width=".35"/><path d="M1.900 3.100l.8.900 1.500-1.900" fill="none" stroke="#fff" stroke-width=".7"/></svg>
<span style="position:absolute;top:107.908px;font-size:6.5px;line-height:7.8px;color:#ffffff;white-space:nowrap;left:502px;transform:scaleX(0.9948);transform-origin:0 50%;-webkit-text-stroke:.22px #fff;">May 12, 2014, 6:55 AM</span>
<span style="position:absolute;top:107.908px;font-size:6.5px;line-height:7.8px;color:#ffffff;white-space:nowrap;right:305.5px;-webkit-text-stroke:.22px #fff;">915 KB</span>
<span style="position:absolute;top:107.908px;font-size:6.5px;line-height:7.8px;color:#ffffff;white-space:nowrap;left:636.5px;transform:scaleX(0.877);transform-origin:0 50%;-webkit-text-stroke:.22px #fff;">JPEG image</span>
<div style="position:absolute;left:337.6px;top:116.50999999999999px;width:349.4px;height:8px;background:#155bd2;"></div>
<svg style="position:absolute;left:351.3px;top:118.71px;" width="6" height="4.6" viewBox="0 0 6 4.6"><rect x=".2" y=".2" width="5.600" height="4.200" fill="#e8e2cc"/><rect x=".9" y=".9" width="4.200" height="2.800" fill="#b9923c"/><rect x="2.300" y="1.500" width="1.400" height="1.400" fill="#3a3a3a"/></svg>
<span style="position:absolute;top:116.908px;font-size:6.5px;line-height:7.8px;color:#ffffff;white-space:nowrap;left:361.3px;transform:scaleX(0.9882);transform-origin:0 50%;-webkit-text-stroke:.22px #fff;">Photo 4.jpg</span>
<svg style="position:absolute;left:484px;top:118.00999999999999px;" width="6" height="6" viewBox="0 0 6 6"><circle cx="3" cy="3" r="2.300" fill="#35b934"/><circle cx="3" cy="3" r="2.450" fill="none" stroke="#bfe6c4" stroke-width=".35"/><path d="M1.900 3.100l.8.900 1.500-1.900" fill="none" stroke="#fff" stroke-width=".7"/></svg>
<span style="position:absolute;top:116.908px;font-size:6.5px;line-height:7.8px;color:#ffffff;white-space:nowrap;left:502px;transform:scaleX(0.9948);transform-origin:0 50%;-webkit-text-stroke:.22px #fff;">May 12, 2014, 6:42 AM</span>
<span style="position:absolute;top:116.908px;font-size:6.5px;line-height:7.8px;color:#ffffff;white-space:nowrap;right:305.5px;-webkit-text-stroke:.22px #fff;">653 KB</span>
<span style="position:absolute;top:116.908px;font-size:6.5px;line-height:7.8px;color:#ffffff;white-space:nowrap;left:636.5px;transform:scaleX(0.877);transform-origin:0 50%;-webkit-text-stroke:.22px #fff;">JPEG image</span>
<div style="position:absolute;left:337.6px;top:125.68px;width:349.4px;height:8px;background:#155bd2;"></div>
<svg style="position:absolute;left:351.3px;top:127.88000000000001px;" width="6" height="4.6" viewBox="0 0 6 4.6"><rect x=".2" y=".2" width="5.600" height="4.200" fill="#e8e2cc"/><rect x=".9" y=".9" width="4.200" height="2.800" fill="#b9923c"/><rect x="2.300" y="1.500" width="1.400" height="1.400" fill="#3a3a3a"/></svg>
<span style="position:absolute;top:125.908px;font-size:6.5px;line-height:7.8px;color:#ffffff;white-space:nowrap;left:361.3px;transform:scaleX(0.9882);transform-origin:0 50%;-webkit-text-stroke:.22px #fff;">Photo 5.jpg</span>
<svg style="position:absolute;left:484px;top:127.18px;" width="6" height="6" viewBox="0 0 6 6"><circle cx="3" cy="3" r="2.300" fill="#35b934"/><circle cx="3" cy="3" r="2.450" fill="none" stroke="#bfe6c4" stroke-width=".35"/><path d="M1.900 3.100l.8.900 1.500-1.900" fill="none" stroke="#fff" stroke-width=".7"/></svg>
<span style="position:absolute;top:125.908px;font-size:6.5px;line-height:7.8px;color:#ffffff;white-space:nowrap;left:502px;transform:scaleX(0.9895);transform-origin:0 50%;-webkit-text-stroke:.22px #fff;">May 16, 2014, 1:24 PM</span>
<span style="position:absolute;top:125.908px;font-size:6.5px;line-height:7.8px;color:#ffffff;white-space:nowrap;right:305.5px;-webkit-text-stroke:.22px #fff;">1.2 MB</span>
<span style="position:absolute;top:125.908px;font-size:6.5px;line-height:7.8px;color:#ffffff;white-space:nowrap;left:636.5px;transform:scaleX(0.877);transform-origin:0 50%;-webkit-text-stroke:.22px #fff;">JPEG image</span>
<div style="position:absolute;left:241px;top:303.7px;width:446px;height:117.3px;background:#ececec;border-top:.6px solid #d6d6d6;"></div>
<div style="position:absolute;left:246px;top:309.3px;width:436px;height:92px;background:#e2e2e2;border:.5px solid #dadada;border-radius:2px;"></div>
<span style="position:absolute;top:320.908px;font-size:6.5px;line-height:7.8px;color:#222;white-space:nowrap;right:515px;transform:scaleX(0.9843);transform-origin:100% 50%;">Enable:</span>
<div style="position:absolute;left:417.7px;top:319.3px;width:113px;height:9.8px;background:linear-gradient(#ffffff,#f4f4f4);border-radius:2px;box-shadow:0 0 0 .5px rgba(0,0,0,.09),0 .5px .6px rgba(0,0,0,.2);"></div>
<div style="position:absolute;left:523px;top:319.3px;width:7.7px;height:9.8px;background:linear-gradient(#5aa9fb,#1a6df2);border-radius:0 2px 2px 0;"></div>
<svg style="position:absolute;left:524.9px;top:321px;" width="4" height="6.5" viewBox="0 0 4 6.5"><path d="M.6 2.400L2 .9 3.400 2.400M.6 4.100L2 5.600 3.400 4.100" fill="none" stroke="#fff" stroke-width=".8"/></svg>
<span style="position:absolute;top:320.908px;font-size:6.5px;line-height:7.8px;color:#222;white-space:nowrap;left:421px;transform:scaleX(1.0468);transform-origin:0 50%;">All Acceptable Files</span>
<span style="position:absolute;top:334.908px;font-size:6.5px;line-height:7.8px;color:#222;white-space:nowrap;right:515px;transform:scaleX(1.0495);transform-origin:100% 50%;">Format:</span>
<span style="position:absolute;top:334.908px;font-size:6.5px;line-height:7.8px;color:#222;white-space:nowrap;left:421px;transform:scaleX(0.807);transform-origin:0 50%;">JPEG</span>
<span style="position:absolute;top:348.908px;font-size:6.5px;line-height:7.8px;color:#222;white-space:nowrap;right:515px;transform:scaleX(1.0834);transform-origin:100% 50%;">Import As:</span>
<div style="position:absolute;left:417.7px;top:347.5px;width:112.5px;height:9.6px;background:#e9e9e9;border-radius:2px;box-shadow:0 0 0 .5px rgba(0,0,0,.16);"></div>
<span style="position:absolute;top:348.908px;font-size:6.5px;line-height:7.8px;color:#a4a4a4;white-space:nowrap;left:421px;">Footage</span>
<svg style="position:absolute;left:524.5px;top:349.2px;" width="4" height="6.5" viewBox="0 0 4 6.5"><path d="M.6 2.400L2 .9 3.400 2.400M.6 4.100L2 5.600 3.400 4.100" fill="none" stroke="#9a9a9a" stroke-width=".7"/></svg>
<div style="position:absolute;left:417.7px;top:362.6px;width:113px;height:0.6px;background:#cfcfcf;"></div>
<div style="position:absolute;left:417.7px;top:368.3px;width:6.3px;height:6.3px;background:#fdfdfd;border-radius:1.200px;box-shadow:0 0 0 .5px rgba(0,0,0,.3);"></div>
<span style="position:absolute;top:367.908px;font-size:6.5px;line-height:7.8px;color:#2a2a2a;white-space:nowrap;left:426px;transform:scaleX(0.9259);transform-origin:0 50%;">JPEG Sequence</span>
<div style="position:absolute;left:425.3px;top:379.8px;width:6px;height:6px;background:#ececec;border-radius:1.200px;box-shadow:0 0 0 .5px rgba(0,0,0,.14);"></div>
<span style="position:absolute;top:378.908px;font-size:6.5px;line-height:7.8px;color:#b4b4b4;white-space:nowrap;left:433.3px;transform:scaleX(1.0486);transform-origin:0 50%;">Force alphabetical order</span>
<span style="position:absolute;top:388.611px;font-size:4.7px;line-height:5.64px;color:#3a3a3a;white-space:nowrap;left:433.3px;transform:scaleX(1.0131);transform-origin:0 50%;">(1 sequence range 1-5)</span>
<div style="position:absolute;left:610.7px;top:406.7px;width:33px;height:9.3px;background:linear-gradient(#ffffff,#f4f4f4);border-radius:2px;box-shadow:0 0 0 .5px rgba(0,0,0,.09),0 .5px .6px rgba(0,0,0,.2);"></div>
<span style="position:absolute;top:407.908px;font-size:6.5px;line-height:7.8px;color:#2a2a2a;white-space:nowrap;left:607.2px;width:40px;text-align:center;">Cancel</span>
<div style="position:absolute;left:648.3px;top:406.7px;width:33.7px;height:9.3px;background:linear-gradient(#62adfb,#1b70f3);border-radius:2px;box-shadow:0 0 0 .5px rgba(20,80,200,.5);"></div>
<span style="position:absolute;top:407.908px;font-size:6.5px;line-height:7.8px;color:#ffffff;white-space:nowrap;left:645.2px;width:40px;text-align:center;">Open</span>
</div></div>
<div style="position:absolute;left:927px;top:32px;width:3px;height:491px;background:#0a0a0a;"></div>
<div style="position:absolute;left:0px;top:32px;width:1px;height:491px;background:#111;"></div>
<div style="position:absolute;left:0px;top:522px;width:930px;height:1px;background:#111;"></div>
</div>
</body></html>
